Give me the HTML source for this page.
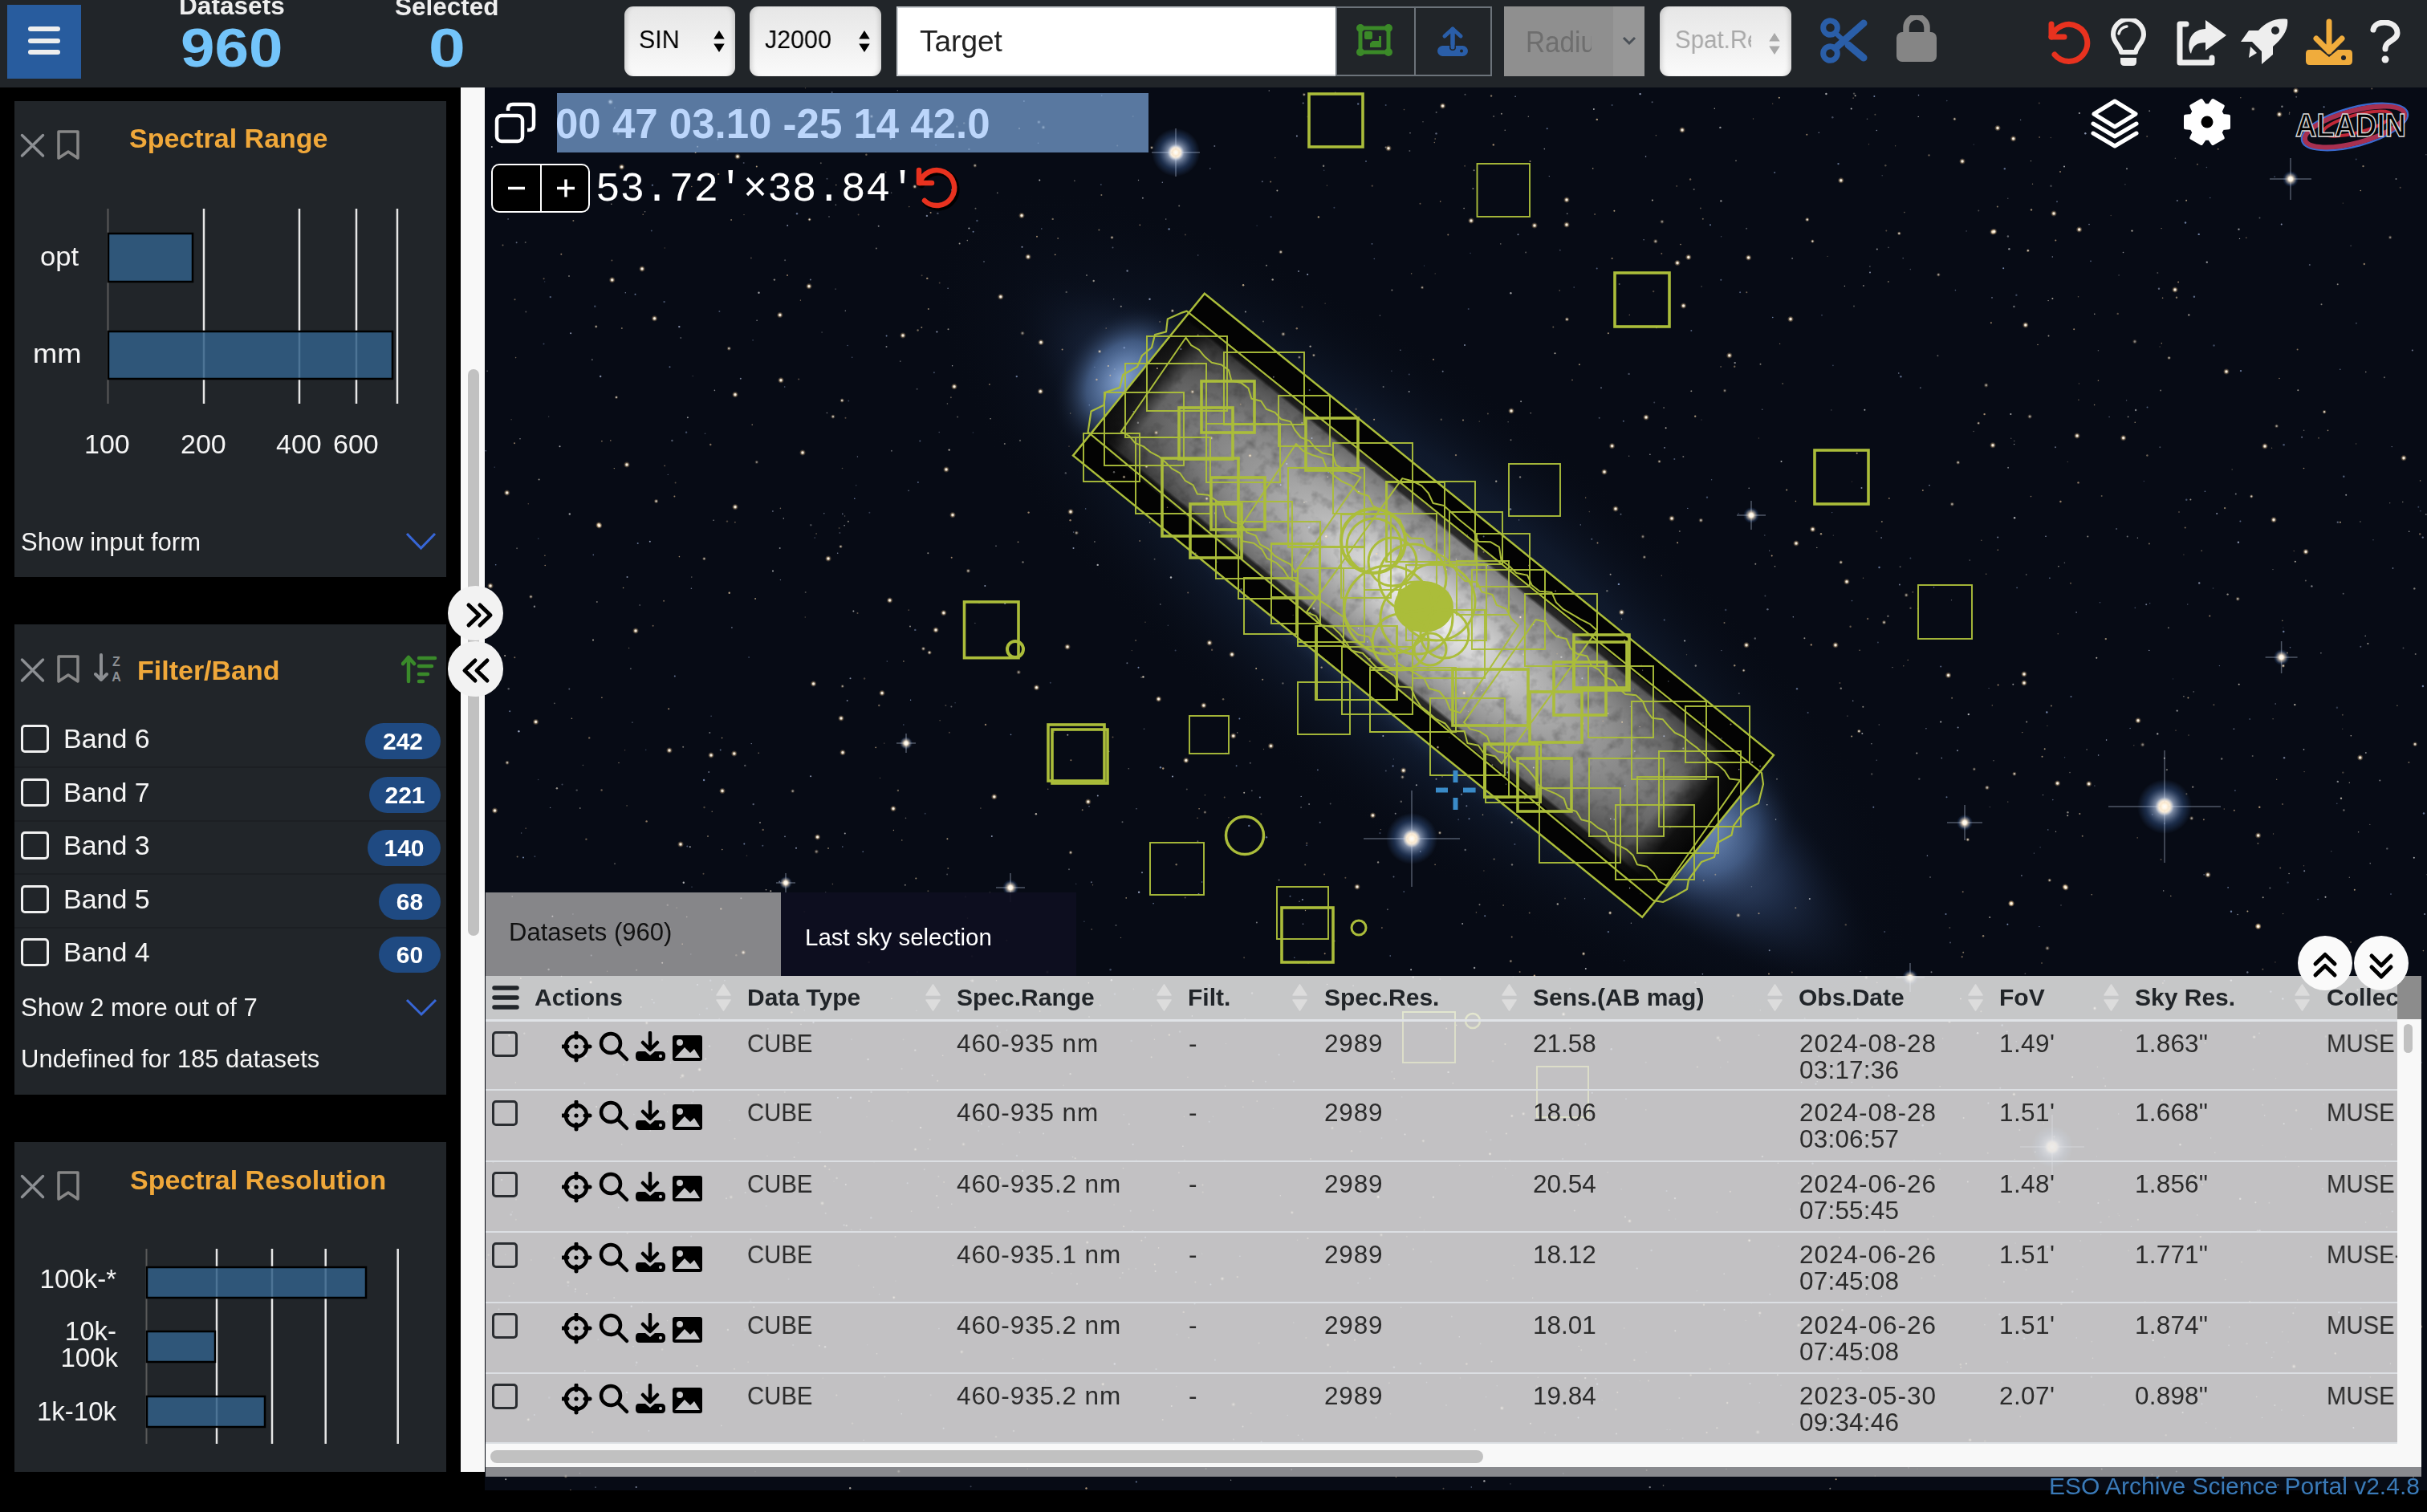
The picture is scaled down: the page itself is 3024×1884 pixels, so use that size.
<!DOCTYPE html>
<html><head><meta charset="utf-8">
<style>
*{box-sizing:border-box;margin:0;padding:0}
html,body{width:3024px;height:1884px;overflow:hidden;background:#000;font-family:"Liberation Sans",sans-serif;position:relative}
.abs{position:absolute}
#top{left:0;top:0;width:3024px;height:109px;background:#212529}
.sel{position:absolute;top:8px;height:87px;border-radius:11px;background:linear-gradient(#e6e6e6,#fafafa);box-shadow:inset 6px 0 6px -4px rgba(0,0,0,.18),inset -6px 0 6px -4px rgba(0,0,0,.18)}
.sel span{position:absolute;top:21px;font-size:32px;color:#000;line-height:40px;transform:scaleX(0.95);transform-origin:0 0;will-change:transform}
.arr{position:absolute;width:14px;height:27px;top:30px}
.panel{position:absolute;left:18px;width:538px;background:#212529}
.lbl{position:absolute;color:#f5f5f5;white-space:nowrap;will-change:transform}
.ttl{position:absolute;color:#f0a83a;font-weight:bold;font-size:34px;white-space:nowrap;line-height:40px;will-change:transform}
.badge{position:absolute;height:45px;border-radius:23px;background:#1f4a82;color:#fff;font-weight:bold;font-size:30px;line-height:45px;text-align:center;will-change:transform}
.cb{position:absolute;left:26px;width:35px;height:35px;border:3px solid #f0f0f0;border-radius:5px}
.rowsep{position:absolute;left:18px;width:538px;height:2px;background:#1c1f23}
</style></head><body>
<!-- TOP BAR -->
<div id="top" class="abs">
  <div class="abs" style="left:9px;top:6px;width:92px;height:92px;background:#285c9e"></div>
  <div class="abs" style="left:35px;top:33px;width:40px;height:6px;border-radius:3px;background:#eee"></div>
  <div class="abs" style="left:35px;top:48px;width:40px;height:6px;border-radius:3px;background:#eee"></div>
  <div class="abs" style="left:35px;top:62px;width:40px;height:6px;border-radius:3px;background:#eee"></div>
  <div class="lbl" style="left:223px;top:-9px;font-size:31px;font-weight:bold;color:#eee;line-height:34px;transform:scaleX(1.02);transform-origin:0 0">Datasets</div>
  <div class="lbl" style="left:225px;top:26px;font-size:67.6px;font-weight:bold;color:#73c4fa;line-height:68px;transform:scaleX(1.13);transform-origin:0 0">960</div>
  <div class="lbl" style="left:492px;top:-9px;font-size:31.5px;font-weight:bold;color:#eee;line-height:34px">Selected</div>
  <div class="lbl" style="left:534px;top:26px;font-size:67.6px;font-weight:bold;color:#73c4fa;line-height:68px;transform:scaleX(1.22);transform-origin:0 0">0</div>

  <div class="sel" style="left:778px;width:138px"><span style="left:18px">SIN</span>
    <svg class="arr" style="left:111px" viewBox="0 0 14 28"><path d="M7 0L14 11H0Z M7 28L14 17H0Z" fill="#000"/></svg></div>
  <div class="sel" style="left:934px;width:164px"><span style="left:19px">J2000</span>
    <svg class="arr" style="left:136px" viewBox="0 0 14 28"><path d="M7 0L14 11H0Z M7 28L14 17H0Z" fill="#000"/></svg></div>
  <div class="abs" style="left:1117px;top:8px;width:548px;height:87px;background:#fff;border:2px solid #c8ccd0;border-right:none"></div>
  <div class="lbl" style="left:1146px;top:30px;font-size:37px;color:#222;line-height:44px">Target</div>
  <div class="abs" style="left:1664px;top:8px;width:195px;height:87px;border:2px solid #6c737a"></div>
  <div class="abs" style="left:1762px;top:8px;width:2px;height:87px;background:#6c737a"></div>
  <svg class="abs" style="left:1690px;top:30px" width="45" height="40" viewBox="0 0 45 40">
    <rect x="5" y="5" width="35" height="30" fill="none" stroke="#3b8a28" stroke-width="5"/>
    <circle cx="5" cy="5" r="5" fill="#3b8a28"/><circle cx="40" cy="5" r="5" fill="#3b8a28"/><circle cx="5" cy="35" r="5" fill="#3b8a28"/><circle cx="40" cy="35" r="5" fill="#3b8a28"/>
    <rect x="10" y="9" width="10" height="10" rx="2" fill="#3b8a28"/><path d="M20 21h8v-6h3v14h-14v-5z" fill="#3b8a28"/>
  </svg>
  <svg class="abs" style="left:1790px;top:32px" width="40" height="40" viewBox="0 0 40 40">
    <path d="M20 28V4 M10 13L20 4L30 13" stroke="#2a5ea8" stroke-width="5" fill="none" stroke-linecap="round" stroke-linejoin="round"/>
    <rect x="1" y="25" width="38" height="13" rx="6.5" fill="#2a5ea8"/><circle cx="31" cy="31.5" r="2" fill="#212529"/>
    <circle cx="20" cy="27" r="4" fill="#212529"/><path d="M20 4V27" stroke="#2a5ea8" stroke-width="5" stroke-linecap="round"/>
  </svg>
  <div class="abs" style="left:1874px;top:8px;width:175px;height:87px;background:#8f8f8f"></div>
  <div class="abs" style="left:2010px;top:8px;width:39px;height:87px;background:#979797"></div>
  <div class="lbl" style="left:1901px;top:31px;font-size:37px;color:#6e6e6e;line-height:44px;width:82px;overflow:hidden"><span style="display:inline-block;transform:scaleX(0.9);transform-origin:0 0">Radius</span></div>
  <svg class="abs" style="left:2021px;top:45px" width="18" height="12" viewBox="0 0 18 12"><path d="M2 2L9 9L16 2" stroke="#4a5057" stroke-width="3" fill="none"/></svg>
  <div class="sel" style="left:2068px;width:164px"><span style="left:19px;color:#a9a9a9;top:22px;width:100px;overflow:hidden;white-space:nowrap;font-size:31px">Spat.Res</span>
    <svg class="arr" style="left:136px;top:33px" viewBox="0 0 14 28"><path d="M7 0L14 11H0Z M7 28L14 17H0Z" fill="#a9a9a9"/></svg></div>

  <!-- right icons -->
  <svg class="abs" style="left:2266px;top:20px" width="62" height="62" viewBox="0 0 62 62">
    <circle cx="14.5" cy="14.5" r="8.8" fill="none" stroke="#2a5ea8" stroke-width="7"/>
    <circle cx="14.5" cy="46.5" r="8.8" fill="none" stroke="#2a5ea8" stroke-width="7"/>
    <path d="M21 21L31 30.5" stroke="#2a5ea8" stroke-width="6"/>
    <path d="M21 40L56 9" stroke="#2a5ea8" stroke-width="9" stroke-linecap="round"/>
    <path d="M37 36L56 52" stroke="#2a5ea8" stroke-width="9" stroke-linecap="round"/>
  </svg>
  <svg class="abs" style="left:2362px;top:19px" width="52" height="60" viewBox="0 0 52 60">
    <path d="M13 24V15a13 13 0 0 1 26 0v9" fill="none" stroke="#858585" stroke-width="7.5"/>
    <rect x="1" y="21" width="50" height="37" rx="7" fill="#858585"/>
  </svg>
  <svg class="abs" style="left:2548px;top:24px" width="58" height="58" viewBox="0 0 58 58">
    <path d="M8 22A23 23 0 1 1 12 44" fill="none" stroke="#e8321f" stroke-width="7" stroke-linecap="round"/>
    <path d="M8 6V22H24" fill="none" stroke="#e8321f" stroke-width="7" stroke-linecap="round" stroke-linejoin="round"/>
  </svg>
  <svg class="abs" style="left:2630px;top:23px" width="44" height="62" viewBox="0 0 44 62">
    <path d="M13 42C12 34 3 30 3 20A19 19 0 0 1 41 20C41 30 32 34 31 42Z" fill="none" stroke="#eee" stroke-width="6" stroke-linejoin="round"/>
    <path d="M12 49H32V54Q32 59 27 59H17Q12 59 12 54Z" fill="#eee"/>
    <path d="M10 19A11 11 0 0 1 20 10" fill="none" stroke="#eee" stroke-width="3.5" stroke-linecap="round"/>
  </svg>
  <svg class="abs" style="left:2710px;top:22px" width="68" height="62" viewBox="0 0 68 62">
    <path d="M14 8H6V56H46V50" fill="none" stroke="#eee" stroke-width="7" stroke-linecap="round" stroke-linejoin="round"/>
    <path d="M38 3L64 22L38 41V31C28 31 22 34 20 45C15 38 15 15 38 14Z" fill="#eee"/>
  </svg>
  <svg class="abs" style="left:2790px;top:22px" width="62" height="62" viewBox="0 0 62 62">
    <path d="M60 2C45 0 33 6 24 16H12L2 30H16L28 42V58L42 46V36C54 26 62 14 60 2Z" fill="#eee"/>
    <path d="M14 36L22 44L12 50Z" fill="#eee"/>
    <circle cx="45" cy="16" r="5" fill="#212529"/>
  </svg>
  <svg class="abs" style="left:2871px;top:22px" width="62" height="62" viewBox="0 0 62 62">
    <path d="M31 5V42 M15 26L31 42L47 26" fill="none" stroke="#f0ac3c" stroke-width="7" stroke-linecap="round" stroke-linejoin="round"/>
    <path d="M6 40H20L31 49L42 40H56Q60 40 60 45V54Q60 59 55 59H7Q2 59 2 54V45Q2 40 6 40Z" fill="#f0ac3c"/>
    <circle cx="49" cy="50" r="3" fill="#212529"/>
  </svg>
  <svg class="abs" style="left:2952px;top:25px" width="40" height="54" viewBox="0 0 40 54">
    <path d="M5 12C6 7 11 3 19 3C28 3 35 8 35 16C35 26 20 25 20 36" fill="none" stroke="#eee" stroke-width="7" stroke-linecap="round"/>
    <circle cx="20" cy="49" r="4.5" fill="#eee"/>
  </svg>
</div>
<!-- SKY -->
<svg class="abs" style="left:604px;top:109px" width="2420" height="1748" viewBox="604 109 2420 1748">
<defs>
<radialGradient id="halo" cx="0" cy="0" r="1" gradientUnits="userSpaceOnUse" gradientTransform="translate(1803.4 788.8) rotate(39) scale(690 150)"><stop offset="0" stop-color="#9ab4e0" stop-opacity="0.8"/><stop offset="0.6" stop-color="#7a9ad0" stop-opacity="0.6"/><stop offset="0.78" stop-color="#4f70ac" stop-opacity="0.25"/><stop offset="1" stop-color="#0a0e18" stop-opacity="0"/></radialGradient>
<radialGradient id="blobA" cx="0" cy="0" r="1" gradientUnits="userSpaceOnUse" gradientTransform="translate(1398 472) rotate(39) scale(75 105)"><stop offset="0" stop-color="#a0c0f0" stop-opacity="0.8"/><stop offset="0.5" stop-color="#6f96d0" stop-opacity="0.45"/><stop offset="1" stop-color="#0a0e18" stop-opacity="0"/></radialGradient>
<radialGradient id="blobB" cx="0" cy="0" r="1" gradientUnits="userSpaceOnUse" gradientTransform="translate(2140 1035) rotate(39) scale(90 115)"><stop offset="0" stop-color="#8caee0" stop-opacity="0.45"/><stop offset="0.5" stop-color="#5f86c0" stop-opacity="0.25"/><stop offset="1" stop-color="#0a0e18" stop-opacity="0"/></radialGradient>
<radialGradient id="halo2" cx="0" cy="0" r="1" gradientUnits="userSpaceOnUse" gradientTransform="translate(1773 755) rotate(39) scale(760 260)"><stop offset="0" stop-color="#33507f" stop-opacity="0.5"/><stop offset="0.6" stop-color="#22385c" stop-opacity="0.3"/><stop offset="1" stop-color="#0a0e18" stop-opacity="0"/></radialGradient>
<radialGradient id="gal" cx="0" cy="0" r="1" gradientUnits="userSpaceOnUse" gradientTransform="translate(1773 755) rotate(39) scale(600 160)"><stop offset="0" stop-color="#ffffff"/><stop offset="0.08" stop-color="#e6e6e6"/><stop offset="0.3" stop-color="#b4b4b4"/><stop offset="0.55" stop-color="#858585"/><stop offset="0.75" stop-color="#555555"/><stop offset="0.88" stop-color="#2c2c2c"/><stop offset="1" stop-color="#141414"/></radialGradient>
<linearGradient id="endR" x1="0" y1="0" x2="1" y2="0"><stop offset="0" stop-color="#030303" stop-opacity="0"/><stop offset="0.5" stop-color="#030303" stop-opacity="0.85"/><stop offset="1" stop-color="#030303"/></linearGradient>
<linearGradient id="endL" x1="1" y1="0" x2="0" y2="0"><stop offset="0" stop-color="#030303" stop-opacity="0"/><stop offset="0.5" stop-color="#030303" stop-opacity="0.85"/><stop offset="1" stop-color="#030303"/></linearGradient>
<linearGradient id="edgeT" x1="0" y1="0" x2="0" y2="1"><stop offset="0" stop-color="#030303"/><stop offset="0.7" stop-color="#030303" stop-opacity="0.95"/><stop offset="1" stop-color="#030303" stop-opacity="0"/></linearGradient>
<linearGradient id="edgeB" x1="0" y1="1" x2="0" y2="0"><stop offset="0" stop-color="#030303"/><stop offset="0.7" stop-color="#030303" stop-opacity="0.95"/><stop offset="1" stop-color="#030303" stop-opacity="0"/></linearGradient>
<clipPath id="inner"><rect x="-456" y="-100" width="912" height="200" transform="translate(1773.5 754.25) rotate(39.04)"/></clipPath>
<radialGradient id="sg"><stop offset="0" stop-color="#fff" stop-opacity="1"/><stop offset="0.3" stop-color="#fff4e0" stop-opacity="0.9"/><stop offset="0.6" stop-color="#f0c890" stop-opacity="0.35"/><stop offset="1" stop-color="#f0c890" stop-opacity="0"/></radialGradient>
<radialGradient id="sgb"><stop offset="0" stop-color="#fff" stop-opacity="1"/><stop offset="0.2" stop-color="#fff" stop-opacity="1"/><stop offset="0.35" stop-color="#c8dcff" stop-opacity="0.6"/><stop offset="0.7" stop-color="#4a78c0" stop-opacity="0.3"/><stop offset="1" stop-color="#4a78c0" stop-opacity="0"/></radialGradient>
<filter id="tex" x="0" y="0" width="1" height="1"><feTurbulence type="fractalNoise" baseFrequency="0.06" numOctaves="3" seed="11"/><feColorMatrix type="matrix" values="1.1 0 0 0 0.42  1.1 0 0 0 0.42  1.1 0 0 0 0.42  0 0 0 0 1"/></filter>
</defs>
<rect x="604" y="109" width="2420" height="1748" fill="#070b15"/>
<rect x="604" y="109" width="2420" height="1748" fill="url(#halo2)"/>
<rect x="604" y="109" width="2420" height="1748" fill="url(#halo)"/>
<rect x="1200" y="300" width="400" height="400" fill="url(#blobA)"/>
<rect x="1950" y="850" width="450" height="450" fill="url(#blobB)"/>
<g transform="translate(1773.5 754.25) rotate(39.04)">
<rect x="-456.5" y="-130" width="913" height="260" fill="#030303"/>
</g>
<g clip-path="url(#inner)"><rect x="1200" y="300" width="1100" height="900" fill="url(#gal)"/><rect x="1200" y="300" width="1100" height="900" filter="url(#tex)" style="mix-blend-mode:multiply"/></g>
<g transform="translate(1773.5 754.25) rotate(39.04)"><rect x="-456" y="-101" width="912" height="12" fill="url(#edgeT)" opacity="0.7"/><rect x="-456" y="89" width="912" height="12" fill="url(#edgeB)" opacity="0.7"/><rect x="-456" y="-101" width="45" height="202" fill="url(#endL)" opacity="0.8"/><rect x="386" y="-101" width="70" height="202" fill="url(#endR)"/></g>
<circle cx="1387.7" cy="372.7" r="0.7" fill="#ffffff" fill-opacity="0.6195734313960888"/>
<circle cx="831.8" cy="1127.7" r="1.2" fill="#fff4e0" fill-opacity="0.2668730462988932"/>
<circle cx="1653.4" cy="231.1" r="0.7" fill="#f8d0a0" fill-opacity="0.4410336351141313"/>
<circle cx="2605.0" cy="325.4" r="0.8" fill="#a8c0f0" fill-opacity="0.5323449500825151"/>
<circle cx="2897.5" cy="1117.8" r="1" fill="#ffffff" fill-opacity="0.6893147975168139"/>
<circle cx="716.7" cy="1609.6" r="1" fill="#cfdcff" fill-opacity="0.3149147875108469"/>
<circle cx="889.1" cy="648.2" r="0.8" fill="#ffffff" fill-opacity="0.5117200736481098"/>
<circle cx="2150.2" cy="760.0" r="1.2" fill="#a8c0f0" fill-opacity="0.2782550387379954"/>
<circle cx="748.2" cy="469.0" r="1.2" fill="#cfdcff" fill-opacity="0.5997529487413631"/>
<circle cx="1730.8" cy="1723.2" r="1" fill="#ffe0b0" fill-opacity="0.3617919631858972"/>
<circle cx="1039.0" cy="1472.1" r="0.7" fill="#f8d0a0" fill-opacity="0.38511210334553136"/>
<circle cx="1802.2" cy="709.4" r="1" fill="#ffe0b0" fill-opacity="0.5240315585663816"/>
<circle cx="781.1" cy="1003.9" r="0.8" fill="#ffe0b0" fill-opacity="0.3183930405972272"/>
<circle cx="1787.3" cy="177.5" r="0.7" fill="#f8d0a0" fill-opacity="0.5078616731248228"/>
<circle cx="2722.7" cy="657.4" r="1" fill="#f8d0a0" fill-opacity="0.4735036578845444"/>
<circle cx="2532.5" cy="229.2" r="0.7" fill="#ffe0b0" fill-opacity="0.46334425183884"/>
<circle cx="2211.2" cy="215.1" r="1" fill="#a8c0f0" fill-opacity="0.5100758038229731"/>
<circle cx="2252.6" cy="888.0" r="1" fill="#a8c0f0" fill-opacity="0.4061523650598028"/>
<circle cx="2880.4" cy="730.4" r="1.2" fill="#ffffff" fill-opacity="0.4721618475506416"/>
<circle cx="1132.1" cy="611.4" r="0.8" fill="#cfdcff" fill-opacity="0.42592736640995216"/>
<circle cx="2712.8" cy="249.9" r="1" fill="#cfdcff" fill-opacity="0.4972479591148168"/>
<circle cx="2741.8" cy="1541.1" r="1.2" fill="#ffe0b0" fill-opacity="0.5678785192734258"/>
<circle cx="2991.3" cy="1302.4" r="1" fill="#fff4e0" fill-opacity="0.31791440760599904"/>
<circle cx="1030.4" cy="514.5" r="0.8" fill="#ffffff" fill-opacity="0.46823322865361044"/>
<circle cx="2029.7" cy="568.3" r="0.7" fill="#fff4e0" fill-opacity="0.4385259255063976"/>
<circle cx="1497.6" cy="1099.0" r="0.8" fill="#a8c0f0" fill-opacity="0.6366408771423335"/>
<circle cx="2903.5" cy="1253.9" r="0.7" fill="#cfdcff" fill-opacity="0.6547898545260784"/>
<circle cx="2491.5" cy="1637.6" r="1.2" fill="#cfdcff" fill-opacity="0.42913133375004286"/>
<circle cx="1557.8" cy="950.7" r="1" fill="#ffffff" fill-opacity="0.3357742919050635"/>
<circle cx="2986.9" cy="879.2" r="0.7" fill="#ffe0b0" fill-opacity="0.5203272672270165"/>
<circle cx="851.8" cy="1099.7" r="1.2" fill="#ffffff" fill-opacity="0.6770269413562451"/>
<circle cx="2089.2" cy="231.9" r="0.8" fill="#f8d0a0" fill-opacity="0.4193032128128984"/>
<circle cx="2139.3" cy="1779.2" r="1.2" fill="#ffe0b0" fill-opacity="0.46336815845429147"/>
<circle cx="883.2" cy="962.1" r="1" fill="#cfdcff" fill-opacity="0.4677255953873212"/>
<circle cx="811.8" cy="287.6" r="1" fill="#a8c0f0" fill-opacity="0.369140601272731"/>
<circle cx="2609.8" cy="391.2" r="0.7" fill="#fff4e0" fill-opacity="0.6779435077936159"/>
<circle cx="1882.4" cy="365.3" r="1.2" fill="#ffffff" fill-opacity="0.5911643317911717"/>
<circle cx="1325.4" cy="1232.8" r="0.7" fill="#a8c0f0" fill-opacity="0.6304514174722271"/>
<circle cx="1858.5" cy="1696.6" r="1" fill="#fff4e0" fill-opacity="0.48966657887179554"/>
<circle cx="2489.3" cy="685.3" r="0.8" fill="#f8d0a0" fill-opacity="0.6151800610481177"/>
<circle cx="2987.5" cy="1599.4" r="0.8" fill="#cfdcff" fill-opacity="0.5829428591690713"/>
<circle cx="1152.7" cy="1013.8" r="1" fill="#a8c0f0" fill-opacity="0.2630410678336144"/>
<circle cx="671.6" cy="597.4" r="1" fill="#fff4e0" fill-opacity="0.5616348737650555"/>
<circle cx="2918.8" cy="890.8" r="1" fill="#ffe0b0" fill-opacity="0.2862421564698819"/>
<circle cx="851.2" cy="930.7" r="1" fill="#fff4e0" fill-opacity="0.4671939859601101"/>
<circle cx="2988.3" cy="1175.7" r="0.7" fill="#cfdcff" fill-opacity="0.6591396390932807"/>
<circle cx="1436.5" cy="1233.2" r="0.7" fill="#cfdcff" fill-opacity="0.6020362978441405"/>
<circle cx="2419.3" cy="944.6" r="0.8" fill="#cfdcff" fill-opacity="0.6051109439591243"/>
<circle cx="1408.7" cy="1508.8" r="1" fill="#cfdcff" fill-opacity="0.43062406804046566"/>
<circle cx="2895.2" cy="1375.9" r="0.8" fill="#fff4e0" fill-opacity="0.2623969828189746"/>
<circle cx="2033.8" cy="922.4" r="0.8" fill="#f8d0a0" fill-opacity="0.6219297153364242"/>
<circle cx="2976.3" cy="1257.9" r="1" fill="#fff4e0" fill-opacity="0.4968970197940506"/>
<circle cx="921.0" cy="133.9" r="0.7" fill="#f8d0a0" fill-opacity="0.5872733028242823"/>
<circle cx="941.0" cy="1833.5" r="0.8" fill="#fff4e0" fill-opacity="0.2625971765318935"/>
<circle cx="1118.9" cy="985.0" r="1.2" fill="#ffe0b0" fill-opacity="0.36671415787159456"/>
<circle cx="1618.0" cy="338.1" r="1" fill="#cfdcff" fill-opacity="0.5481136736460548"/>
<circle cx="2576.4" cy="1012.3" r="1.2" fill="#fff4e0" fill-opacity="0.48932123309617015"/>
<circle cx="1870.9" cy="141.7" r="1" fill="#fff4e0" fill-opacity="0.5238495875281812"/>
<circle cx="2482.0" cy="370.9" r="0.8" fill="#cfdcff" fill-opacity="0.5285955576325727"/>
<circle cx="895.2" cy="216.9" r="1.2" fill="#f8d0a0" fill-opacity="0.49994884369611103"/>
<circle cx="2501.9" cy="294.5" r="1.2" fill="#ffffff" fill-opacity="0.3618224444693905"/>
<circle cx="1274.1" cy="1458.9" r="1.2" fill="#cfdcff" fill-opacity="0.5027782239954143"/>
<circle cx="2443.2" cy="1704.0" r="1" fill="#ffe0b0" fill-opacity="0.5256375479550072"/>
<circle cx="1827.4" cy="1004.3" r="1" fill="#cfdcff" fill-opacity="0.4786702695487323"/>
<circle cx="2557.8" cy="996.6" r="0.8" fill="#a8c0f0" fill-opacity="0.4854443437936974"/>
<circle cx="2723.9" cy="1730.8" r="1.2" fill="#fff4e0" fill-opacity="0.6279999025269426"/>
<circle cx="935.9" cy="321.6" r="1" fill="#ffe0b0" fill-opacity="0.2826457448454197"/>
<circle cx="1186.3" cy="236.8" r="1" fill="#ffffff" fill-opacity="0.653661894795445"/>
<circle cx="977.8" cy="1360.8" r="1" fill="#fff4e0" fill-opacity="0.3638985268568603"/>
<circle cx="936.2" cy="926.6" r="0.7" fill="#cfdcff" fill-opacity="0.6482197956686269"/>
<circle cx="998.0" cy="1276.4" r="0.8" fill="#fff4e0" fill-opacity="0.5678455985649289"/>
<circle cx="3009.7" cy="814.9" r="1" fill="#fff4e0" fill-opacity="0.41047665695351737"/>
<circle cx="827.1" cy="748.7" r="1" fill="#f8d0a0" fill-opacity="0.4564018457994322"/>
<circle cx="2305.6" cy="780.8" r="1.2" fill="#f8d0a0" fill-opacity="0.3829543499687167"/>
<circle cx="2929.1" cy="306.3" r="0.8" fill="#ffffff" fill-opacity="0.2878275701366657"/>
<circle cx="1262.0" cy="1692.5" r="0.8" fill="#ffe0b0" fill-opacity="0.5900994465373456"/>
<circle cx="2587.9" cy="1594.1" r="1" fill="#cfdcff" fill-opacity="0.31721557633183517"/>
<circle cx="2828.4" cy="1106.4" r="1" fill="#ffffff" fill-opacity="0.3755780356070915"/>
<circle cx="2539.0" cy="429.5" r="0.7" fill="#ffe0b0" fill-opacity="0.6722573690680732"/>
<circle cx="2139.3" cy="1510.2" r="0.7" fill="#f8d0a0" fill-opacity="0.635302886367467"/>
<circle cx="765.2" cy="1617.1" r="1" fill="#ffffff" fill-opacity="0.4026182997780863"/>
<circle cx="1942.4" cy="1728.8" r="1" fill="#f8d0a0" fill-opacity="0.308151159952898"/>
<circle cx="1879.1" cy="525.8" r="0.7" fill="#fff4e0" fill-opacity="0.367852881347171"/>
<circle cx="1042.4" cy="1738.6" r="1" fill="#f8d0a0" fill-opacity="0.5917742147493525"/>
<circle cx="1305.7" cy="983.2" r="0.8" fill="#ffe0b0" fill-opacity="0.4061504599575365"/>
<circle cx="648.0" cy="546.8" r="0.7" fill="#ffffff" fill-opacity="0.5798861725445411"/>
<circle cx="1937.5" cy="440.2" r="1" fill="#fff4e0" fill-opacity="0.6705892779020592"/>
<circle cx="861.2" cy="1540.5" r="1" fill="#a8c0f0" fill-opacity="0.4727507080559269"/>
<circle cx="2623.8" cy="796.1" r="1.2" fill="#ffe0b0" fill-opacity="0.5594837810608111"/>
<circle cx="2981.5" cy="708.0" r="0.8" fill="#cfdcff" fill-opacity="0.695247130143631"/>
<circle cx="2980.2" cy="1572.1" r="0.7" fill="#ffffff" fill-opacity="0.5314517414823184"/>
<circle cx="2733.2" cy="861.9" r="0.7" fill="#ffffff" fill-opacity="0.549352456097089"/>
<circle cx="1525.7" cy="993.4" r="1" fill="#f8d0a0" fill-opacity="0.3589958202966189"/>
<circle cx="1313.2" cy="912.1" r="0.8" fill="#ffe0b0" fill-opacity="0.4506210737051831"/>
<circle cx="1241.0" cy="1790.2" r="1.2" fill="#ffe0b0" fill-opacity="0.36000092227385205"/>
<circle cx="2940.9" cy="650.1" r="1" fill="#fff4e0" fill-opacity="0.25048101172521525"/>
<circle cx="1527.5" cy="938.7" r="1.2" fill="#a8c0f0" fill-opacity="0.3404410243904645"/>
<circle cx="1825.5" cy="117.7" r="1" fill="#ffffff" fill-opacity="0.3147393135710062"/>
<circle cx="2024.1" cy="797.7" r="1" fill="#ffe0b0" fill-opacity="0.5333514444884978"/>
<circle cx="808.4" cy="1782.9" r="0.8" fill="#a8c0f0" fill-opacity="0.6517605269118922"/>
<circle cx="2501.4" cy="1151.8" r="1" fill="#a8c0f0" fill-opacity="0.6931280882834332"/>
<circle cx="965.7" cy="1374.8" r="0.8" fill="#ffffff" fill-opacity="0.6211857115915439"/>
<circle cx="2334.3" cy="1005.7" r="1" fill="#a8c0f0" fill-opacity="0.5654739805720634"/>
<circle cx="1827.4" cy="1699.5" r="1.2" fill="#f8d0a0" fill-opacity="0.6257219170466618"/>
<circle cx="2551.3" cy="1553.6" r="1.2" fill="#a8c0f0" fill-opacity="0.5573029162752252"/>
<circle cx="2281.8" cy="510.9" r="0.7" fill="#ffffff" fill-opacity="0.30989193906414464"/>
<circle cx="1476.9" cy="292.4" r="1" fill="#f8d0a0" fill-opacity="0.27285114215683337"/>
<circle cx="649.6" cy="1038.0" r="0.8" fill="#cfdcff" fill-opacity="0.3687068026623982"/>
<circle cx="1709.8" cy="231.6" r="1.2" fill="#f8d0a0" fill-opacity="0.2913738675168512"/>
<circle cx="1876.9" cy="1412.5" r="1" fill="#ffe0b0" fill-opacity="0.6141484508924372"/>
<circle cx="2651.6" cy="519.4" r="0.8" fill="#fff4e0" fill-opacity="0.5829228661393338"/>
<circle cx="2965.3" cy="972.4" r="1" fill="#ffffff" fill-opacity="0.46555457383178167"/>
<circle cx="2258.5" cy="1449.7" r="1.2" fill="#a8c0f0" fill-opacity="0.5392433389218938"/>
<circle cx="791.5" cy="366.7" r="1" fill="#a8c0f0" fill-opacity="0.5844477658107807"/>
<circle cx="1340.7" cy="1101.4" r="0.7" fill="#cfdcff" fill-opacity="0.2772974563286388"/>
<circle cx="1254.4" cy="1283.7" r="0.8" fill="#a8c0f0" fill-opacity="0.470326439521353"/>
<circle cx="2319.5" cy="608.1" r="1" fill="#cfdcff" fill-opacity="0.595226391802179"/>
<circle cx="3007.8" cy="1068.8" r="1" fill="#ffffff" fill-opacity="0.6713144534291724"/>
<circle cx="646.4" cy="911.3" r="1.2" fill="#cfdcff" fill-opacity="0.6972851326383334"/>
<circle cx="1540.2" cy="1711.1" r="0.8" fill="#ffffff" fill-opacity="0.5116625654744833"/>
<circle cx="947.0" cy="1025.1" r="1" fill="#fff4e0" fill-opacity="0.5215145831487897"/>
<circle cx="2132.6" cy="597.7" r="0.7" fill="#a8c0f0" fill-opacity="0.41433483663292686"/>
<circle cx="1808.9" cy="1640.5" r="1" fill="#ffffff" fill-opacity="0.32157937103223583"/>
<circle cx="2902.9" cy="1300.4" r="1" fill="#ffe0b0" fill-opacity="0.5772322462001311"/>
<circle cx="1611.2" cy="766.4" r="0.7" fill="#ffe0b0" fill-opacity="0.25078362186287645"/>
<circle cx="2420.8" cy="1575.8" r="0.7" fill="#fff4e0" fill-opacity="0.5708606046086157"/>
<circle cx="2785.8" cy="615.6" r="1" fill="#ffffff" fill-opacity="0.42680472191849705"/>
<circle cx="3021.1" cy="1138.9" r="1" fill="#cfdcff" fill-opacity="0.5900453770445276"/>
<circle cx="2671.3" cy="599.6" r="0.7" fill="#a8c0f0" fill-opacity="0.3785304355303464"/>
<circle cx="2868.1" cy="544.8" r="1" fill="#cfdcff" fill-opacity="0.4799333445133315"/>
<circle cx="1063.4" cy="761.6" r="1" fill="#ffffff" fill-opacity="0.6153830203618476"/>
<circle cx="2130.8" cy="1705.7" r="1.2" fill="#f8d0a0" fill-opacity="0.3415461162016366"/>
<circle cx="799.0" cy="1740.7" r="1" fill="#cfdcff" fill-opacity="0.5267113327138171"/>
<circle cx="939.3" cy="1628.8" r="1" fill="#ffffff" fill-opacity="0.6603573595512633"/>
<circle cx="1935.3" cy="407.5" r="1" fill="#ffe0b0" fill-opacity="0.37678571778533854"/>
<circle cx="1222.9" cy="1400.3" r="1" fill="#cfdcff" fill-opacity="0.545197896714503"/>
<circle cx="1332.0" cy="1083.2" r="1" fill="#ffffff" fill-opacity="0.3252996104914119"/>
<circle cx="995.2" cy="472.4" r="1" fill="#f8d0a0" fill-opacity="0.34901136349025164"/>
<circle cx="2797.1" cy="1850.8" r="1" fill="#cfdcff" fill-opacity="0.312818228799875"/>
<circle cx="1069.6" cy="267.6" r="1" fill="#f8d0a0" fill-opacity="0.29099245290219394"/>
<circle cx="1182.7" cy="560.6" r="1.2" fill="#fff4e0" fill-opacity="0.6492631566452739"/>
<circle cx="2418.2" cy="830.5" r="1" fill="#a8c0f0" fill-opacity="0.4858756642379032"/>
<circle cx="1516.0" cy="700.2" r="0.7" fill="#cfdcff" fill-opacity="0.37488235614021376"/>
<circle cx="2945.8" cy="329.0" r="1.2" fill="#f8d0a0" fill-opacity="0.5333321076306726"/>
<circle cx="2692.1" cy="486.5" r="1" fill="#fff4e0" fill-opacity="0.4230523417136871"/>
<circle cx="2166.8" cy="863.9" r="1" fill="#ffffff" fill-opacity="0.30726115937910653"/>
<circle cx="1633.0" cy="1443.9" r="1" fill="#f8d0a0" fill-opacity="0.47042096294522584"/>
<circle cx="781.0" cy="1735.1" r="1.2" fill="#cfdcff" fill-opacity="0.6875085048528587"/>
<circle cx="1205.3" cy="299.6" r="0.8" fill="#fff4e0" fill-opacity="0.48506452320031357"/>
<circle cx="2254.6" cy="1754.7" r="1" fill="#ffffff" fill-opacity="0.49817541166832835"/>
<circle cx="699.7" cy="1476.5" r="0.8" fill="#f8d0a0" fill-opacity="0.6639640492716155"/>
<circle cx="2166.1" cy="640.0" r="0.8" fill="#a8c0f0" fill-opacity="0.36330727627660264"/>
<circle cx="2143.8" cy="1330.1" r="0.7" fill="#ffffff" fill-opacity="0.28165835876134915"/>
<circle cx="1873.1" cy="1127.9" r="1" fill="#ffe0b0" fill-opacity="0.35061236512451793"/>
<circle cx="2058.6" cy="127.3" r="1" fill="#cfdcff" fill-opacity="0.37537164264561973"/>
<circle cx="1369.6" cy="1576.3" r="0.8" fill="#cfdcff" fill-opacity="0.48682496849928525"/>
<circle cx="1927.7" cy="160.2" r="1" fill="#a8c0f0" fill-opacity="0.5423424909884409"/>
<circle cx="737.8" cy="448.3" r="1" fill="#ffffff" fill-opacity="0.3657652549633996"/>
<circle cx="2219.0" cy="1726.2" r="0.8" fill="#cfdcff" fill-opacity="0.2653438405179996"/>
<circle cx="1422.1" cy="844.1" r="1" fill="#fff4e0" fill-opacity="0.25303905948012245"/>
<circle cx="1310.9" cy="1586.3" r="0.7" fill="#fff4e0" fill-opacity="0.47306302589503246"/>
<circle cx="1089.0" cy="1447.7" r="0.8" fill="#fff4e0" fill-opacity="0.4593013331267928"/>
<circle cx="1245.4" cy="1663.6" r="0.7" fill="#f8d0a0" fill-opacity="0.4730941282551306"/>
<circle cx="1057.3" cy="499.4" r="1" fill="#a8c0f0" fill-opacity="0.2753876848291053"/>
<circle cx="2043.4" cy="1720.5" r="0.7" fill="#fff4e0" fill-opacity="0.26063292353118855"/>
<circle cx="2046.6" cy="835.1" r="0.7" fill="#fff4e0" fill-opacity="0.42699476333215"/>
<circle cx="2777.6" cy="1653.5" r="0.7" fill="#ffffff" fill-opacity="0.6692179741303264"/>
<circle cx="1400.8" cy="433.3" r="1.2" fill="#a8c0f0" fill-opacity="0.4604271226700556"/>
<circle cx="1358.6" cy="1377.0" r="1" fill="#ffe0b0" fill-opacity="0.44909581598764226"/>
<circle cx="867.7" cy="245.8" r="0.7" fill="#ffe0b0" fill-opacity="0.43908242158578087"/>
<circle cx="2746.1" cy="1089.9" r="0.8" fill="#cfdcff" fill-opacity="0.41048314940876834"/>
<circle cx="2592.2" cy="1545.9" r="1" fill="#ffffff" fill-opacity="0.27216580113295774"/>
<circle cx="1749.8" cy="760.5" r="1" fill="#fff4e0" fill-opacity="0.3954891336255668"/>
<circle cx="2388.3" cy="938.5" r="1" fill="#fff4e0" fill-opacity="0.6153210374074707"/>
<circle cx="2459.3" cy="180.1" r="0.7" fill="#cfdcff" fill-opacity="0.27816097446905175"/>
<circle cx="2830.6" cy="558.3" r="0.7" fill="#f8d0a0" fill-opacity="0.4025812898824992"/>
<circle cx="1263.0" cy="1783.0" r="1.2" fill="#ffffff" fill-opacity="0.3679776131056029"/>
<circle cx="2338.3" cy="662.2" r="1" fill="#ffe0b0" fill-opacity="0.2516972271703737"/>
<circle cx="2432.7" cy="1711.0" r="0.7" fill="#ffffff" fill-opacity="0.6217082474771127"/>
<circle cx="863.6" cy="1359.8" r="1" fill="#cfdcff" fill-opacity="0.6054094859433998"/>
<circle cx="2814.8" cy="1533.3" r="0.8" fill="#cfdcff" fill-opacity="0.332322654157261"/>
<circle cx="2546.2" cy="1399.9" r="0.8" fill="#f8d0a0" fill-opacity="0.3562641300075494"/>
<circle cx="2688.2" cy="914.4" r="1.2" fill="#ffffff" fill-opacity="0.48034815109364914"/>
<circle cx="1551.9" cy="388.6" r="1" fill="#ffffff" fill-opacity="0.5422956989350816"/>
<circle cx="1769.7" cy="1061.0" r="0.8" fill="#cfdcff" fill-opacity="0.6475635818939629"/>
<circle cx="2994.5" cy="572.0" r="0.7" fill="#fff4e0" fill-opacity="0.2933901603480959"/>
<circle cx="1810.3" cy="1349.7" r="1" fill="#fff4e0" fill-opacity="0.3553883344666587"/>
<circle cx="1612.8" cy="1193.3" r="0.8" fill="#a8c0f0" fill-opacity="0.4923540661569251"/>
<circle cx="2476.8" cy="1436.7" r="1" fill="#ffe0b0" fill-opacity="0.3757286098234198"/>
<circle cx="1251.8" cy="553.1" r="1" fill="#fff4e0" fill-opacity="0.44772899271058364"/>
<circle cx="1053.5" cy="520.7" r="1" fill="#f8d0a0" fill-opacity="0.3347125604514186"/>
<circle cx="760.8" cy="548.9" r="0.8" fill="#f8d0a0" fill-opacity="0.486838936091374"/>
<circle cx="2176.1" cy="284.7" r="1" fill="#ffffff" fill-opacity="0.29604958930627584"/>
<circle cx="1752.9" cy="1540.8" r="1" fill="#ffe0b0" fill-opacity="0.26816283944693936"/>
<circle cx="1314.7" cy="317.4" r="0.8" fill="#f8d0a0" fill-opacity="0.6878343308163155"/>
<circle cx="2015.3" cy="1734.9" r="1" fill="#f8d0a0" fill-opacity="0.639757297784027"/>
<circle cx="1690.9" cy="563.4" r="0.7" fill="#ffffff" fill-opacity="0.5368557819594904"/>
<circle cx="2321.5" cy="720.3" r="0.7" fill="#ffe0b0" fill-opacity="0.40300745191884235"/>
<circle cx="710.9" cy="1856.8" r="0.7" fill="#f8d0a0" fill-opacity="0.5795028015467469"/>
<circle cx="2815.8" cy="1533.2" r="1" fill="#cfdcff" fill-opacity="0.5552438830384177"/>
<circle cx="1052.1" cy="654.7" r="0.8" fill="#ffffff" fill-opacity="0.6078765256183695"/>
<circle cx="1930.3" cy="219.6" r="0.7" fill="#cfdcff" fill-opacity="0.5488118961271786"/>
<circle cx="978.0" cy="1042.4" r="0.8" fill="#cfdcff" fill-opacity="0.5629326494188985"/>
<circle cx="1595.7" cy="604.2" r="1" fill="#cfdcff" fill-opacity="0.6789349766307495"/>
<circle cx="1359.9" cy="1099.3" r="1" fill="#cfdcff" fill-opacity="0.4374004219337994"/>
<circle cx="2695.5" cy="1851.1" r="1" fill="#a8c0f0" fill-opacity="0.33874071557692437"/>
<circle cx="2365.8" cy="465.0" r="0.7" fill="#cfdcff" fill-opacity="0.6557337617162994"/>
<circle cx="1629.5" cy="1543.0" r="1" fill="#f8d0a0" fill-opacity="0.6472770759025752"/>
<circle cx="1719.4" cy="393.1" r="0.7" fill="#ffffff" fill-opacity="0.49819653529020813"/>
<circle cx="2154.4" cy="1699.3" r="0.7" fill="#f8d0a0" fill-opacity="0.5299875677917332"/>
<circle cx="1501.4" cy="990.8" r="0.8" fill="#ffe0b0" fill-opacity="0.3774827530444907"/>
<circle cx="1865.2" cy="1726.8" r="0.7" fill="#cfdcff" fill-opacity="0.47072934239432296"/>
<circle cx="2551.6" cy="1799.1" r="0.8" fill="#ffe0b0" fill-opacity="0.30699265954480714"/>
<circle cx="2886.2" cy="1814.3" r="1" fill="#ffe0b0" fill-opacity="0.2740185467410096"/>
<circle cx="2845.3" cy="787.0" r="1.2" fill="#a8c0f0" fill-opacity="0.6210500892327113"/>
<circle cx="991.9" cy="1482.6" r="0.8" fill="#f8d0a0" fill-opacity="0.43201804851463504"/>
<circle cx="2652.2" cy="1558.4" r="0.8" fill="#f8d0a0" fill-opacity="0.34816159470953534"/>
<circle cx="1571.4" cy="1014.3" r="1" fill="#ffe0b0" fill-opacity="0.3053755165432409"/>
<circle cx="1201.9" cy="1376.1" r="0.8" fill="#ffffff" fill-opacity="0.6477381315309887"/>
<circle cx="2642.8" cy="1284.1" r="1" fill="#ffffff" fill-opacity="0.42542643263775026"/>
<circle cx="1706.9" cy="1593.1" r="1" fill="#a8c0f0" fill-opacity="0.4390323392204584"/>
<circle cx="2014.0" cy="853.2" r="1" fill="#cfdcff" fill-opacity="0.4766102790628274"/>
<circle cx="1036.6" cy="115.1" r="1" fill="#cfdcff" fill-opacity="0.3558629155238605"/>
<circle cx="2451.8" cy="1472.4" r="1" fill="#fff4e0" fill-opacity="0.6147382096420859"/>
<circle cx="1572.8" cy="226.3" r="1" fill="#cfdcff" fill-opacity="0.41439954110436816"/>
<circle cx="2545.5" cy="990.6" r="0.7" fill="#ffffff" fill-opacity="0.5363966599749173"/>
<circle cx="803.0" cy="1391.1" r="1.2" fill="#ffffff" fill-opacity="0.2744192189606018"/>
<circle cx="1823.5" cy="769.5" r="0.8" fill="#ffffff" fill-opacity="0.6356815500547833"/>
<circle cx="3014.6" cy="1388.7" r="0.7" fill="#fff4e0" fill-opacity="0.3092278655005815"/>
<circle cx="2747.4" cy="612.2" r="0.8" fill="#a8c0f0" fill-opacity="0.6047716850376552"/>
<circle cx="2856.0" cy="223.5" r="1" fill="#f8d0a0" fill-opacity="0.590280895035709"/>
<circle cx="988.2" cy="1676.1" r="1" fill="#cfdcff" fill-opacity="0.3146075328020202"/>
<circle cx="1819.4" cy="1717.0" r="0.8" fill="#f8d0a0" fill-opacity="0.368290448763518"/>
<circle cx="1828.5" cy="666.7" r="0.7" fill="#fff4e0" fill-opacity="0.3319433743622858"/>
<circle cx="994.2" cy="1745.8" r="1" fill="#cfdcff" fill-opacity="0.32593391989511156"/>
<circle cx="2503.4" cy="310.2" r="1.2" fill="#ffffff" fill-opacity="0.5363434038030358"/>
<circle cx="1474.7" cy="1634.9" r="1.2" fill="#f8d0a0" fill-opacity="0.5110196587437981"/>
<circle cx="2739.7" cy="291.9" r="1.2" fill="#a8c0f0" fill-opacity="0.6354697236971212"/>
<circle cx="2389.8" cy="758.3" r="1" fill="#ffe0b0" fill-opacity="0.5098122303619083"/>
<circle cx="1475.8" cy="1445.6" r="1" fill="#fff4e0" fill-opacity="0.3295402264365415"/>
<circle cx="2403.5" cy="193.4" r="1.2" fill="#ffe0b0" fill-opacity="0.38953259876114893"/>
<circle cx="2941.6" cy="1630.3" r="1" fill="#a8c0f0" fill-opacity="0.25080593590590283"/>
<circle cx="685.8" cy="370.1" r="1.2" fill="#a8c0f0" fill-opacity="0.4445047936436469"/>
<circle cx="1844.7" cy="1674.4" r="0.8" fill="#cfdcff" fill-opacity="0.35226683822001326"/>
<circle cx="2184.5" cy="148.0" r="0.7" fill="#f8d0a0" fill-opacity="0.4097331586232964"/>
<circle cx="861.4" cy="733.3" r="0.8" fill="#cfdcff" fill-opacity="0.5126159137898664"/>
<circle cx="2029.6" cy="465.9" r="1.2" fill="#cfdcff" fill-opacity="0.32138054602322663"/>
<circle cx="638.2" cy="1510.0" r="0.8" fill="#cfdcff" fill-opacity="0.2931121012467957"/>
<circle cx="2148.5" cy="1632.0" r="1" fill="#cfdcff" fill-opacity="0.6152067372121507"/>
<circle cx="2944.5" cy="207.1" r="1.2" fill="#ffe0b0" fill-opacity="0.5176259192863244"/>
<circle cx="2003.9" cy="1161.1" r="1.2" fill="#a8c0f0" fill-opacity="0.47178324767815805"/>
<circle cx="1003.5" cy="109.7" r="0.7" fill="#f8d0a0" fill-opacity="0.2613513580165425"/>
<circle cx="1053.3" cy="387.3" r="0.7" fill="#ffffff" fill-opacity="0.5256878144883761"/>
<circle cx="2193.5" cy="453.8" r="1" fill="#fff4e0" fill-opacity="0.4832161413404147"/>
<circle cx="2159.3" cy="1241.0" r="1" fill="#f8d0a0" fill-opacity="0.3285877635990024"/>
<circle cx="1352.7" cy="633.9" r="0.7" fill="#a8c0f0" fill-opacity="0.602338380851346"/>
<circle cx="2335.3" cy="120.1" r="1" fill="#a8c0f0" fill-opacity="0.6605168723268025"/>
<circle cx="798.8" cy="1254.9" r="0.8" fill="#fff4e0" fill-opacity="0.6984747152580079"/>
<circle cx="1236.7" cy="1234.7" r="0.7" fill="#ffe0b0" fill-opacity="0.6510732679616237"/>
<circle cx="2842.9" cy="1757.1" r="1" fill="#a8c0f0" fill-opacity="0.2736397975660448"/>
<circle cx="2142.8" cy="1296.3" r="1.2" fill="#ffe0b0" fill-opacity="0.3830276451178002"/>
<circle cx="2851.1" cy="1672.0" r="0.7" fill="#f8d0a0" fill-opacity="0.25685246792730915"/>
<circle cx="1234.1" cy="521.7" r="0.8" fill="#fff4e0" fill-opacity="0.5857681074122434"/>
<circle cx="1395.0" cy="1647.5" r="1" fill="#f8d0a0" fill-opacity="0.3576254887189866"/>
<circle cx="2800.3" cy="1211.5" r="1.2" fill="#cfdcff" fill-opacity="0.46246323382757654"/>
<circle cx="1888.1" cy="120.2" r="0.7" fill="#cfdcff" fill-opacity="0.6800634445703067"/>
<circle cx="1169.9" cy="1655.6" r="0.8" fill="#cfdcff" fill-opacity="0.5301799313232267"/>
<circle cx="792.3" cy="1701.1" r="0.8" fill="#ffffff" fill-opacity="0.26210614741110705"/>
<circle cx="862.2" cy="1732.8" r="1" fill="#fff4e0" fill-opacity="0.5653329172203666"/>
<circle cx="678.7" cy="350.9" r="0.7" fill="#a8c0f0" fill-opacity="0.28052246147061416"/>
<circle cx="717.0" cy="1606.2" r="1" fill="#fff4e0" fill-opacity="0.61790273174313"/>
<circle cx="2587.3" cy="1667.0" r="0.7" fill="#a8c0f0" fill-opacity="0.6749466100538462"/>
<circle cx="863.2" cy="468.6" r="0.7" fill="#ffffff" fill-opacity="0.26549207029613225"/>
<circle cx="2655.5" cy="1528.4" r="0.7" fill="#a8c0f0" fill-opacity="0.5345166499116591"/>
<circle cx="1758.6" cy="340.9" r="0.8" fill="#ffe0b0" fill-opacity="0.39361249582046354"/>
<circle cx="1629.5" cy="145.6" r="1" fill="#ffe0b0" fill-opacity="0.2717836165584101"/>
<circle cx="2442.8" cy="1700.3" r="1.2" fill="#f8d0a0" fill-opacity="0.46423725026190127"/>
<circle cx="1300.1" cy="1412.4" r="1" fill="#ffffff" fill-opacity="0.4464023126913611"/>
<circle cx="2474.7" cy="715.2" r="0.7" fill="#f8d0a0" fill-opacity="0.5047438412715376"/>
<circle cx="2332.8" cy="1556.0" r="1.2" fill="#ffe0b0" fill-opacity="0.32666706700791315"/>
<circle cx="607.1" cy="462.2" r="0.7" fill="#ffffff" fill-opacity="0.4065116518800731"/>
<circle cx="835.6" cy="1324.2" r="0.8" fill="#cfdcff" fill-opacity="0.5166496780234094"/>
<circle cx="2920.4" cy="1009.5" r="1.2" fill="#fff4e0" fill-opacity="0.3776783888552965"/>
<circle cx="1123.6" cy="1331.7" r="1" fill="#fff4e0" fill-opacity="0.2994654593797035"/>
<circle cx="2144.4" cy="250.4" r="1.2" fill="#ffffff" fill-opacity="0.5325694903507076"/>
<circle cx="1464.6" cy="810.4" r="1" fill="#a8c0f0" fill-opacity="0.288777806907583"/>
<circle cx="2754.0" cy="153.0" r="0.8" fill="#ffe0b0" fill-opacity="0.3684379394548191"/>
<circle cx="2784.9" cy="985.1" r="1" fill="#a8c0f0" fill-opacity="0.3551090085861387"/>
<circle cx="1719.4" cy="1038.1" r="1.2" fill="#a8c0f0" fill-opacity="0.26524784979834"/>
<circle cx="2011.4" cy="1021.0" r="1" fill="#a8c0f0" fill-opacity="0.49918119299332986"/>
<circle cx="1386.5" cy="918.6" r="1" fill="#f8d0a0" fill-opacity="0.35396100697462013"/>
<circle cx="1412.4" cy="1232.4" r="0.8" fill="#f8d0a0" fill-opacity="0.33620820693945325"/>
<circle cx="1333.6" cy="1338.1" r="1.2" fill="#fff4e0" fill-opacity="0.5755012424304602"/>
<circle cx="2962.9" cy="1373.1" r="1.2" fill="#f8d0a0" fill-opacity="0.40688443759393655"/>
<circle cx="1175.6" cy="1779.7" r="1" fill="#a8c0f0" fill-opacity="0.6977164011136663"/>
<circle cx="1002.3" cy="1259.0" r="0.8" fill="#cfdcff" fill-opacity="0.31793204279783926"/>
<circle cx="962.9" cy="637.1" r="1" fill="#cfdcff" fill-opacity="0.3732192511728847"/>
<circle cx="868.5" cy="1702.1" r="1" fill="#fff4e0" fill-opacity="0.6483616506662484"/>
<circle cx="1726.7" cy="131.1" r="1" fill="#a8c0f0" fill-opacity="0.3501034786941033"/>
<circle cx="2977.7" cy="626.8" r="0.7" fill="#fff4e0" fill-opacity="0.3657461018984686"/>
<circle cx="2390.5" cy="118.6" r="0.8" fill="#cfdcff" fill-opacity="0.5655228630325951"/>
<circle cx="2025.6" cy="1240.3" r="0.8" fill="#a8c0f0" fill-opacity="0.5749988160551961"/>
<circle cx="2733.8" cy="1462.0" r="1.2" fill="#fff4e0" fill-opacity="0.5558184350406916"/>
<circle cx="2156.5" cy="902.4" r="1" fill="#ffe0b0" fill-opacity="0.5327246238685591"/>
<circle cx="840.8" cy="842.4" r="1" fill="#a8c0f0" fill-opacity="0.5706859747568265"/>
<circle cx="982.6" cy="1593.8" r="1" fill="#cfdcff" fill-opacity="0.2588457899518754"/>
<circle cx="2681.7" cy="1014.9" r="0.8" fill="#a8c0f0" fill-opacity="0.3976241096867676"/>
<circle cx="629.7" cy="1563.1" r="0.7" fill="#ffffff" fill-opacity="0.36305039781713455"/>
<circle cx="1131.3" cy="1360.9" r="0.8" fill="#f8d0a0" fill-opacity="0.4066933702341403"/>
<circle cx="2654.1" cy="907.5" r="0.8" fill="#a8c0f0" fill-opacity="0.4640809869802447"/>
<circle cx="643.0" cy="1494.4" r="1" fill="#f8d0a0" fill-opacity="0.40428331929934685"/>
<circle cx="2399.9" cy="907.7" r="0.8" fill="#cfdcff" fill-opacity="0.4812064431102256"/>
<circle cx="2861.1" cy="1383.5" r="1.2" fill="#ffe0b0" fill-opacity="0.5369059642812478"/>
<circle cx="1214.9" cy="776.5" r="0.7" fill="#ffffff" fill-opacity="0.28383323169024377"/>
<circle cx="2819.4" cy="1207.7" r="1" fill="#f8d0a0" fill-opacity="0.36932086459671193"/>
<circle cx="1147.1" cy="1405.1" r="1.2" fill="#fff4e0" fill-opacity="0.6974036143024959"/>
<circle cx="2929.3" cy="916.8" r="0.8" fill="#fff4e0" fill-opacity="0.6682385139128072"/>
<circle cx="770.7" cy="1504.6" r="0.8" fill="#cfdcff" fill-opacity="0.538989676929446"/>
<circle cx="2348.1" cy="1533.0" r="0.8" fill="#ffe0b0" fill-opacity="0.5497170045037449"/>
<circle cx="2614.3" cy="1499.1" r="1" fill="#cfdcff" fill-opacity="0.6982624291066382"/>
<circle cx="2442.9" cy="1244.5" r="1" fill="#ffe0b0" fill-opacity="0.602617060264955"/>
<circle cx="1161.7" cy="1339.9" r="1" fill="#cfdcff" fill-opacity="0.5554683766040979"/>
<circle cx="1769.4" cy="1516.9" r="1" fill="#ffe0b0" fill-opacity="0.3602352521902414"/>
<circle cx="1334.4" cy="947.3" r="1" fill="#f8d0a0" fill-opacity="0.5367855365458106"/>
<circle cx="2199.4" cy="742.5" r="1" fill="#cfdcff" fill-opacity="0.27567829257529947"/>
<circle cx="2607.5" cy="1692.3" r="0.8" fill="#f8d0a0" fill-opacity="0.6240975998738229"/>
<circle cx="2136.3" cy="135.2" r="0.7" fill="#fff4e0" fill-opacity="0.6782958599358783"/>
<circle cx="2191.4" cy="546.0" r="0.7" fill="#f8d0a0" fill-opacity="0.3142296484438943"/>
<circle cx="1169.4" cy="1466.0" r="1" fill="#fff4e0" fill-opacity="0.34384341207771946"/>
<circle cx="1578.0" cy="1043.3" r="1.2" fill="#a8c0f0" fill-opacity="0.5237652152011423"/>
<circle cx="2494.7" cy="1277.5" r="1.2" fill="#a8c0f0" fill-opacity="0.6274613580381101"/>
<circle cx="1081.6" cy="1320.0" r="1.2" fill="#ffffff" fill-opacity="0.5838603725856218"/>
<circle cx="1665.4" cy="1651.9" r="1.2" fill="#ffffff" fill-opacity="0.36902244641309356"/>
<circle cx="1170.7" cy="352.6" r="1" fill="#f8d0a0" fill-opacity="0.2763045126048235"/>
<circle cx="1734.4" cy="361.4" r="1" fill="#fff4e0" fill-opacity="0.4741790467804474"/>
<circle cx="1909.7" cy="1617.3" r="0.7" fill="#fff4e0" fill-opacity="0.6283453806810662"/>
<circle cx="1736.5" cy="1092.4" r="1" fill="#cfdcff" fill-opacity="0.4187310449154404"/>
<circle cx="1617.5" cy="1788.2" r="0.7" fill="#fff4e0" fill-opacity="0.536668412105507"/>
<circle cx="2143.4" cy="158.9" r="1.2" fill="#ffffff" fill-opacity="0.557164630900648"/>
<circle cx="2858.2" cy="686.6" r="0.7" fill="#f8d0a0" fill-opacity="0.46787712401229137"/>
<circle cx="2436.4" cy="361.6" r="0.8" fill="#a8c0f0" fill-opacity="0.437016197527759"/>
<circle cx="911.1" cy="274.1" r="1" fill="#ffe0b0" fill-opacity="0.46354008689772924"/>
<circle cx="1875.8" cy="1456.0" r="0.8" fill="#ffe0b0" fill-opacity="0.4458352897605292"/>
<circle cx="1626.2" cy="1077.4" r="1" fill="#ffe0b0" fill-opacity="0.40983033345997577"/>
<circle cx="1798.8" cy="692.3" r="1" fill="#f8d0a0" fill-opacity="0.40516459113916753"/>
<circle cx="1096.5" cy="969.4" r="0.7" fill="#ffe0b0" fill-opacity="0.3365389402411304"/>
<circle cx="2329.9" cy="332.0" r="0.7" fill="#ffffff" fill-opacity="0.4294952536017033"/>
<circle cx="1945.4" cy="818.7" r="1.2" fill="#ffffff" fill-opacity="0.4293169389306223"/>
<circle cx="866.6" cy="190.1" r="1" fill="#f8d0a0" fill-opacity="0.5946927580692383"/>
<circle cx="749.6" cy="984.5" r="1.2" fill="#f8d0a0" fill-opacity="0.41921989491220274"/>
<circle cx="959.9" cy="1286.6" r="1.2" fill="#a8c0f0" fill-opacity="0.2873514443310024"/>
<circle cx="699.5" cy="1216.5" r="0.8" fill="#ffffff" fill-opacity="0.5486288441835654"/>
<circle cx="2707.5" cy="845.9" r="0.7" fill="#a8c0f0" fill-opacity="0.25604190838330376"/>
<circle cx="2714.1" cy="351.4" r="1" fill="#f8d0a0" fill-opacity="0.5695597474731595"/>
<circle cx="2691.1" cy="432.0" r="0.7" fill="#ffe0b0" fill-opacity="0.2591764252171202"/>
<circle cx="1974.5" cy="1119.8" r="0.7" fill="#cfdcff" fill-opacity="0.5053783221913077"/>
<circle cx="699.3" cy="316.7" r="1" fill="#f8d0a0" fill-opacity="0.5630704634888719"/>
<circle cx="1583.2" cy="226.5" r="1" fill="#f8d0a0" fill-opacity="0.5163868706442922"/>
<circle cx="2873.3" cy="1823.4" r="1" fill="#cfdcff" fill-opacity="0.4969623770260769"/>
<circle cx="804.7" cy="934.4" r="0.8" fill="#a8c0f0" fill-opacity="0.2569885271947824"/>
<circle cx="615.6" cy="1304.2" r="0.7" fill="#ffffff" fill-opacity="0.34821034328115813"/>
<circle cx="897.7" cy="934.6" r="1" fill="#a8c0f0" fill-opacity="0.506045379929406"/>
<circle cx="1694.9" cy="1409.9" r="0.7" fill="#ffe0b0" fill-opacity="0.5983103877772302"/>
<circle cx="2330.8" cy="1604.4" r="0.7" fill="#ffe0b0" fill-opacity="0.5328804194992036"/>
<circle cx="2320.3" cy="914.1" r="1" fill="#ffffff" fill-opacity="0.5727445480554247"/>
<circle cx="631.6" cy="134.7" r="1.2" fill="#ffffff" fill-opacity="0.4250269099323315"/>
<circle cx="1360.2" cy="1158.0" r="1" fill="#f8d0a0" fill-opacity="0.2769005592340661"/>
<circle cx="1493.5" cy="1114.0" r="1" fill="#cfdcff" fill-opacity="0.5545957567163677"/>
<circle cx="954.7" cy="1502.8" r="1" fill="#a8c0f0" fill-opacity="0.32381156782335063"/>
<circle cx="2544.5" cy="942.7" r="1" fill="#ffe0b0" fill-opacity="0.603080894348371"/>
<circle cx="1975.7" cy="620.1" r="0.7" fill="#f8d0a0" fill-opacity="0.6882780380020004"/>
<circle cx="2305.9" cy="1555.3" r="1" fill="#f8d0a0" fill-opacity="0.5765692505229382"/>
<circle cx="641.5" cy="373.2" r="1" fill="#f8d0a0" fill-opacity="0.44285283974837053"/>
<circle cx="2753.3" cy="767.4" r="1" fill="#f8d0a0" fill-opacity="0.5971504535768342"/>
<circle cx="1171.1" cy="897.8" r="0.7" fill="#ffe0b0" fill-opacity="0.3683700488553222"/>
<circle cx="1626.5" cy="1134.5" r="0.7" fill="#ffe0b0" fill-opacity="0.6249539413549108"/>
<circle cx="2568.4" cy="1624.9" r="1.2" fill="#fff4e0" fill-opacity="0.37323190710631493"/>
<circle cx="2663.9" cy="1519.7" r="1" fill="#ffe0b0" fill-opacity="0.4905508211871877"/>
<circle cx="1910.8" cy="956.4" r="1" fill="#fff4e0" fill-opacity="0.6044605757115994"/>
<circle cx="2351.7" cy="1826.0" r="1" fill="#f8d0a0" fill-opacity="0.27590230595281634"/>
<circle cx="1561.1" cy="1347.2" r="1" fill="#f8d0a0" fill-opacity="0.5880101092473888"/>
<circle cx="2519.8" cy="912.6" r="0.7" fill="#f8d0a0" fill-opacity="0.6129587278499997"/>
<circle cx="2472.6" cy="516.1" r="1.2" fill="#f8d0a0" fill-opacity="0.6536180959403044"/>
<circle cx="2745.9" cy="1021.2" r="1" fill="#f8d0a0" fill-opacity="0.515197884968231"/>
<circle cx="1061.7" cy="445.2" r="0.8" fill="#a8c0f0" fill-opacity="0.38040837320142684"/>
<circle cx="2002.4" cy="736.3" r="1.2" fill="#fff4e0" fill-opacity="0.36083717808177695"/>
<circle cx="2836.7" cy="971.2" r="0.7" fill="#ffe0b0" fill-opacity="0.5347341072450968"/>
<circle cx="2509.4" cy="382.0" r="1.2" fill="#ffffff" fill-opacity="0.40521474611942937"/>
<circle cx="1861.1" cy="145.0" r="0.7" fill="#fff4e0" fill-opacity="0.6956820889699962"/>
<circle cx="2699.9" cy="959.1" r="1.2" fill="#fff4e0" fill-opacity="0.36771861289793917"/>
<circle cx="2489.6" cy="853.6" r="1" fill="#f8d0a0" fill-opacity="0.6184738332325611"/>
<circle cx="2935.6" cy="553.0" r="0.7" fill="#ffe0b0" fill-opacity="0.340445100498024"/>
<circle cx="1041.4" cy="255.2" r="0.7" fill="#ffffff" fill-opacity="0.5008211111004277"/>
<circle cx="2711.0" cy="910.1" r="0.7" fill="#f8d0a0" fill-opacity="0.5379289331199861"/>
<circle cx="2835.6" cy="1343.7" r="0.7" fill="#ffe0b0" fill-opacity="0.39341976310323384"/>
<circle cx="1168.4" cy="265.9" r="1.2" fill="#cfdcff" fill-opacity="0.3322016276549886"/>
<circle cx="2660.3" cy="757.4" r="0.8" fill="#a8c0f0" fill-opacity="0.349774836580871"/>
<circle cx="697.5" cy="556.2" r="1" fill="#ffffff" fill-opacity="0.6562395371405461"/>
<circle cx="2793.1" cy="1572.5" r="0.7" fill="#ffe0b0" fill-opacity="0.6038679575994642"/>
<circle cx="2321.3" cy="1239.4" r="1" fill="#ffffff" fill-opacity="0.29547554675608056"/>
<circle cx="1372.8" cy="119.1" r="0.8" fill="#a8c0f0" fill-opacity="0.5867005116079504"/>
<circle cx="2031.3" cy="880.4" r="0.7" fill="#cfdcff" fill-opacity="0.39576328558668195"/>
<circle cx="1226.0" cy="326.0" r="1" fill="#cfdcff" fill-opacity="0.3258597254650531"/>
<circle cx="1181.1" cy="359.2" r="0.7" fill="#cfdcff" fill-opacity="0.5727520209600334"/>
<circle cx="1076.2" cy="171.9" r="0.8" fill="#ffffff" fill-opacity="0.6702895449727335"/>
<circle cx="2701.5" cy="1662.5" r="0.8" fill="#cfdcff" fill-opacity="0.6810792587223972"/>
<circle cx="2844.8" cy="782.1" r="0.7" fill="#a8c0f0" fill-opacity="0.283819314491378"/>
<circle cx="2957.0" cy="672.8" r="0.8" fill="#cfdcff" fill-opacity="0.30202467465909133"/>
<circle cx="1489.8" cy="689.3" r="0.7" fill="#fff4e0" fill-opacity="0.5711759902769323"/>
<circle cx="1943.2" cy="362.0" r="0.8" fill="#ffe0b0" fill-opacity="0.43821835953967087"/>
<circle cx="1201.2" cy="153.4" r="1.2" fill="#ffe0b0" fill-opacity="0.40052898572284723"/>
<circle cx="1010.1" cy="967.3" r="1" fill="#cfdcff" fill-opacity="0.6564257023267175"/>
<circle cx="880.3" cy="1819.6" r="0.7" fill="#a8c0f0" fill-opacity="0.6527669187964652"/>
<circle cx="2221.2" cy="478.1" r="1" fill="#ffe0b0" fill-opacity="0.3036350985318937"/>
<circle cx="2430.7" cy="1805.8" r="1" fill="#ffe0b0" fill-opacity="0.6991385322615783"/>
<circle cx="2842.7" cy="279.5" r="1" fill="#cfdcff" fill-opacity="0.6532897597028848"/>
<circle cx="743.1" cy="1378.9" r="1" fill="#fff4e0" fill-opacity="0.6903840313696432"/>
<circle cx="642.8" cy="1519.7" r="1" fill="#f8d0a0" fill-opacity="0.31306454240794257"/>
<circle cx="608.7" cy="1563.8" r="1.2" fill="#ffe0b0" fill-opacity="0.3336192821118581"/>
<circle cx="1657.3" cy="1703.1" r="0.8" fill="#ffe0b0" fill-opacity="0.5071029311516054"/>
<circle cx="938.1" cy="423.9" r="0.8" fill="#a8c0f0" fill-opacity="0.3290323722252263"/>
<circle cx="2057.6" cy="1558.0" r="1.2" fill="#a8c0f0" fill-opacity="0.4729661505116213"/>
<circle cx="1266.8" cy="469.1" r="1.2" fill="#a8c0f0" fill-opacity="0.5684909219503409"/>
<circle cx="2568.0" cy="1128.0" r="0.8" fill="#ffffff" fill-opacity="0.2795628842823903"/>
<circle cx="2377.2" cy="822.4" r="0.7" fill="#f8d0a0" fill-opacity="0.6147912197294727"/>
<circle cx="1415.2" cy="1580.7" r="1" fill="#ffffff" fill-opacity="0.2569503123632263"/>
<circle cx="2806.7" cy="942.1" r="1" fill="#fff4e0" fill-opacity="0.3337234765545086"/>
<circle cx="2616.5" cy="750.7" r="0.8" fill="#a8c0f0" fill-opacity="0.4170243960523149"/>
<circle cx="2043.6" cy="117.1" r="1.2" fill="#cfdcff" fill-opacity="0.6859307459148126"/>
<circle cx="776.6" cy="732.5" r="0.8" fill="#ffe0b0" fill-opacity="0.6006059595945021"/>
<circle cx="2704.8" cy="1116.4" r="0.7" fill="#ffe0b0" fill-opacity="0.6427615057562279"/>
<circle cx="2912.8" cy="973.9" r="1.2" fill="#ffffff" fill-opacity="0.4887297277303484"/>
<circle cx="1904.3" cy="145.2" r="0.7" fill="#fff4e0" fill-opacity="0.5285855880534441"/>
<circle cx="1010.3" cy="654.2" r="1.2" fill="#ffffff" fill-opacity="0.25875302399256916"/>
<circle cx="2845.7" cy="1400.3" r="1" fill="#ffffff" fill-opacity="0.6267993362227768"/>
<circle cx="2145.1" cy="920.0" r="0.8" fill="#a8c0f0" fill-opacity="0.44989555326319525"/>
<circle cx="1452.7" cy="273.1" r="0.8" fill="#ffffff" fill-opacity="0.37285588201412645"/>
<circle cx="1728.9" cy="1133.2" r="1" fill="#ffffff" fill-opacity="0.3049168218276975"/>
<circle cx="1585.7" cy="348.4" r="1.2" fill="#fff4e0" fill-opacity="0.6374906100494037"/>
<circle cx="960.3" cy="1110.3" r="1" fill="#fff4e0" fill-opacity="0.676687479180889"/>
<circle cx="648.8" cy="1219.0" r="1" fill="#f8d0a0" fill-opacity="0.6278752172086804"/>
<circle cx="1876.0" cy="800.6" r="0.7" fill="#ffe0b0" fill-opacity="0.40234685153006056"/>
<circle cx="1185.7" cy="694.7" r="1" fill="#f8d0a0" fill-opacity="0.6119703024150587"/>
<circle cx="2812.9" cy="1533.7" r="1.2" fill="#ffffff" fill-opacity="0.39619589286162343"/>
<circle cx="958.8" cy="1297.9" r="1" fill="#fff4e0" fill-opacity="0.6417234785106871"/>
<circle cx="2208.7" cy="129.2" r="0.7" fill="#f8d0a0" fill-opacity="0.33437310256934827"/>
<circle cx="1388.9" cy="460.0" r="0.7" fill="#fff4e0" fill-opacity="0.3127330145934789"/>
<circle cx="2950.7" cy="1466.5" r="1" fill="#a8c0f0" fill-opacity="0.2710428376806591"/>
<circle cx="2976.1" cy="1810.3" r="0.7" fill="#ffffff" fill-opacity="0.6395230016761158"/>
<circle cx="2106.6" cy="1713.5" r="1.2" fill="#ffe0b0" fill-opacity="0.532712204709757"/>
<circle cx="2555.3" cy="171.5" r="0.7" fill="#ffe0b0" fill-opacity="0.3047648190270159"/>
<circle cx="637.1" cy="522.7" r="0.7" fill="#ffe0b0" fill-opacity="0.30086972443338694"/>
<circle cx="1445.1" cy="400.9" r="0.7" fill="#f8d0a0" fill-opacity="0.6815868528950076"/>
<circle cx="2833.0" cy="1684.7" r="0.7" fill="#cfdcff" fill-opacity="0.5156116738187086"/>
<circle cx="2859.3" cy="878.1" r="1.2" fill="#fff4e0" fill-opacity="0.6483357066819053"/>
<circle cx="2819.7" cy="1118.2" r="1" fill="#fff4e0" fill-opacity="0.5811688806081656"/>
<circle cx="2395.8" cy="611.0" r="1" fill="#f8d0a0" fill-opacity="0.5626755707456219"/>
<circle cx="1140.3" cy="784.9" r="1.2" fill="#a8c0f0" fill-opacity="0.4150661886289532"/>
<circle cx="2762.2" cy="639.9" r="1" fill="#cfdcff" fill-opacity="0.6184688533822227"/>
<circle cx="678.9" cy="692.2" r="0.8" fill="#f8d0a0" fill-opacity="0.49566201956888467"/>
<circle cx="2950.4" cy="802.0" r="1" fill="#fff4e0" fill-opacity="0.6378393465909005"/>
<circle cx="1181.3" cy="1082.0" r="1" fill="#ffe0b0" fill-opacity="0.3781689919178759"/>
<circle cx="2993.8" cy="625.5" r="0.7" fill="#fff4e0" fill-opacity="0.4980078382794519"/>
<circle cx="2070.3" cy="717.3" r="0.7" fill="#f8d0a0" fill-opacity="0.42454923708326003"/>
<circle cx="1668.6" cy="1394.5" r="0.7" fill="#f8d0a0" fill-opacity="0.3513251762478651"/>
<circle cx="2925.5" cy="1400.1" r="0.8" fill="#cfdcff" fill-opacity="0.40165709890953644"/>
<circle cx="1456.9" cy="1289.5" r="1.2" fill="#f8d0a0" fill-opacity="0.6324966588954356"/>
<circle cx="2591.3" cy="1014.1" r="1" fill="#ffe0b0" fill-opacity="0.6032240166053211"/>
<circle cx="2318.7" cy="1707.9" r="0.8" fill="#cfdcff" fill-opacity="0.6418716896065356"/>
<circle cx="614.5" cy="1447.4" r="1.2" fill="#ffffff" fill-opacity="0.474047434917629"/>
<circle cx="2933.8" cy="1108.8" r="1" fill="#ffe0b0" fill-opacity="0.6427425744356945"/>
<circle cx="2073.7" cy="772.5" r="1" fill="#a8c0f0" fill-opacity="0.45605608172437817"/>
<circle cx="2353.8" cy="621.0" r="1" fill="#f8d0a0" fill-opacity="0.4999082454885484"/>
<circle cx="1534.5" cy="671.8" r="1" fill="#cfdcff" fill-opacity="0.44981390748180616"/>
<circle cx="1049.8" cy="640.4" r="0.8" fill="#cfdcff" fill-opacity="0.5089447611544249"/>
<circle cx="2011.4" cy="262.7" r="1" fill="#ffe0b0" fill-opacity="0.6860274741763283"/>
<circle cx="2075.6" cy="533.2" r="1" fill="#fff4e0" fill-opacity="0.6874542671583687"/>
<circle cx="2760.8" cy="1779.9" r="0.7" fill="#ffffff" fill-opacity="0.36544690470561847"/>
<circle cx="2772.1" cy="633.1" r="1.2" fill="#ffe0b0" fill-opacity="0.49232482261208044"/>
<circle cx="3020.0" cy="1013.5" r="1.2" fill="#a8c0f0" fill-opacity="0.5583525467181603"/>
<circle cx="1546.6" cy="734.3" r="1.2" fill="#a8c0f0" fill-opacity="0.40799804481774005"/>
<circle cx="2897.9" cy="1291.5" r="1.2" fill="#fff4e0" fill-opacity="0.29453482318135793"/>
<circle cx="1510.1" cy="809.8" r="1.2" fill="#f8d0a0" fill-opacity="0.319399183958216"/>
<circle cx="1059.5" cy="845.3" r="1" fill="#cfdcff" fill-opacity="0.5952976262649288"/>
<circle cx="2780.0" cy="1135.8" r="1.2" fill="#a8c0f0" fill-opacity="0.617148733075777"/>
<circle cx="1017.1" cy="665.0" r="0.7" fill="#ffe0b0" fill-opacity="0.4806671226696194"/>
<circle cx="871.4" cy="1672.6" r="1" fill="#f8d0a0" fill-opacity="0.6496646127633006"/>
<circle cx="1622.5" cy="382.4" r="1" fill="#f8d0a0" fill-opacity="0.34350738694667304"/>
<circle cx="2765.4" cy="829.6" r="0.7" fill="#a8c0f0" fill-opacity="0.5042282147065359"/>
<circle cx="862.0" cy="1105.1" r="0.7" fill="#a8c0f0" fill-opacity="0.435137931666003"/>
<circle cx="2510.1" cy="645.2" r="1.2" fill="#ffffff" fill-opacity="0.6626644461378863"/>
<circle cx="1566.1" cy="281.2" r="0.7" fill="#a8c0f0" fill-opacity="0.263289441082572"/>
<circle cx="1028.0" cy="1453.2" r="1.2" fill="#ffe0b0" fill-opacity="0.6420122190644229"/>
<circle cx="2771.3" cy="1008.1" r="0.8" fill="#f8d0a0" fill-opacity="0.3393462343886138"/>
<circle cx="2060.2" cy="363.1" r="1.2" fill="#f8d0a0" fill-opacity="0.29799076104957883"/>
<circle cx="846.3" cy="407.1" r="1.2" fill="#cfdcff" fill-opacity="0.6204133749781766"/>
<circle cx="2087.5" cy="1518.9" r="0.7" fill="#a8c0f0" fill-opacity="0.25562106414179553"/>
<circle cx="2468.8" cy="673.3" r="0.8" fill="#ffe0b0" fill-opacity="0.3739514941441758"/>
<circle cx="683.6" cy="1208.0" r="1.2" fill="#ffffff" fill-opacity="0.40700210955920635"/>
<circle cx="1692.6" cy="783.1" r="0.7" fill="#fff4e0" fill-opacity="0.6507433148339161"/>
<circle cx="2014.0" cy="1786.4" r="1" fill="#ffffff" fill-opacity="0.52908012052798"/>
<circle cx="1207.4" cy="185.9" r="1.2" fill="#fff4e0" fill-opacity="0.3916570738164596"/>
<circle cx="2779.3" cy="1535.2" r="1" fill="#cfdcff" fill-opacity="0.5211486374093999"/>
<circle cx="2927.3" cy="975.2" r="0.7" fill="#fff4e0" fill-opacity="0.5547767696932546"/>
<circle cx="2237.3" cy="1131.3" r="1" fill="#ffe0b0" fill-opacity="0.42936907294309506"/>
<circle cx="2326.5" cy="148.2" r="0.8" fill="#ffffff" fill-opacity="0.3280604167019273"/>
<circle cx="1471.3" cy="435.1" r="1" fill="#cfdcff" fill-opacity="0.5026903123656015"/>
<circle cx="882.0" cy="1042.0" r="1" fill="#ffe0b0" fill-opacity="0.43143823216167687"/>
<circle cx="762.4" cy="324.5" r="1" fill="#f8d0a0" fill-opacity="0.3602212166362525"/>
<circle cx="1066.7" cy="604.7" r="0.8" fill="#cfdcff" fill-opacity="0.2657121231824888"/>
<circle cx="2211.5" cy="705.8" r="0.8" fill="#fff4e0" fill-opacity="0.5676420078310318"/>
<circle cx="828.2" cy="580.4" r="0.8" fill="#f8d0a0" fill-opacity="0.44948890812824494"/>
<circle cx="2627.9" cy="1516.0" r="0.8" fill="#ffe0b0" fill-opacity="0.40881340203742883"/>
<circle cx="2352.4" cy="767.8" r="1.2" fill="#fff4e0" fill-opacity="0.38376413381042007"/>
<circle cx="1755.8" cy="466.4" r="1" fill="#a8c0f0" fill-opacity="0.30892518478586695"/>
<circle cx="2313.7" cy="564.8" r="1" fill="#f8d0a0" fill-opacity="0.6954877880632734"/>
<circle cx="1897.9" cy="815.5" r="1.2" fill="#fff4e0" fill-opacity="0.30648250015508893"/>
<circle cx="2420.7" cy="1293.9" r="0.7" fill="#f8d0a0" fill-opacity="0.6333359053111383"/>
<circle cx="2385.0" cy="1445.9" r="0.7" fill="#a8c0f0" fill-opacity="0.5732023694027695"/>
<circle cx="955.1" cy="135.2" r="0.7" fill="#a8c0f0" fill-opacity="0.329671239474878"/>
<circle cx="2663.4" cy="670.2" r="0.7" fill="#ffffff" fill-opacity="0.5028957982453153"/>
<circle cx="1478.8" cy="983.6" r="1" fill="#fff4e0" fill-opacity="0.2796599468098839"/>
<circle cx="1357.3" cy="504.8" r="0.8" fill="#a8c0f0" fill-opacity="0.4295377383162366"/>
<circle cx="1465.3" cy="1584.9" r="1" fill="#a8c0f0" fill-opacity="0.6472402064716767"/>
<circle cx="2688.3" cy="340.0" r="1" fill="#fff4e0" fill-opacity="0.2633083311092989"/>
<circle cx="2248.7" cy="1269.0" r="1" fill="#cfdcff" fill-opacity="0.2613686222328141"/>
<circle cx="2307.2" cy="917.6" r="1" fill="#ffe0b0" fill-opacity="0.6577205191029031"/>
<circle cx="840.4" cy="618.5" r="1" fill="#f8d0a0" fill-opacity="0.5803240254419769"/>
<circle cx="2328.5" cy="179.7" r="0.7" fill="#f8d0a0" fill-opacity="0.32290589246017"/>
<circle cx="1083.4" cy="638.8" r="1" fill="#a8c0f0" fill-opacity="0.2676552403610568"/>
<circle cx="1356.4" cy="1224.8" r="0.8" fill="#f8d0a0" fill-opacity="0.627759418282246"/>
<circle cx="1983.8" cy="1361.7" r="1" fill="#cfdcff" fill-opacity="0.5515601717527765"/>
<circle cx="1996.2" cy="1744.6" r="0.7" fill="#a8c0f0" fill-opacity="0.37885080617280187"/>
<circle cx="708.0" cy="1602.1" r="1.2" fill="#a8c0f0" fill-opacity="0.2713060568150713"/>
<circle cx="1195.6" cy="303.4" r="1" fill="#fff4e0" fill-opacity="0.5997042653077589"/>
<circle cx="1440.5" cy="1706.1" r="1" fill="#a8c0f0" fill-opacity="0.5847698511714932"/>
<circle cx="3019.4" cy="1184.6" r="0.8" fill="#ffe0b0" fill-opacity="0.4872960745578267"/>
<circle cx="1448.7" cy="1768.9" r="1" fill="#ffe0b0" fill-opacity="0.561229239600775"/>
<circle cx="2391.4" cy="1559.8" r="1" fill="#f8d0a0" fill-opacity="0.2744352717285201"/>
<circle cx="2293.8" cy="857.8" r="1.2" fill="#fff4e0" fill-opacity="0.4702795292650539"/>
<circle cx="1062.1" cy="1773.6" r="1.2" fill="#ffe0b0" fill-opacity="0.3285388435861585"/>
<circle cx="1000.1" cy="1473.9" r="0.8" fill="#f8d0a0" fill-opacity="0.36712458180159724"/>
<circle cx="2935.9" cy="402.8" r="1" fill="#cfdcff" fill-opacity="0.2916427071439841"/>
<circle cx="2144.3" cy="348.8" r="1" fill="#a8c0f0" fill-opacity="0.4672501232999763"/>
<circle cx="2311.6" cy="119.3" r="1" fill="#fff4e0" fill-opacity="0.6711295793832042"/>
<circle cx="1454.5" cy="632.3" r="0.8" fill="#f8d0a0" fill-opacity="0.5034708347793441"/>
<circle cx="1411.2" cy="1534.3" r="1.2" fill="#cfdcff" fill-opacity="0.5922326704378991"/>
<circle cx="1013.5" cy="1274.1" r="1.2" fill="#cfdcff" fill-opacity="0.6277686770615842"/>
<circle cx="1586.8" cy="469.7" r="1" fill="#ffffff" fill-opacity="0.4122163617534481"/>
<circle cx="1103.6" cy="214.5" r="1" fill="#ffe0b0" fill-opacity="0.3387008938921086"/>
<circle cx="2301.9" cy="892.1" r="0.7" fill="#fff4e0" fill-opacity="0.3960118092617587"/>
<circle cx="1738.2" cy="743.5" r="0.8" fill="#f8d0a0" fill-opacity="0.2823182517328194"/>
<circle cx="630.2" cy="1843.2" r="1" fill="#ffffff" fill-opacity="0.5862808512353419"/>
<circle cx="1406.8" cy="1400.8" r="1" fill="#ffffff" fill-opacity="0.540298487395006"/>
<circle cx="2919.3" cy="962.6" r="1.2" fill="#ffe0b0" fill-opacity="0.25373595961692164"/>
<circle cx="2829.3" cy="1235.6" r="1.2" fill="#a8c0f0" fill-opacity="0.5436717146241161"/>
<circle cx="1212.4" cy="539.0" r="0.8" fill="#a8c0f0" fill-opacity="0.2624508310957392"/>
<circle cx="2478.1" cy="1576.6" r="1" fill="#ffe0b0" fill-opacity="0.33358063014529743"/>
<circle cx="2148.2" cy="1587.3" r="0.8" fill="#ffffff" fill-opacity="0.6030776420495212"/>
<circle cx="2613.6" cy="1406.6" r="1" fill="#cfdcff" fill-opacity="0.33304427781170054"/>
<circle cx="2601.3" cy="668.6" r="1" fill="#fff4e0" fill-opacity="0.4980103925903937"/>
<circle cx="1497.6" cy="1562.3" r="0.8" fill="#ffffff" fill-opacity="0.26856384387803245"/>
<circle cx="1975.8" cy="1207.1" r="1" fill="#ffffff" fill-opacity="0.6752201076403175"/>
<circle cx="1800.4" cy="982.2" r="0.8" fill="#ffe0b0" fill-opacity="0.5211813044659961"/>
<circle cx="2120.1" cy="357.0" r="0.8" fill="#fff4e0" fill-opacity="0.31223509944554245"/>
<circle cx="2144.9" cy="810.6" r="0.7" fill="#cfdcff" fill-opacity="0.46573063161869643"/>
<circle cx="1132.2" cy="760.1" r="0.7" fill="#f8d0a0" fill-opacity="0.6348975127569743"/>
<circle cx="2508.3" cy="852.7" r="1" fill="#ffffff" fill-opacity="0.5477312861001805"/>
<circle cx="1849.4" cy="845.3" r="1" fill="#ffffff" fill-opacity="0.4474120352712203"/>
<circle cx="2216.0" cy="1553.0" r="0.8" fill="#cfdcff" fill-opacity="0.38308314458941733"/>
<circle cx="1676.4" cy="1093.8" r="1" fill="#f8d0a0" fill-opacity="0.3379371394289806"/>
<circle cx="809.8" cy="674.8" r="1" fill="#cfdcff" fill-opacity="0.6870831202016241"/>
<circle cx="2803.1" cy="1621.8" r="1" fill="#f8d0a0" fill-opacity="0.5289411614585473"/>
<circle cx="2567.0" cy="213.9" r="1" fill="#f8d0a0" fill-opacity="0.5462962514435307"/>
<circle cx="1971.4" cy="845.2" r="1" fill="#cfdcff" fill-opacity="0.5454238708414956"/>
<circle cx="935.2" cy="1621.5" r="1.2" fill="#a8c0f0" fill-opacity="0.26252875537909254"/>
<circle cx="1061.0" cy="1295.3" r="1" fill="#a8c0f0" fill-opacity="0.2883429595538461"/>
<circle cx="2202.4" cy="759.3" r="1.2" fill="#cfdcff" fill-opacity="0.4120005480087572"/>
<circle cx="1185.4" cy="880.5" r="1" fill="#ffffff" fill-opacity="0.35226006419379813"/>
<circle cx="2947.8" cy="463.5" r="0.7" fill="#fff4e0" fill-opacity="0.637978137111622"/>
<circle cx="1217.4" cy="275.0" r="1.2" fill="#a8c0f0" fill-opacity="0.3631939703158595"/>
<circle cx="1788.1" cy="1077.4" r="0.8" fill="#f8d0a0" fill-opacity="0.5077181712800692"/>
<circle cx="877.5" cy="1006.0" r="1.2" fill="#f8d0a0" fill-opacity="0.2861028815298646"/>
<circle cx="1591.4" cy="237.4" r="1" fill="#fff4e0" fill-opacity="0.6385646211088356"/>
<circle cx="1936.4" cy="1358.1" r="0.7" fill="#a8c0f0" fill-opacity="0.6957958987516959"/>
<circle cx="2350.3" cy="287.5" r="1" fill="#f8d0a0" fill-opacity="0.3270648336826436"/>
<circle cx="2927.3" cy="1093.2" r="0.7" fill="#fff4e0" fill-opacity="0.4180138971602452"/>
<circle cx="2101.5" cy="815.8" r="0.7" fill="#ffe0b0" fill-opacity="0.2687821686776503"/>
<circle cx="2302.7" cy="1779.4" r="1" fill="#ffe0b0" fill-opacity="0.30424194312350383"/>
<circle cx="932.1" cy="1697.1" r="0.7" fill="#f8d0a0" fill-opacity="0.6948787673745771"/>
<circle cx="1091.9" cy="309.5" r="1" fill="#fff4e0" fill-opacity="0.4151420793342989"/>
<circle cx="2640.4" cy="1514.6" r="0.7" fill="#ffe0b0" fill-opacity="0.3052250415659321"/>
<circle cx="1506.7" cy="1397.7" r="1" fill="#a8c0f0" fill-opacity="0.47004461228532113"/>
<circle cx="2580.0" cy="726.8" r="1" fill="#f8d0a0" fill-opacity="0.39731294334947653"/>
<circle cx="2063.4" cy="168.7" r="0.8" fill="#ffe0b0" fill-opacity="0.4094593851783617"/>
<circle cx="2283.3" cy="146.2" r="1.2" fill="#cfdcff" fill-opacity="0.30110927750192595"/>
<circle cx="654.7" cy="302.0" r="1" fill="#fff4e0" fill-opacity="0.3176101662174671"/>
<circle cx="2857.3" cy="1636.3" r="1" fill="#fff4e0" fill-opacity="0.5147419452215096"/>
<circle cx="1209.6" cy="1852.2" r="1" fill="#cfdcff" fill-opacity="0.2562103130753425"/>
<circle cx="1432.5" cy="372.8" r="1.2" fill="#cfdcff" fill-opacity="0.6428764549213519"/>
<circle cx="2541.1" cy="171.0" r="0.8" fill="#f8d0a0" fill-opacity="0.6182341075696716"/>
<circle cx="2248.4" cy="795.2" r="1" fill="#fff4e0" fill-opacity="0.5618135700397217"/>
<circle cx="1689.6" cy="509.7" r="1.2" fill="#f8d0a0" fill-opacity="0.28414760315730875"/>
<circle cx="1400.8" cy="487.1" r="0.8" fill="#f8d0a0" fill-opacity="0.5310786069903164"/>
<circle cx="1115.5" cy="1540.9" r="1" fill="#ffe0b0" fill-opacity="0.509669102063644"/>
<circle cx="1542.7" cy="727.2" r="0.7" fill="#ffe0b0" fill-opacity="0.5106227380599602"/>
<circle cx="1411.7" cy="144.9" r="1" fill="#f8d0a0" fill-opacity="0.27042167100231"/>
<circle cx="956.9" cy="1281.9" r="1" fill="#cfdcff" fill-opacity="0.3730021292609521"/>
<circle cx="1814.0" cy="567.1" r="1.2" fill="#f8d0a0" fill-opacity="0.48766682455677834"/>
<circle cx="2919.8" cy="1843.3" r="0.7" fill="#f8d0a0" fill-opacity="0.6561878148236181"/>
<circle cx="834.5" cy="457.3" r="1" fill="#a8c0f0" fill-opacity="0.5072964909343457"/>
<circle cx="843.6" cy="1493.2" r="0.8" fill="#fff4e0" fill-opacity="0.5566002114296984"/>
<circle cx="1339.7" cy="1443.3" r="1" fill="#f8d0a0" fill-opacity="0.6339414688635192"/>
<circle cx="1197.4" cy="1634.8" r="1" fill="#ffe0b0" fill-opacity="0.2772020609445965"/>
<circle cx="1420.1" cy="674.0" r="1" fill="#f8d0a0" fill-opacity="0.4152784567504385"/>
<circle cx="1193.1" cy="519.5" r="1" fill="#fff4e0" fill-opacity="0.3110290333063375"/>
<circle cx="621.5" cy="1631.5" r="1" fill="#cfdcff" fill-opacity="0.4504832295941813"/>
<circle cx="1980.3" cy="637.6" r="0.8" fill="#f8d0a0" fill-opacity="0.27984637517270966"/>
<circle cx="1333.6" cy="648.3" r="1.2" fill="#f8d0a0" fill-opacity="0.5464868312466391"/>
<circle cx="2941.3" cy="237.5" r="0.8" fill="#f8d0a0" fill-opacity="0.666150187224257"/>
<circle cx="2019.5" cy="640.8" r="1" fill="#cfdcff" fill-opacity="0.4106395128127176"/>
<circle cx="2478.1" cy="857.6" r="0.7" fill="#cfdcff" fill-opacity="0.39366577308325146"/>
<circle cx="1028.1" cy="1678.2" r="1.2" fill="#ffffff" fill-opacity="0.5913212632689946"/>
<circle cx="2120.0" cy="523.1" r="0.7" fill="#fff4e0" fill-opacity="0.271462461201907"/>
<circle cx="1688.0" cy="1669.7" r="1" fill="#f8d0a0" fill-opacity="0.5416422795117382"/>
<circle cx="1080.0" cy="1391.8" r="0.8" fill="#f8d0a0" fill-opacity="0.2718704844690023"/>
<circle cx="781.7" cy="1536.0" r="1.2" fill="#ffe0b0" fill-opacity="0.5735564430169718"/>
<circle cx="616.2" cy="582.1" r="0.7" fill="#a8c0f0" fill-opacity="0.39530332211628183"/>
<circle cx="670.7" cy="671.1" r="0.7" fill="#a8c0f0" fill-opacity="0.46884587393993904"/>
<circle cx="2079.7" cy="1508.1" r="0.8" fill="#ffffff" fill-opacity="0.6384872089059825"/>
<circle cx="2531.0" cy="261.4" r="1.2" fill="#ffe0b0" fill-opacity="0.5991823797856417"/>
<circle cx="2994.5" cy="807.4" r="1" fill="#ffffff" fill-opacity="0.2615834244816008"/>
<circle cx="1370.9" cy="1252.4" r="1" fill="#ffffff" fill-opacity="0.4368107369265363"/>
<circle cx="2322.5" cy="1568.4" r="0.8" fill="#ffffff" fill-opacity="0.2583706048897369"/>
<circle cx="1113.4" cy="1034.5" r="0.7" fill="#ffe0b0" fill-opacity="0.6163077776340917"/>
<circle cx="1628.2" cy="1050.6" r="1.2" fill="#f8d0a0" fill-opacity="0.31903443966665646"/>
<circle cx="2979.0" cy="1114.1" r="0.8" fill="#a8c0f0" fill-opacity="0.5284042609186761"/>
<circle cx="2572.6" cy="943.8" r="0.7" fill="#a8c0f0" fill-opacity="0.389163741419005"/>
<circle cx="2473.7" cy="1817.5" r="1" fill="#f8d0a0" fill-opacity="0.3752182518140204"/>
<circle cx="1870.4" cy="1753.8" r="0.8" fill="#ffe0b0" fill-opacity="0.2540681384590226"/>
<circle cx="1755.3" cy="1254.6" r="1" fill="#fff4e0" fill-opacity="0.6952863215134124"/>
<circle cx="1156.2" cy="1431.5" r="0.7" fill="#ffffff" fill-opacity="0.5310834486809699"/>
<circle cx="899.8" cy="1058.6" r="0.8" fill="#f8d0a0" fill-opacity="0.5998169826851689"/>
<circle cx="1231.1" cy="1168.4" r="0.8" fill="#fff4e0" fill-opacity="0.6418758525102294"/>
<circle cx="2674.8" cy="1470.9" r="1.2" fill="#ffffff" fill-opacity="0.40787266604712136"/>
<circle cx="2321.3" cy="880.8" r="1" fill="#fff4e0" fill-opacity="0.536256517176025"/>
<circle cx="1437.0" cy="1508.3" r="1" fill="#fff4e0" fill-opacity="0.3957242910222552"/>
<circle cx="2790.5" cy="297.4" r="0.7" fill="#ffffff" fill-opacity="0.6130382797901102"/>
<circle cx="2815.0" cy="1287.5" r="1" fill="#ffffff" fill-opacity="0.35265253636159366"/>
<circle cx="1513.9" cy="1694.5" r="1" fill="#a8c0f0" fill-opacity="0.5322052414502962"/>
<circle cx="1146.3" cy="549.4" r="1" fill="#a8c0f0" fill-opacity="0.4452075184048945"/>
<circle cx="1163.9" cy="464.2" r="1" fill="#a8c0f0" fill-opacity="0.37540681760241945"/>
<circle cx="2732.2" cy="980.6" r="1.2" fill="#fff4e0" fill-opacity="0.4648170433072855"/>
<circle cx="2864.0" cy="1453.6" r="0.8" fill="#ffe0b0" fill-opacity="0.3771546750500412"/>
<circle cx="1406.3" cy="957.7" r="0.8" fill="#fff4e0" fill-opacity="0.3938956879619361"/>
<circle cx="2080.8" cy="1781.5" r="0.8" fill="#f8d0a0" fill-opacity="0.27345755023722434"/>
<circle cx="2496.9" cy="1597.2" r="1" fill="#ffffff" fill-opacity="0.6009166903665147"/>
<circle cx="2693.3" cy="427.7" r="0.8" fill="#ffe0b0" fill-opacity="0.5583193563743742"/>
<circle cx="2552.1" cy="374.6" r="0.7" fill="#fff4e0" fill-opacity="0.6602231933639857"/>
<circle cx="968.9" cy="1395.6" r="0.7" fill="#fff4e0" fill-opacity="0.4590156090054385"/>
<circle cx="1565.2" cy="833.0" r="1" fill="#ffe0b0" fill-opacity="0.6908425022120721"/>
<circle cx="683.7" cy="519.1" r="0.7" fill="#ffffff" fill-opacity="0.3106742920514304"/>
<circle cx="2044.3" cy="1113.8" r="0.7" fill="#a8c0f0" fill-opacity="0.2589707990865662"/>
<circle cx="3001.7" cy="662.2" r="0.7" fill="#ffffff" fill-opacity="0.680724648530109"/>
<circle cx="2952.8" cy="1027.4" r="0.7" fill="#fff4e0" fill-opacity="0.35076052999813656"/>
<circle cx="1911.9" cy="1215.8" r="1.2" fill="#f8d0a0" fill-opacity="0.697025108714129"/>
<circle cx="1886.4" cy="1576.6" r="0.7" fill="#ffe0b0" fill-opacity="0.6867208063364909"/>
<circle cx="2668.7" cy="1808.2" r="0.8" fill="#a8c0f0" fill-opacity="0.2825747186156942"/>
<circle cx="2306.7" cy="135.6" r="1" fill="#ffffff" fill-opacity="0.6848465920942777"/>
<circle cx="1079.4" cy="192.7" r="1.2" fill="#ffe0b0" fill-opacity="0.3702435709891137"/>
<circle cx="1392.2" cy="181.4" r="1" fill="#f8d0a0" fill-opacity="0.3769613932592013"/>
<circle cx="1404.4" cy="826.3" r="1" fill="#cfdcff" fill-opacity="0.4398827839137567"/>
<circle cx="1910.8" cy="778.4" r="0.8" fill="#cfdcff" fill-opacity="0.5924310916918267"/>
<circle cx="2737.7" cy="1514.0" r="0.7" fill="#fff4e0" fill-opacity="0.5235234694590654"/>
<circle cx="2845.6" cy="554.2" r="1.2" fill="#a8c0f0" fill-opacity="0.41963567879762875"/>
<circle cx="1186.6" cy="455.8" r="0.7" fill="#ffffff" fill-opacity="0.6293757958663603"/>
<circle cx="2501.2" cy="1697.1" r="0.7" fill="#cfdcff" fill-opacity="0.5623852148751445"/>
<circle cx="1389.0" cy="1238.6" r="1.2" fill="#a8c0f0" fill-opacity="0.3920272872222386"/>
<circle cx="2955.3" cy="110.6" r="1" fill="#f8d0a0" fill-opacity="0.40406112236181085"/>
<circle cx="1925.8" cy="773.1" r="1" fill="#ffe0b0" fill-opacity="0.5704778267357726"/>
<circle cx="1556.3" cy="1028.9" r="1.2" fill="#a8c0f0" fill-opacity="0.5547412553562916"/>
<circle cx="1383.6" cy="1208.3" r="1.2" fill="#a8c0f0" fill-opacity="0.3504687601013213"/>
<circle cx="2086.3" cy="572.1" r="1" fill="#a8c0f0" fill-opacity="0.4064999374368748"/>
<circle cx="2030.6" cy="1106.6" r="0.8" fill="#ffffff" fill-opacity="0.6672979134378244"/>
<circle cx="1883.6" cy="1024.8" r="1.2" fill="#fff4e0" fill-opacity="0.6160088555112951"/>
<circle cx="1181.5" cy="410.3" r="1" fill="#fff4e0" fill-opacity="0.5382366413348353"/>
<circle cx="2606.4" cy="1671.8" r="0.7" fill="#ffe0b0" fill-opacity="0.4215679400622345"/>
<circle cx="2617.7" cy="1538.5" r="0.7" fill="#cfdcff" fill-opacity="0.31922998291388"/>
<circle cx="1212.6" cy="288.7" r="1" fill="#a8c0f0" fill-opacity="0.6114458720025687"/>
<circle cx="1865.7" cy="900.5" r="0.7" fill="#ffe0b0" fill-opacity="0.42799671538714334"/>
<circle cx="3016.6" cy="1323.9" r="1" fill="#a8c0f0" fill-opacity="0.46525299235288464"/>
<circle cx="2535.8" cy="1435.4" r="0.8" fill="#ffffff" fill-opacity="0.5560809728408984"/>
<circle cx="1492.0" cy="1019.2" r="0.8" fill="#f8d0a0" fill-opacity="0.4168482049221085"/>
<circle cx="1427.0" cy="775.2" r="0.7" fill="#f8d0a0" fill-opacity="0.3403837852207091"/>
<circle cx="1984.7" cy="209.9" r="0.8" fill="#ffe0b0" fill-opacity="0.5731812368713101"/>
<circle cx="1268.5" cy="675.4" r="0.8" fill="#ffe0b0" fill-opacity="0.6253636028403827"/>
<circle cx="825.0" cy="1221.0" r="0.7" fill="#fff4e0" fill-opacity="0.30773520760547773"/>
<circle cx="2923.2" cy="616.7" r="1" fill="#ffffff" fill-opacity="0.5728318586881347"/>
<circle cx="1513.3" cy="182.0" r="1" fill="#cfdcff" fill-opacity="0.44393518374624585"/>
<circle cx="2074.0" cy="557.9" r="0.8" fill="#cfdcff" fill-opacity="0.6323639442057565"/>
<circle cx="917.3" cy="1190.2" r="1.2" fill="#ffe0b0" fill-opacity="0.27851030155659184"/>
<circle cx="1095.6" cy="1612.6" r="0.7" fill="#cfdcff" fill-opacity="0.42073138935094234"/>
<circle cx="1876.5" cy="977.1" r="0.7" fill="#ffffff" fill-opacity="0.5167494569239786"/>
<circle cx="1723.3" cy="916.9" r="1" fill="#cfdcff" fill-opacity="0.6977186017716012"/>
<circle cx="1030.5" cy="222.8" r="1" fill="#cfdcff" fill-opacity="0.3108765473984679"/>
<circle cx="2425.8" cy="125.6" r="0.8" fill="#a8c0f0" fill-opacity="0.34011016436483643"/>
<circle cx="1914.8" cy="1727.3" r="1" fill="#f8d0a0" fill-opacity="0.39856825393552175"/>
<circle cx="1541.7" cy="912.9" r="0.7" fill="#fff4e0" fill-opacity="0.6315500999593107"/>
<circle cx="1985.9" cy="136.0" r="1" fill="#ffffff" fill-opacity="0.6316691856011022"/>
<circle cx="1125.8" cy="903.1" r="0.8" fill="#a8c0f0" fill-opacity="0.40101497074407455"/>
<circle cx="2692.5" cy="1071.1" r="1" fill="#f8d0a0" fill-opacity="0.3130989268358243"/>
<circle cx="1588.8" cy="196.6" r="0.8" fill="#ffe0b0" fill-opacity="0.4004511560172787"/>
<circle cx="1858.1" cy="119.5" r="1.2" fill="#ffe0b0" fill-opacity="0.4840048303310158"/>
<circle cx="813.6" cy="779.7" r="1" fill="#f8d0a0" fill-opacity="0.4276521562035487"/>
<circle cx="2747.6" cy="1299.5" r="1" fill="#ffe0b0" fill-opacity="0.3618351134661498"/>
<circle cx="1524.1" cy="871.3" r="1.2" fill="#ffe0b0" fill-opacity="0.3872353154488153"/>
<circle cx="922.8" cy="471.7" r="1" fill="#cfdcff" fill-opacity="0.5453448256108475"/>
<circle cx="2321.9" cy="356.0" r="1" fill="#fff4e0" fill-opacity="0.45539375591069764"/>
<circle cx="2314.7" cy="1269.5" r="1" fill="#ffffff" fill-opacity="0.4898855360630078"/>
<circle cx="1593.6" cy="1096.5" r="1" fill="#ffffff" fill-opacity="0.3731006842021758"/>
<circle cx="2530.5" cy="618.6" r="0.8" fill="#f8d0a0" fill-opacity="0.5248268787158841"/>
<circle cx="1586.5" cy="1381.2" r="0.8" fill="#fff4e0" fill-opacity="0.27597237028971805"/>
<circle cx="1653.6" cy="1226.5" r="0.7" fill="#fff4e0" fill-opacity="0.6381836749313108"/>
<circle cx="778.1" cy="1151.3" r="0.8" fill="#ffffff" fill-opacity="0.6650793073667207"/>
<circle cx="1961.8" cy="1508.6" r="1" fill="#fff4e0" fill-opacity="0.5532333170935106"/>
<circle cx="2237.4" cy="624.5" r="0.8" fill="#f8d0a0" fill-opacity="0.627236326944305"/>
<circle cx="956.8" cy="1713.4" r="0.8" fill="#f8d0a0" fill-opacity="0.29538804076275554"/>
<circle cx="834.5" cy="1479.9" r="0.7" fill="#cfdcff" fill-opacity="0.35069619712603184"/>
<circle cx="2621.2" cy="1343.5" r="1" fill="#a8c0f0" fill-opacity="0.4410595757490143"/>
<circle cx="2705.0" cy="1723.9" r="0.8" fill="#ffffff" fill-opacity="0.3220648637135116"/>
<circle cx="1684.1" cy="1434.3" r="1.2" fill="#ffe0b0" fill-opacity="0.568123827891489"/>
<circle cx="2344.8" cy="650.1" r="1" fill="#ffe0b0" fill-opacity="0.4969288217171086"/>
<circle cx="1123.3" cy="1761.8" r="0.8" fill="#cfdcff" fill-opacity="0.6883782533170584"/>
<circle cx="1396.8" cy="381.7" r="1" fill="#fff4e0" fill-opacity="0.5446730028508144"/>
<circle cx="2283.9" cy="455.4" r="0.8" fill="#a8c0f0" fill-opacity="0.3327773034083569"/>
<circle cx="1410.3" cy="810.6" r="0.7" fill="#ffe0b0" fill-opacity="0.3049572545727521"/>
<circle cx="2838.4" cy="1850.2" r="1.2" fill="#f8d0a0" fill-opacity="0.282820459312509"/>
<circle cx="1789.6" cy="140.1" r="1" fill="#ffffff" fill-opacity="0.3402293888340471"/>
<circle cx="1281.6" cy="638.6" r="1.2" fill="#f8d0a0" fill-opacity="0.5903103652581221"/>
<circle cx="1091.2" cy="931.4" r="0.8" fill="#f8d0a0" fill-opacity="0.6660730744521234"/>
<circle cx="682.4" cy="1155.7" r="0.7" fill="#ffe0b0" fill-opacity="0.33746866639688944"/>
<circle cx="972.4" cy="633.4" r="0.8" fill="#ffe0b0" fill-opacity="0.40760343486316986"/>
<circle cx="1768.1" cy="685.1" r="1" fill="#fff4e0" fill-opacity="0.29934170174953917"/>
<circle cx="2617.5" cy="1523.1" r="1.2" fill="#cfdcff" fill-opacity="0.29305089552798647"/>
<circle cx="1938.8" cy="1486.4" r="1.2" fill="#cfdcff" fill-opacity="0.4576285829108536"/>
<circle cx="685.6" cy="1006.4" r="0.7" fill="#cfdcff" fill-opacity="0.5410649393754285"/>
<circle cx="923.4" cy="1119.3" r="1" fill="#ffffff" fill-opacity="0.41862071661226996"/>
<circle cx="2208.8" cy="395.5" r="0.8" fill="#a8c0f0" fill-opacity="0.6736954993793078"/>
<circle cx="1406.5" cy="1581.3" r="1" fill="#ffe0b0" fill-opacity="0.31706671280843346"/>
<circle cx="831.5" cy="1645.6" r="0.7" fill="#fff4e0" fill-opacity="0.47325797655963225"/>
<circle cx="1901.1" cy="314.5" r="1" fill="#fff4e0" fill-opacity="0.32381204370981703"/>
<circle cx="1899.8" cy="994.9" r="1" fill="#fff4e0" fill-opacity="0.37756770276779916"/>
<circle cx="1947.8" cy="1836.1" r="0.8" fill="#a8c0f0" fill-opacity="0.6421872697074529"/>
<circle cx="1818.3" cy="1665.8" r="0.7" fill="#ffffff" fill-opacity="0.6744906233560214"/>
<circle cx="1785.9" cy="1491.8" r="1.2" fill="#fff4e0" fill-opacity="0.5600315536161313"/>
<circle cx="1158.8" cy="1420.1" r="0.8" fill="#ffe0b0" fill-opacity="0.6991709091805967"/>
<circle cx="1630.1" cy="1200.2" r="0.7" fill="#ffe0b0" fill-opacity="0.5064153324866831"/>
<circle cx="896.2" cy="1269.5" r="0.8" fill="#fff4e0" fill-opacity="0.35960184833319714"/>
<circle cx="2479.4" cy="1005.6" r="0.7" fill="#fff4e0" fill-opacity="0.2828739570053672"/>
<circle cx="1420.3" cy="280.4" r="0.8" fill="#f8d0a0" fill-opacity="0.5977850970724785"/>
<circle cx="1026.8" cy="639.7" r="0.7" fill="#cfdcff" fill-opacity="0.5163383224187837"/>
<circle cx="1046.4" cy="664.0" r="1" fill="#cfdcff" fill-opacity="0.26450764976160046"/>
<circle cx="2512.4" cy="367.8" r="1.2" fill="#a8c0f0" fill-opacity="0.32521090818982956"/>
<circle cx="2534.3" cy="1455.3" r="0.8" fill="#fff4e0" fill-opacity="0.6662043414923502"/>
<circle cx="2264.2" cy="1347.6" r="0.7" fill="#ffffff" fill-opacity="0.6062150358879035"/>
<circle cx="1764.9" cy="978.3" r="1" fill="#ffffff" fill-opacity="0.5881575220940654"/>
<circle cx="2144.1" cy="456.9" r="0.7" fill="#ffe0b0" fill-opacity="0.6039776663117788"/>
<circle cx="827.6" cy="1363.1" r="1" fill="#f8d0a0" fill-opacity="0.32300228894878"/>
<circle cx="2941.1" cy="1284.9" r="1" fill="#fff4e0" fill-opacity="0.3666876351296384"/>
<circle cx="2282.7" cy="638.6" r="0.7" fill="#a8c0f0" fill-opacity="0.4597689582005551"/>
<circle cx="2512.2" cy="1297.8" r="0.8" fill="#cfdcff" fill-opacity="0.42362112903094445"/>
<circle cx="2152.2" cy="1748.0" r="1.2" fill="#ffe0b0" fill-opacity="0.5866110655100778"/>
<circle cx="2040.5" cy="1254.3" r="0.7" fill="#ffffff" fill-opacity="0.6858069896878292"/>
<circle cx="2509.7" cy="549.5" r="0.8" fill="#fff4e0" fill-opacity="0.33910610351288006"/>
<circle cx="1712.1" cy="522.7" r="1" fill="#f8d0a0" fill-opacity="0.658653506412834"/>
<circle cx="2262.5" cy="1350.8" r="1" fill="#a8c0f0" fill-opacity="0.6027287492727231"/>
<circle cx="2524.6" cy="1302.6" r="1" fill="#cfdcff" fill-opacity="0.43280843292662846"/>
<circle cx="814.8" cy="1249.5" r="1" fill="#a8c0f0" fill-opacity="0.5176897433166228"/>
<circle cx="2627.8" cy="1495.1" r="0.7" fill="#ffe0b0" fill-opacity="0.4700738468894615"/>
<circle cx="643.6" cy="302.3" r="1" fill="#cfdcff" fill-opacity="0.43486297705874377"/>
<circle cx="1328.7" cy="363.9" r="1.2" fill="#fff4e0" fill-opacity="0.28739469207205903"/>
<circle cx="1557.2" cy="923.5" r="0.7" fill="#ffe0b0" fill-opacity="0.40112044728986396"/>
<circle cx="3005.8" cy="436.4" r="1" fill="#cfdcff" fill-opacity="0.5474497429443883"/>
<circle cx="2557.3" cy="320.0" r="0.7" fill="#cfdcff" fill-opacity="0.6203212660061812"/>
<circle cx="1049.5" cy="583.5" r="0.8" fill="#ffe0b0" fill-opacity="0.32533725053735196"/>
<circle cx="1454.8" cy="1535.1" r="1" fill="#ffe0b0" fill-opacity="0.4748556412258894"/>
<circle cx="2917.0" cy="994.8" r="1.2" fill="#fff4e0" fill-opacity="0.635535003422067"/>
<circle cx="2947.2" cy="792.4" r="0.7" fill="#ffffff" fill-opacity="0.6340713599987775"/>
<circle cx="855.1" cy="538.8" r="1.2" fill="#a8c0f0" fill-opacity="0.36286545344787496"/>
<circle cx="1456.6" cy="285.4" r="1.2" fill="#a8c0f0" fill-opacity="0.6380136526295058"/>
<circle cx="1847.6" cy="767.5" r="1" fill="#a8c0f0" fill-opacity="0.4372124328028877"/>
<circle cx="1848.5" cy="687.8" r="1" fill="#ffe0b0" fill-opacity="0.41281966036111206"/>
<circle cx="2204.0" cy="1213.6" r="1" fill="#f8d0a0" fill-opacity="0.613904237780332"/>
<circle cx="748.4" cy="1253.2" r="1" fill="#ffe0b0" fill-opacity="0.5612120750493506"/>
<circle cx="647.5" cy="1638.9" r="0.7" fill="#f8d0a0" fill-opacity="0.4197281427791724"/>
<circle cx="1357.0" cy="1004.8" r="0.8" fill="#a8c0f0" fill-opacity="0.5231839227483996"/>
<circle cx="1714.5" cy="1766.5" r="1" fill="#fff4e0" fill-opacity="0.2531816127064749"/>
<circle cx="2870.5" cy="583.5" r="0.8" fill="#f8d0a0" fill-opacity="0.6631003998931108"/>
<circle cx="1833.3" cy="1853.0" r="0.8" fill="#a8c0f0" fill-opacity="0.5153071898123116"/>
<circle cx="2980.8" cy="1205.5" r="0.8" fill="#ffe0b0" fill-opacity="0.5977944206068622"/>
<circle cx="666.4" cy="1067.3" r="1" fill="#a8c0f0" fill-opacity="0.2879436411873001"/>
<circle cx="2903.0" cy="1226.7" r="1" fill="#a8c0f0" fill-opacity="0.41210839011432965"/>
<circle cx="2788.9" cy="675.7" r="1.2" fill="#cfdcff" fill-opacity="0.6216438067834515"/>
<circle cx="2524.7" cy="716.0" r="0.8" fill="#fff4e0" fill-opacity="0.48219686235001713"/>
<circle cx="2727.3" cy="392.4" r="1.2" fill="#fff4e0" fill-opacity="0.5566335386811744"/>
<circle cx="2800.4" cy="1135.6" r="1" fill="#ffe0b0" fill-opacity="0.682956582397867"/>
<circle cx="1056.9" cy="649.8" r="1" fill="#fff4e0" fill-opacity="0.5293220895856958"/>
<circle cx="2849.9" cy="813.6" r="1" fill="#ffe0b0" fill-opacity="0.4272869660990811"/>
<circle cx="1537.0" cy="1793.4" r="1" fill="#ffffff" fill-opacity="0.34178856511868877"/>
<circle cx="2803.2" cy="896.0" r="1" fill="#a8c0f0" fill-opacity="0.3219313062756573"/>
<circle cx="2763.7" cy="185.8" r="1" fill="#f8d0a0" fill-opacity="0.4615986432702241"/>
<circle cx="1956.2" cy="1281.2" r="0.7" fill="#ffe0b0" fill-opacity="0.4262388662489774"/>
<circle cx="2339.9" cy="800.4" r="1" fill="#a8c0f0" fill-opacity="0.3044932076102271"/>
<circle cx="1692.2" cy="129.5" r="1.2" fill="#a8c0f0" fill-opacity="0.5049134678208373"/>
<circle cx="1459.8" cy="1752.0" r="1" fill="#fff4e0" fill-opacity="0.6486504162210252"/>
<circle cx="2723.0" cy="277.5" r="1.2" fill="#a8c0f0" fill-opacity="0.6227417300323417"/>
<circle cx="2623.2" cy="1353.2" r="1" fill="#fff4e0" fill-opacity="0.5401475483878577"/>
<circle cx="2944.9" cy="1217.1" r="0.7" fill="#cfdcff" fill-opacity="0.42752399130707003"/>
<circle cx="2879.7" cy="1406.8" r="1" fill="#cfdcff" fill-opacity="0.42665648329939754"/>
<circle cx="2553.9" cy="720.3" r="0.8" fill="#a8c0f0" fill-opacity="0.6422320512275299"/>
<circle cx="1890.9" cy="1020.0" r="1" fill="#fff4e0" fill-opacity="0.34587386252304964"/>
<circle cx="2254.2" cy="1725.1" r="0.7" fill="#f8d0a0" fill-opacity="0.25139852340050434"/>
<circle cx="1992.7" cy="520.7" r="1" fill="#cfdcff" fill-opacity="0.3462716449661194"/>
<circle cx="2367.6" cy="1481.5" r="0.8" fill="#fff4e0" fill-opacity="0.3499815695151506"/>
<circle cx="2660.2" cy="526.3" r="0.7" fill="#ffe0b0" fill-opacity="0.654467007630037"/>
<circle cx="2402.1" cy="1544.1" r="1" fill="#ffe0b0" fill-opacity="0.30907546126361635"/>
<circle cx="2307.9" cy="1339.2" r="1.2" fill="#ffe0b0" fill-opacity="0.5704094304166012"/>
<circle cx="2471.1" cy="1166.3" r="1.2" fill="#ffe0b0" fill-opacity="0.52345577959632"/>
<circle cx="2791.4" cy="649.6" r="1" fill="#a8c0f0" fill-opacity="0.5060461568733385"/>
<circle cx="2753.8" cy="246.5" r="0.7" fill="#a8c0f0" fill-opacity="0.4827713085895865"/>
<circle cx="898.8" cy="1776.4" r="0.8" fill="#ffffff" fill-opacity="0.4559817353871359"/>
<circle cx="2452.8" cy="890.1" r="1.2" fill="#ffffff" fill-opacity="0.6897723194253864"/>
<circle cx="2032.4" cy="1150.2" r="0.7" fill="#ffffff" fill-opacity="0.4920382996821865"/>
<circle cx="1735.6" cy="954.6" r="1" fill="#a8c0f0" fill-opacity="0.6713223856169397"/>
<circle cx="2938.6" cy="1036.7" r="0.8" fill="#fff4e0" fill-opacity="0.5004706550915592"/>
<circle cx="2589.5" cy="601.4" r="1.2" fill="#f8d0a0" fill-opacity="0.5708937701860126"/>
<circle cx="1143.6" cy="411.5" r="1.2" fill="#ffe0b0" fill-opacity="0.44076039618614"/>
<circle cx="756.6" cy="1210.3" r="0.7" fill="#f8d0a0" fill-opacity="0.3005703835194015"/>
<circle cx="1548.5" cy="1777.5" r="1" fill="#fff4e0" fill-opacity="0.5500200848314483"/>
<circle cx="2737.9" cy="204.7" r="1" fill="#f8d0a0" fill-opacity="0.3982413425745193"/>
<circle cx="2990.7" cy="233.8" r="1" fill="#f8d0a0" fill-opacity="0.31018446008934036"/>
<circle cx="1702.6" cy="1302.3" r="1.2" fill="#cfdcff" fill-opacity="0.33583142722961234"/>
<circle cx="2094.0" cy="304.6" r="0.8" fill="#ffe0b0" fill-opacity="0.5918002757235882"/>
<circle cx="789.0" cy="1677.7" r="0.7" fill="#cfdcff" fill-opacity="0.5998437478316334"/>
<circle cx="2516.4" cy="1407.9" r="1" fill="#fff4e0" fill-opacity="0.5021203207969326"/>
<circle cx="2301.0" cy="1809.8" r="0.7" fill="#a8c0f0" fill-opacity="0.575139886706318"/>
<circle cx="2345.2" cy="218.7" r="0.8" fill="#cfdcff" fill-opacity="0.2558560965654124"/>
<circle cx="2693.8" cy="1371.0" r="1.2" fill="#ffe0b0" fill-opacity="0.5009890978032465"/>
<circle cx="2122.7" cy="1097.3" r="1" fill="#ffe0b0" fill-opacity="0.3875863961679272"/>
<circle cx="711.1" cy="415.2" r="1" fill="#cfdcff" fill-opacity="0.6545429677756363"/>
<circle cx="2550.9" cy="904.4" r="0.7" fill="#ffe0b0" fill-opacity="0.29801497076568584"/>
<circle cx="976.4" cy="1468.0" r="1" fill="#cfdcff" fill-opacity="0.6957569434287649"/>
<circle cx="2810.4" cy="1498.2" r="1" fill="#fff4e0" fill-opacity="0.6324859395547926"/>
<circle cx="1882.5" cy="548.2" r="1" fill="#fff4e0" fill-opacity="0.40921725230942085"/>
<circle cx="2192.3" cy="1747.8" r="0.8" fill="#a8c0f0" fill-opacity="0.37523997631215045"/>
<circle cx="2576.2" cy="1016.2" r="1" fill="#fff4e0" fill-opacity="0.6153411146504265"/>
<circle cx="2640.1" cy="342.9" r="0.7" fill="#ffffff" fill-opacity="0.34631293138524366"/>
<circle cx="2020.5" cy="771.3" r="0.7" fill="#ffffff" fill-opacity="0.4586703822103586"/>
<circle cx="708.7" cy="1663.0" r="1.2" fill="#ffffff" fill-opacity="0.6363330226057377"/>
<circle cx="1423.0" cy="1087.2" r="1" fill="#cfdcff" fill-opacity="0.5960195462238809"/>
<circle cx="2791.8" cy="121.8" r="0.8" fill="#ffe0b0" fill-opacity="0.42217488546869436"/>
<circle cx="855.7" cy="1142.5" r="0.8" fill="#fff4e0" fill-opacity="0.44801658992009796"/>
<circle cx="1988.4" cy="1718.0" r="1" fill="#ffffff" fill-opacity="0.5065721070469534"/>
<circle cx="2344.4" cy="1615.3" r="0.8" fill="#cfdcff" fill-opacity="0.5433562934607499"/>
<circle cx="2689.8" cy="1839.4" r="1" fill="#a8c0f0" fill-opacity="0.6462809943576995"/>
<circle cx="2070.3" cy="315.9" r="1" fill="#f8d0a0" fill-opacity="0.42176233551080344"/>
<circle cx="2297.4" cy="1507.4" r="0.8" fill="#ffffff" fill-opacity="0.42653695087683224"/>
<circle cx="2511.1" cy="1549.0" r="0.7" fill="#fff4e0" fill-opacity="0.2922087595507282"/>
<circle cx="2966.3" cy="1512.2" r="0.7" fill="#cfdcff" fill-opacity="0.2719063735074716"/>
<circle cx="1185.9" cy="1735.8" r="0.8" fill="#a8c0f0" fill-opacity="0.26990220523371994"/>
<circle cx="1950.0" cy="1119.4" r="1" fill="#ffe0b0" fill-opacity="0.2685954806881813"/>
<circle cx="1736.4" cy="946.0" r="0.7" fill="#a8c0f0" fill-opacity="0.2934588542887708"/>
<circle cx="950.7" cy="1033.9" r="1.2" fill="#f8d0a0" fill-opacity="0.3954728517503145"/>
<circle cx="1837.7" cy="1781.5" r="1" fill="#ffffff" fill-opacity="0.28246211136234145"/>
<circle cx="675.9" cy="1242.2" r="0.7" fill="#f8d0a0" fill-opacity="0.5027307106474783"/>
<circle cx="2087.0" cy="1493.1" r="1.2" fill="#ffffff" fill-opacity="0.5676688061982907"/>
<circle cx="2204.7" cy="1184.2" r="1" fill="#cfdcff" fill-opacity="0.5518166087823695"/>
<circle cx="1959.0" cy="473.5" r="0.8" fill="#f8d0a0" fill-opacity="0.6151979783682644"/>
<circle cx="1712.3" cy="322.5" r="0.8" fill="#a8c0f0" fill-opacity="0.44307153368359564"/>
<circle cx="871.2" cy="1815.8" r="1.2" fill="#f8d0a0" fill-opacity="0.40863755796062323"/>
<circle cx="831.6" cy="1385.3" r="0.7" fill="#ffffff" fill-opacity="0.415414338732506"/>
<circle cx="1336.6" cy="1441.7" r="0.8" fill="#cfdcff" fill-opacity="0.5228922520526292"/>
<circle cx="2972.1" cy="1452.8" r="0.7" fill="#ffffff" fill-opacity="0.28374793618617666"/>
<circle cx="879.1" cy="1319.4" r="1.2" fill="#fff4e0" fill-opacity="0.484056248690327"/>
<circle cx="1706.6" cy="821.1" r="1.2" fill="#f8d0a0" fill-opacity="0.5418597969775762"/>
<circle cx="2821.7" cy="1389.7" r="0.7" fill="#ffffff" fill-opacity="0.6267346898206096"/>
<circle cx="2338.3" cy="162.5" r="0.8" fill="#cfdcff" fill-opacity="0.610507395082431"/>
<circle cx="736.7" cy="1190.5" r="1" fill="#cfdcff" fill-opacity="0.3649581463480118"/>
<circle cx="928.6" cy="1485.9" r="1" fill="#ffffff" fill-opacity="0.3959865929337698"/>
<circle cx="833.2" cy="883.2" r="1" fill="#f8d0a0" fill-opacity="0.6265706650092557"/>
<circle cx="3010.1" cy="1424.7" r="1" fill="#fff4e0" fill-opacity="0.2559221177219385"/>
<circle cx="1905.6" cy="704.6" r="1.2" fill="#ffe0b0" fill-opacity="0.6644065191390414"/>
<circle cx="1399.5" cy="1455.7" r="0.8" fill="#ffe0b0" fill-opacity="0.6075695923394058"/>
<circle cx="1891.5" cy="292.3" r="1" fill="#cfdcff" fill-opacity="0.5321397267403383"/>
<circle cx="1492.4" cy="1048.2" r="1" fill="#fff4e0" fill-opacity="0.34517871170426373"/>
<circle cx="733.2" cy="1268.8" r="0.8" fill="#cfdcff" fill-opacity="0.6691279013544463"/>
<circle cx="1859.6" cy="1466.1" r="0.7" fill="#a8c0f0" fill-opacity="0.34556739962195604"/>
<circle cx="1299.5" cy="1693.6" r="0.7" fill="#a8c0f0" fill-opacity="0.3670853651622286"/>
<circle cx="2336.3" cy="1839.0" r="0.8" fill="#f8d0a0" fill-opacity="0.4470964217664397"/>
<circle cx="2266.2" cy="1316.2" r="1" fill="#cfdcff" fill-opacity="0.3618203796728052"/>
<circle cx="1226.3" cy="157.4" r="0.8" fill="#a8c0f0" fill-opacity="0.3667839927839267"/>
<circle cx="2937.6" cy="1233.5" r="1.2" fill="#fff4e0" fill-opacity="0.5452521538826351"/>
<circle cx="2050.8" cy="1323.7" r="1" fill="#ffffff" fill-opacity="0.278773563938731"/>
<circle cx="765.9" cy="134.4" r="1" fill="#ffffff" fill-opacity="0.31400445253241505"/>
<circle cx="877.1" cy="972.0" r="1.2" fill="#a8c0f0" fill-opacity="0.64500657895993"/>
<circle cx="2832.1" cy="895.7" r="0.7" fill="#ffe0b0" fill-opacity="0.38642415238657357"/>
<circle cx="1593.6" cy="1314.3" r="1" fill="#a8c0f0" fill-opacity="0.6451293263038986"/>
<circle cx="2688.4" cy="914.2" r="1" fill="#fff4e0" fill-opacity="0.26381376664781775"/>
<circle cx="2609.6" cy="504.5" r="0.8" fill="#ffe0b0" fill-opacity="0.551824009425901"/>
<circle cx="1275.9" cy="126.1" r="0.8" fill="#ffffff" fill-opacity="0.6571992769112328"/>
<circle cx="986.4" cy="1261.4" r="1.2" fill="#ffe0b0" fill-opacity="0.5475491279242297"/>
<circle cx="1041.1" cy="360.1" r="0.7" fill="#ffffff" fill-opacity="0.42235530215705164"/>
<circle cx="2182.4" cy="1104.7" r="0.8" fill="#ffffff" fill-opacity="0.27915958935877855"/>
<circle cx="639.9" cy="1599.3" r="0.8" fill="#ffe0b0" fill-opacity="0.41363498564050794"/>
<circle cx="2352.8" cy="350.9" r="1" fill="#ffe0b0" fill-opacity="0.41480355579259787"/>
<circle cx="1869.8" cy="303.9" r="0.8" fill="#fff4e0" fill-opacity="0.37837578648596115"/>
<circle cx="1525.5" cy="1445.8" r="0.8" fill="#a8c0f0" fill-opacity="0.33726819454863655"/>
<circle cx="1134.0" cy="780.5" r="1" fill="#fff4e0" fill-opacity="0.5386413730814468"/>
<circle cx="1745.7" cy="1629.2" r="0.7" fill="#ffffff" fill-opacity="0.5486360968637147"/>
<circle cx="2628.1" cy="519.5" r="0.7" fill="#cfdcff" fill-opacity="0.4472550136546978"/>
<circle cx="884.3" cy="913.0" r="1" fill="#ffffff" fill-opacity="0.4321119979247154"/>
<circle cx="1777.6" cy="1722.6" r="0.8" fill="#cfdcff" fill-opacity="0.4481196792969214"/>
<circle cx="890.3" cy="227.7" r="1" fill="#cfdcff" fill-opacity="0.4611253157823234"/>
<circle cx="2870.5" cy="1078.8" r="0.7" fill="#f8d0a0" fill-opacity="0.350082178546377"/>
<circle cx="2405.0" cy="1092.9" r="1" fill="#ffffff" fill-opacity="0.2769555767972927"/>
<circle cx="1649.1" cy="206.8" r="1.2" fill="#fff4e0" fill-opacity="0.47971769004388587"/>
<circle cx="1369.4" cy="286.4" r="1" fill="#ffe0b0" fill-opacity="0.46081528489174167"/>
<circle cx="2893.8" cy="1481.3" r="0.8" fill="#ffffff" fill-opacity="0.6130304538000859"/>
<circle cx="2131.0" cy="280.2" r="1" fill="#a8c0f0" fill-opacity="0.605082642380565"/>
<circle cx="768.9" cy="1338.7" r="1" fill="#cfdcff" fill-opacity="0.365794279657213"/>
<circle cx="1837.1" cy="1206.0" r="1.2" fill="#ffffff" fill-opacity="0.5396035470935452"/>
<circle cx="2266.3" cy="165.3" r="0.8" fill="#cfdcff" fill-opacity="0.5490031948105827"/>
<circle cx="941.1" cy="746.1" r="1" fill="#ffe0b0" fill-opacity="0.5831678604244329"/>
<circle cx="2678.7" cy="751.8" r="0.8" fill="#a8c0f0" fill-opacity="0.352100374974639"/>
<circle cx="2051.1" cy="1685.0" r="0.7" fill="#cfdcff" fill-opacity="0.3476355726461173"/>
<circle cx="690.9" cy="876.4" r="0.8" fill="#fff4e0" fill-opacity="0.38699966510398925"/>
<circle cx="1363.9" cy="457.5" r="0.7" fill="#cfdcff" fill-opacity="0.26126170274320265"/>
<circle cx="1003.7" cy="738.1" r="1" fill="#fff4e0" fill-opacity="0.2796207891007735"/>
<circle cx="1508.4" cy="1600.5" r="1" fill="#a8c0f0" fill-opacity="0.6963337026202818"/>
<circle cx="2107.4" cy="487.2" r="1" fill="#fff4e0" fill-opacity="0.3894500516341015"/>
<circle cx="2502.1" cy="582.7" r="1" fill="#ffffff" fill-opacity="0.4331406956902054"/>
<circle cx="1434.5" cy="1277.8" r="0.7" fill="#f8d0a0" fill-opacity="0.41827618030096414"/>
<circle cx="996.2" cy="1556.4" r="0.7" fill="#fff4e0" fill-opacity="0.5233921126669434"/>
<circle cx="1228.0" cy="902.9" r="1.2" fill="#f8d0a0" fill-opacity="0.5702800886627063"/>
<circle cx="937.2" cy="529.3" r="0.7" fill="#ffe0b0" fill-opacity="0.6821126076371353"/>
<circle cx="964.9" cy="348.6" r="1.2" fill="#fff4e0" fill-opacity="0.5116358212720473"/>
<circle cx="2749.4" cy="208.5" r="0.8" fill="#cfdcff" fill-opacity="0.32537569952086604"/>
<circle cx="2021.1" cy="899.8" r="1" fill="#ffe0b0" fill-opacity="0.6497685604287413"/>
<circle cx="2205.3" cy="1612.7" r="1" fill="#a8c0f0" fill-opacity="0.4334876089742732"/>
<circle cx="728.8" cy="1708.0" r="0.7" fill="#ffffff" fill-opacity="0.6567841252709747"/>
<circle cx="774.7" cy="1426.1" r="0.8" fill="#fff4e0" fill-opacity="0.439039033897251"/>
<circle cx="1885.1" cy="1592.7" r="1.2" fill="#f8d0a0" fill-opacity="0.3024683214785443"/>
<circle cx="1193.9" cy="1259.4" r="1.2" fill="#a8c0f0" fill-opacity="0.610478904964802"/>
<circle cx="2779.0" cy="1791.2" r="0.8" fill="#cfdcff" fill-opacity="0.2842097507155237"/>
<circle cx="2776.1" cy="1105.9" r="0.8" fill="#a8c0f0" fill-opacity="0.6804639035094218"/>
<circle cx="2161.2" cy="829.2" r="1.2" fill="#ffe0b0" fill-opacity="0.5548296207184189"/>
<circle cx="781.7" cy="1404.8" r="1.2" fill="#a8c0f0" fill-opacity="0.46225679886006144"/>
<circle cx="2230.5" cy="1506.7" r="0.7" fill="#cfdcff" fill-opacity="0.46390594208995795"/>
<circle cx="2244.6" cy="1348.5" r="0.8" fill="#cfdcff" fill-opacity="0.681319856985801"/>
<circle cx="2505.4" cy="516.1" r="1" fill="#ffffff" fill-opacity="0.6810573178301302"/>
<circle cx="1105.3" cy="824.1" r="0.8" fill="#a8c0f0" fill-opacity="0.35462339942800003"/>
<circle cx="2383.3" cy="737.7" r="1" fill="#ffe0b0" fill-opacity="0.30740377566927846"/>
<circle cx="1142.6" cy="484.7" r="1" fill="#ffffff" fill-opacity="0.26605167150086007"/>
<circle cx="933.1" cy="818.9" r="1" fill="#a8c0f0" fill-opacity="0.28500722468873496"/>
<circle cx="2013.3" cy="1756.3" r="1.2" fill="#f8d0a0" fill-opacity="0.4100564420617873"/>
<circle cx="2308.7" cy="873.3" r="0.8" fill="#cfdcff" fill-opacity="0.5619031496936531"/>
<circle cx="2241.0" cy="1474.3" r="1" fill="#ffe0b0" fill-opacity="0.30271407725748956"/>
<circle cx="2127.0" cy="619.7" r="1.2" fill="#a8c0f0" fill-opacity="0.34180955913338085"/>
<circle cx="1205.5" cy="1144.1" r="0.8" fill="#ffe0b0" fill-opacity="0.5947860526489246"/>
<circle cx="1332.0" cy="556.1" r="0.7" fill="#f8d0a0" fill-opacity="0.45471528420108565"/>
<circle cx="2215.4" cy="1449.3" r="0.7" fill="#fff4e0" fill-opacity="0.6536879767235527"/>
<circle cx="2045.1" cy="829.6" r="1.2" fill="#ffe0b0" fill-opacity="0.26307636262121054"/>
<circle cx="2536.1" cy="1572.2" r="0.7" fill="#a8c0f0" fill-opacity="0.3620142452550753"/>
<circle cx="1024.1" cy="414.1" r="0.8" fill="#ffffff" fill-opacity="0.2607738539681022"/>
<circle cx="803.6" cy="263.7" r="0.8" fill="#fff4e0" fill-opacity="0.4614417530664102"/>
<circle cx="781.5" cy="718.9" r="1" fill="#cfdcff" fill-opacity="0.5863848732075023"/>
<circle cx="2720.9" cy="691.1" r="0.7" fill="#ffe0b0" fill-opacity="0.3231068396531098"/>
<circle cx="825.2" cy="1199.8" r="1" fill="#fff4e0" fill-opacity="0.6062828789699768"/>
<circle cx="2367.6" cy="706.3" r="1" fill="#fff4e0" fill-opacity="0.3347770551020587"/>
<circle cx="2852.1" cy="1088.5" r="0.7" fill="#fff4e0" fill-opacity="0.6275207669413433"/>
<circle cx="1627.2" cy="624.9" r="0.7" fill="#fff4e0" fill-opacity="0.3901208077275623"/>
<circle cx="778.6" cy="934.8" r="0.7" fill="#f8d0a0" fill-opacity="0.3185124332911024"/>
<circle cx="2525.2" cy="899.4" r="1" fill="#fff4e0" fill-opacity="0.530101703047716"/>
<circle cx="2600.1" cy="933.9" r="1" fill="#fff4e0" fill-opacity="0.25591673915628516"/>
<circle cx="2863.3" cy="486.2" r="1" fill="#fff4e0" fill-opacity="0.5878788293625397"/>
<circle cx="1817.2" cy="1021.2" r="1" fill="#a8c0f0" fill-opacity="0.275686724587583"/>
<circle cx="1157.7" cy="150.1" r="1.2" fill="#ffe0b0" fill-opacity="0.34515887042810756"/>
<circle cx="2341.3" cy="903.0" r="0.8" fill="#fff4e0" fill-opacity="0.3420869376049315"/>
<circle cx="1357.0" cy="1267.1" r="1" fill="#fff4e0" fill-opacity="0.3208056779795077"/>
<circle cx="1151.7" cy="1457.3" r="1" fill="#cfdcff" fill-opacity="0.39195478063307065"/>
<circle cx="2349.3" cy="206.3" r="1.2" fill="#ffe0b0" fill-opacity="0.29011166231377283"/>
<circle cx="722.8" cy="1007.0" r="0.8" fill="#fff4e0" fill-opacity="0.6692496291044885"/>
<circle cx="2727.0" cy="916.1" r="0.8" fill="#ffe0b0" fill-opacity="0.303813198978129"/>
<circle cx="1830.5" cy="1020.2" r="1" fill="#a8c0f0" fill-opacity="0.5723450143963493"/>
<circle cx="1884.8" cy="1464.4" r="0.7" fill="#a8c0f0" fill-opacity="0.28152419910343773"/>
<circle cx="1540.6" cy="954.2" r="1" fill="#a8c0f0" fill-opacity="0.4811000347125992"/>
<circle cx="1692.1" cy="1598.8" r="1" fill="#a8c0f0" fill-opacity="0.41725149185017774"/>
<circle cx="1685.4" cy="1730.4" r="1" fill="#f8d0a0" fill-opacity="0.27297396881302444"/>
<circle cx="2465.3" cy="262.6" r="1" fill="#fff4e0" fill-opacity="0.26681979362809805"/>
<circle cx="2978.4" cy="1699.1" r="0.8" fill="#ffffff" fill-opacity="0.4596406911151615"/>
<circle cx="2102.8" cy="633.4" r="0.7" fill="#a8c0f0" fill-opacity="0.5968431107950185"/>
<circle cx="1662.4" cy="258.8" r="1" fill="#a8c0f0" fill-opacity="0.2923184679608264"/>
<circle cx="2935.7" cy="198.5" r="1" fill="#a8c0f0" fill-opacity="0.31076857848846984"/>
<circle cx="861.8" cy="232.5" r="0.8" fill="#f8d0a0" fill-opacity="0.5216496458269012"/>
<circle cx="1587.4" cy="527.9" r="1" fill="#cfdcff" fill-opacity="0.5685570743092487"/>
<circle cx="1481.1" cy="1666.7" r="1" fill="#f8d0a0" fill-opacity="0.3026415138785442"/>
<circle cx="1232.2" cy="1403.7" r="1" fill="#cfdcff" fill-opacity="0.3519126670835827"/>
<circle cx="1051.6" cy="1526.4" r="1" fill="#cfdcff" fill-opacity="0.5722170016977166"/>
<circle cx="2380.3" cy="335.6" r="0.8" fill="#cfdcff" fill-opacity="0.29815006695941065"/>
<circle cx="2572.4" cy="701.3" r="0.8" fill="#ffffff" fill-opacity="0.3648207730112216"/>
<circle cx="1739.5" cy="1840.5" r="0.8" fill="#f8d0a0" fill-opacity="0.3945573943931552"/>
<circle cx="1022.2" cy="1410.8" r="1" fill="#a8c0f0" fill-opacity="0.3343854896489021"/>
<circle cx="1616.6" cy="1545.3" r="0.8" fill="#f8d0a0" fill-opacity="0.4047128837904847"/>
<circle cx="2509.6" cy="553.6" r="0.7" fill="#ffffff" fill-opacity="0.6784090623178903"/>
<circle cx="1395.5" cy="1592.2" r="1" fill="#ffe0b0" fill-opacity="0.3857057829841388"/>
<circle cx="2099.1" cy="798.4" r="1" fill="#ffffff" fill-opacity="0.6742408499286645"/>
<circle cx="634.5" cy="1290.3" r="1.2" fill="#fff4e0" fill-opacity="0.6176322744325744"/>
<circle cx="2163.0" cy="200.3" r="0.8" fill="#fff4e0" fill-opacity="0.6158567304764266"/>
<circle cx="1216.8" cy="1255.6" r="1" fill="#cfdcff" fill-opacity="0.6278661067649707"/>
<circle cx="927.3" cy="1051.4" r="1" fill="#a8c0f0" fill-opacity="0.6192745210579229"/>
<circle cx="1439.6" cy="1584.1" r="1" fill="#fff4e0" fill-opacity="0.6357290515468479"/>
<circle cx="2914.3" cy="1635.3" r="1.2" fill="#a8c0f0" fill-opacity="0.6599854649722605"/>
<circle cx="2524.5" cy="1581.9" r="1" fill="#ffe0b0" fill-opacity="0.4615983184599046"/>
<circle cx="1721.5" cy="1418.1" r="0.8" fill="#a8c0f0" fill-opacity="0.40319757098261966"/>
<circle cx="1207.4" cy="284.5" r="1" fill="#ffffff" fill-opacity="0.6563683409873148"/>
<circle cx="665.9" cy="755.8" r="1.2" fill="#ffffff" fill-opacity="0.4740414279214867"/>
<circle cx="731.1" cy="1612.1" r="1" fill="#ffe0b0" fill-opacity="0.6110796631462256"/>
<circle cx="2912.8" cy="650.7" r="1.2" fill="#cfdcff" fill-opacity="0.3933363106463035"/>
<circle cx="1438.8" cy="1575.4" r="1" fill="#f8d0a0" fill-opacity="0.6615419275883414"/>
<circle cx="2055.7" cy="1853.1" r="1.2" fill="#ffffff" fill-opacity="0.4678113259431814"/>
<circle cx="1611.7" cy="1648.0" r="0.8" fill="#fff4e0" fill-opacity="0.34378936039703334"/>
<circle cx="1917.5" cy="1730.5" r="0.7" fill="#a8c0f0" fill-opacity="0.6614472270441498"/>
<circle cx="688.4" cy="1141.8" r="1" fill="#ffffff" fill-opacity="0.5728643056671743"/>
<circle cx="1642.9" cy="270.4" r="1.2" fill="#ffe0b0" fill-opacity="0.6191852955657138"/>
<circle cx="2513.1" cy="732.4" r="0.8" fill="#a8c0f0" fill-opacity="0.5217030082700838"/>
<circle cx="743.8" cy="750.0" r="1" fill="#fff4e0" fill-opacity="0.4212662628786669"/>
<circle cx="2321.8" cy="1734.2" r="0.8" fill="#ffe0b0" fill-opacity="0.38579370786422434"/>
<circle cx="1400.3" cy="1388.9" r="0.8" fill="#cfdcff" fill-opacity="0.4960906445121845"/>
<circle cx="1814.7" cy="1277.4" r="0.8" fill="#f8d0a0" fill-opacity="0.6804988598085772"/>
<circle cx="3023.9" cy="1089.8" r="0.8" fill="#fff4e0" fill-opacity="0.2578964632718782"/>
<circle cx="2175.2" cy="1645.4" r="0.7" fill="#f8d0a0" fill-opacity="0.412770534858389"/>
<circle cx="2840.0" cy="471.5" r="0.7" fill="#f8d0a0" fill-opacity="0.633023363012069"/>
<circle cx="2332.7" cy="1354.5" r="0.8" fill="#f8d0a0" fill-opacity="0.45808141320706836"/>
<circle cx="977.7" cy="482.0" r="0.8" fill="#a8c0f0" fill-opacity="0.44721931786486857"/>
<circle cx="677.6" cy="347.2" r="1" fill="#f8d0a0" fill-opacity="0.3742054660260773"/>
<circle cx="1621.1" cy="1006.1" r="1" fill="#ffffff" fill-opacity="0.29156078098874644"/>
<circle cx="617.7" cy="703.7" r="0.8" fill="#a8c0f0" fill-opacity="0.6022538535794172"/>
<circle cx="1907.3" cy="514.7" r="0.8" fill="#fff4e0" fill-opacity="0.5213146960638302"/>
<circle cx="2792.0" cy="462.1" r="1.2" fill="#a8c0f0" fill-opacity="0.5743562139526955"/>
<circle cx="2417.1" cy="1353.7" r="0.8" fill="#ffe0b0" fill-opacity="0.6262180721555548"/>
<circle cx="1631.1" cy="1002.0" r="1" fill="#ffffff" fill-opacity="0.4491814545628804"/>
<circle cx="812.9" cy="230.7" r="1.2" fill="#a8c0f0" fill-opacity="0.43676964054963247"/>
<circle cx="1378.2" cy="409.0" r="0.8" fill="#f8d0a0" fill-opacity="0.4012211787232377"/>
<circle cx="2459.1" cy="537.5" r="0.8" fill="#fff4e0" fill-opacity="0.3225521105615423"/>
<circle cx="1596.5" cy="1189.6" r="1" fill="#ffe0b0" fill-opacity="0.32286747050097264"/>
<circle cx="1132.8" cy="257.6" r="0.8" fill="#f8d0a0" fill-opacity="0.39210550603277383"/>
<circle cx="1825.0" cy="429.9" r="1" fill="#cfdcff" fill-opacity="0.5959147735524445"/>
<circle cx="2036.8" cy="935.9" r="1" fill="#cfdcff" fill-opacity="0.48332974492818054"/>
<circle cx="1745.8" cy="998.7" r="1.2" fill="#fff4e0" fill-opacity="0.35481149169042664"/>
<circle cx="1455.3" cy="779.3" r="0.7" fill="#cfdcff" fill-opacity="0.2951979254137078"/>
<circle cx="2380.4" cy="695.6" r="1" fill="#a8c0f0" fill-opacity="0.31854688383177676"/>
<circle cx="2695.7" cy="1109.9" r="0.7" fill="#ffffff" fill-opacity="0.6322745066359392"/>
<circle cx="2366.9" cy="728.6" r="1" fill="#cfdcff" fill-opacity="0.5288890435114517"/>
<circle cx="982.7" cy="1249.4" r="0.7" fill="#a8c0f0" fill-opacity="0.31539243222729485"/>
<circle cx="1489.4" cy="1597.6" r="1" fill="#f8d0a0" fill-opacity="0.5071424987521882"/>
<circle cx="1135.6" cy="1509.2" r="0.8" fill="#f8d0a0" fill-opacity="0.49835755587470654"/>
<circle cx="2179.2" cy="608.3" r="0.8" fill="#ffffff" fill-opacity="0.5273736122656307"/>
<circle cx="2555.9" cy="879.5" r="1" fill="#ffe0b0" fill-opacity="0.48466069625926717"/>
<circle cx="652.0" cy="1068.6" r="1" fill="#a8c0f0" fill-opacity="0.6720800330088386"/>
<circle cx="885.3" cy="554.0" r="1.2" fill="#f8d0a0" fill-opacity="0.5043850440806392"/>
<circle cx="2678.2" cy="138.3" r="1" fill="#ffffff" fill-opacity="0.4132867687544405"/>
<circle cx="2813.4" cy="1051.1" r="1" fill="#ffe0b0" fill-opacity="0.37957262523212815"/>
<circle cx="1802.0" cy="1750.9" r="1" fill="#ffffff" fill-opacity="0.2840750320771078"/>
<circle cx="1111.5" cy="1396.8" r="0.8" fill="#fff4e0" fill-opacity="0.39000596704031687"/>
<circle cx="1134.6" cy="872.2" r="0.7" fill="#a8c0f0" fill-opacity="0.6870404133503272"/>
<circle cx="2798.8" cy="296.2" r="0.8" fill="#f8d0a0" fill-opacity="0.497876691184022"/>
<circle cx="2960.0" cy="1460.0" r="0.8" fill="#cfdcff" fill-opacity="0.6268874990703162"/>
<circle cx="700.5" cy="977.5" r="1" fill="#cfdcff" fill-opacity="0.2919258861489968"/>
<circle cx="2716.5" cy="1426.2" r="1.2" fill="#fff4e0" fill-opacity="0.689556035665893"/>
<circle cx="696.2" cy="206.8" r="0.7" fill="#ffffff" fill-opacity="0.2598075419479264"/>
<circle cx="2318.1" cy="1210.4" r="0.7" fill="#cfdcff" fill-opacity="0.32291311992854477"/>
<circle cx="1041.8" cy="1174.0" r="0.8" fill="#ffe0b0" fill-opacity="0.30439992949779326"/>
<circle cx="2677.9" cy="677.6" r="1" fill="#ffe0b0" fill-opacity="0.45077028240777794"/>
<circle cx="1773.0" cy="151.8" r="0.8" fill="#fff4e0" fill-opacity="0.33095452265268993"/>
<circle cx="972.4" cy="722.6" r="0.7" fill="#cfdcff" fill-opacity="0.48859559319907786"/>
<circle cx="2251.3" cy="167.7" r="1" fill="#f8d0a0" fill-opacity="0.6059117954074019"/>
<circle cx="1997.2" cy="898.4" r="0.7" fill="#f8d0a0" fill-opacity="0.534998612863134"/>
<circle cx="2201.7" cy="1002.8" r="0.8" fill="#ffffff" fill-opacity="0.6616759397380958"/>
<circle cx="1961.2" cy="358.0" r="0.8" fill="#a8c0f0" fill-opacity="0.4224918195641107"/>
<circle cx="2275.4" cy="117.0" r="1.2" fill="#ffffff" fill-opacity="0.6300101824785577"/>
<circle cx="1479.9" cy="1342.3" r="0.8" fill="#f8d0a0" fill-opacity="0.4212357865853026"/>
<circle cx="2207.7" cy="692.4" r="1" fill="#f8d0a0" fill-opacity="0.6680232639656958"/>
<circle cx="2092.8" cy="662.0" r="1" fill="#fff4e0" fill-opacity="0.3710266619703184"/>
<circle cx="2791.2" cy="1493.8" r="1.2" fill="#ffffff" fill-opacity="0.6958521501045822"/>
<circle cx="2269.0" cy="665.3" r="1.2" fill="#ffe0b0" fill-opacity="0.6104779066510331"/>
<circle cx="1419.1" cy="1111.7" r="1.2" fill="#cfdcff" fill-opacity="0.6784249419257061"/>
<circle cx="2681.5" cy="1837.4" r="1" fill="#ffffff" fill-opacity="0.3170875306624207"/>
<circle cx="2445.7" cy="1111.2" r="1" fill="#f8d0a0" fill-opacity="0.4784202739020932"/>
<circle cx="2310.1" cy="116.6" r="1.2" fill="#fff4e0" fill-opacity="0.29630566104800576"/>
<circle cx="1273.5" cy="307.7" r="1" fill="#cfdcff" fill-opacity="0.6471665801619687"/>
<circle cx="2563.0" cy="251.2" r="1" fill="#a8c0f0" fill-opacity="0.4157588243030731"/>
<circle cx="690.4" cy="1567.4" r="1" fill="#fff4e0" fill-opacity="0.27926743547948085"/>
<circle cx="1228.7" cy="1476.0" r="0.8" fill="#f8d0a0" fill-opacity="0.6743863539797743"/>
<circle cx="3018.9" cy="855.0" r="1.2" fill="#a8c0f0" fill-opacity="0.6138197514516395"/>
<circle cx="2439.6" cy="906.5" r="1" fill="#cfdcff" fill-opacity="0.5575423738174181"/>
<circle cx="2291.6" cy="1784.1" r="0.7" fill="#a8c0f0" fill-opacity="0.6262795494139421"/>
<circle cx="2567.4" cy="625.0" r="1.2" fill="#f8d0a0" fill-opacity="0.5816262933103313"/>
<circle cx="2872.9" cy="723.6" r="1" fill="#fff4e0" fill-opacity="0.3668709003680827"/>
<circle cx="1829.4" cy="886.6" r="0.7" fill="#ffffff" fill-opacity="0.28680495309179665"/>
<circle cx="2518.4" cy="1653.3" r="0.8" fill="#cfdcff" fill-opacity="0.5203301218231247"/>
<circle cx="2724.1" cy="249.7" r="1" fill="#ffe0b0" fill-opacity="0.6279492439311223"/>
<circle cx="2077.2" cy="1781.4" r="0.7" fill="#a8c0f0" fill-opacity="0.3336701518092495"/>
<circle cx="1814.4" cy="696.9" r="0.8" fill="#fff4e0" fill-opacity="0.4632515518807002"/>
<circle cx="2505.8" cy="546.3" r="0.7" fill="#fff4e0" fill-opacity="0.32248313097578657"/>
<circle cx="3015.9" cy="636.8" r="0.7" fill="#a8c0f0" fill-opacity="0.4224085784690914"/>
<circle cx="2115.6" cy="1800.7" r="0.8" fill="#ffffff" fill-opacity="0.4373469081609424"/>
<circle cx="1740.6" cy="655.7" r="0.7" fill="#a8c0f0" fill-opacity="0.4225924328298486"/>
<circle cx="2183.2" cy="949.6" r="1.2" fill="#fff4e0" fill-opacity="0.6654543658082197"/>
<circle cx="992.4" cy="1304.4" r="1.2" fill="#ffe0b0" fill-opacity="0.4323146682251051"/>
<circle cx="1009.9" cy="348.6" r="1" fill="#cfdcff" fill-opacity="0.47192239962481763"/>
<circle cx="1252.2" cy="751.7" r="1.2" fill="#cfdcff" fill-opacity="0.5928456424798828"/>
<circle cx="2030.3" cy="392.4" r="0.7" fill="#ffe0b0" fill-opacity="0.42086723843142343"/>
<circle cx="875.6" cy="1804.2" r="1" fill="#f8d0a0" fill-opacity="0.3771756193419328"/>
<circle cx="1403.2" cy="1118.9" r="0.8" fill="#ffe0b0" fill-opacity="0.5967038662202557"/>
<circle cx="1373.2" cy="910.1" r="1" fill="#cfdcff" fill-opacity="0.5332661372889866"/>
<circle cx="1966.5" cy="1766.5" r="1" fill="#cfdcff" fill-opacity="0.6772299227736958"/>
<circle cx="2138.3" cy="1058.6" r="0.8" fill="#ffe0b0" fill-opacity="0.33475184904162875"/>
<circle cx="1064.8" cy="621.3" r="0.8" fill="#a8c0f0" fill-opacity="0.6877991729524204"/>
<circle cx="759.8" cy="126.2" r="1.2" fill="#ffffff" fill-opacity="0.34259576448584056"/>
<circle cx="1832.1" cy="315.5" r="0.8" fill="#a8c0f0" fill-opacity="0.29966271488298585"/>
<circle cx="1297.8" cy="285.0" r="0.8" fill="#a8c0f0" fill-opacity="0.5112787333945739"/>
<circle cx="2219.5" cy="575.0" r="1" fill="#ffffff" fill-opacity="0.6860792422758089"/>
<circle cx="1361.5" cy="1102.7" r="0.7" fill="#f8d0a0" fill-opacity="0.43708375474447203"/>
<circle cx="2788.1" cy="1139.5" r="0.8" fill="#ffffff" fill-opacity="0.5078908904733368"/>
<circle cx="2995.4" cy="1693.0" r="0.8" fill="#ffffff" fill-opacity="0.3447566976355943"/>
<circle cx="898.3" cy="1132.4" r="1.2" fill="#ffe0b0" fill-opacity="0.5536699077850761"/>
<circle cx="1533.6" cy="1844.2" r="0.7" fill="#ffffff" fill-opacity="0.5184525934881363"/>
<circle cx="2292.4" cy="851.0" r="1" fill="#f8d0a0" fill-opacity="0.31656476477173384"/>
<circle cx="1485.4" cy="1265.9" r="0.7" fill="#ffffff" fill-opacity="0.6971115674256916"/>
<circle cx="2112.4" cy="1251.2" r="0.8" fill="#ffe0b0" fill-opacity="0.5767301474844165"/>
<circle cx="1938.1" cy="736.5" r="1" fill="#ffe0b0" fill-opacity="0.4945855443458901"/>
<circle cx="997.4" cy="374.1" r="0.7" fill="#f8d0a0" fill-opacity="0.6085834295331659"/>
<circle cx="906.0" cy="649.6" r="1.2" fill="#f8d0a0" fill-opacity="0.29323083089447677"/>
<circle cx="1805.7" cy="918.9" r="0.7" fill="#a8c0f0" fill-opacity="0.2761420771947508"/>
<circle cx="1626.8" cy="522.8" r="0.7" fill="#fff4e0" fill-opacity="0.6529093743919445"/>
<circle cx="1468.9" cy="1461.3" r="1" fill="#f8d0a0" fill-opacity="0.4243855941534779"/>
<circle cx="1416.0" cy="1446.4" r="0.8" fill="#a8c0f0" fill-opacity="0.6966564850928286"/>
<circle cx="722.5" cy="1835.7" r="0.8" fill="#ffffff" fill-opacity="0.5218160570882685"/>
<circle cx="1041.8" cy="230.5" r="0.7" fill="#ffe0b0" fill-opacity="0.589519750624758"/>
<circle cx="1423.9" cy="246.8" r="1" fill="#ffffff" fill-opacity="0.48047451191053614"/>
<circle cx="2870.6" cy="536.2" r="0.8" fill="#fff4e0" fill-opacity="0.3874048988847304"/>
<circle cx="1388.8" cy="1699.5" r="1.2" fill="#cfdcff" fill-opacity="0.6677678948244723"/>
<circle cx="2024.7" cy="979.1" r="0.8" fill="#a8c0f0" fill-opacity="0.6055820854475669"/>
<circle cx="1293.5" cy="178.3" r="0.7" fill="#ffffff" fill-opacity="0.48441152858826225"/>
<circle cx="2414.4" cy="443.3" r="1" fill="#fff4e0" fill-opacity="0.35301576816527563"/>
<circle cx="1110.9" cy="561.7" r="1" fill="#ffffff" fill-opacity="0.358074150280435"/>
<circle cx="1734.3" cy="1335.4" r="1" fill="#ffffff" fill-opacity="0.3392729497222484"/>
<circle cx="816.5" cy="1310.6" r="1" fill="#ffe0b0" fill-opacity="0.3616755334272723"/>
<circle cx="2204.7" cy="686.2" r="0.7" fill="#cfdcff" fill-opacity="0.43746003292346086"/>
<circle cx="2647.9" cy="229.8" r="0.7" fill="#ffffff" fill-opacity="0.27558360542622323"/>
<circle cx="1068.4" cy="569.0" r="0.7" fill="#cfdcff" fill-opacity="0.47603529472799255"/>
<circle cx="1786.0" cy="448.1" r="1" fill="#f8d0a0" fill-opacity="0.6139476653303655"/>
<circle cx="1310.5" cy="1741.4" r="1" fill="#fff4e0" fill-opacity="0.3135843465492169"/>
<circle cx="1774.5" cy="331.1" r="0.7" fill="#a8c0f0" fill-opacity="0.333177512959865"/>
<circle cx="2987.7" cy="1366.7" r="0.7" fill="#ffffff" fill-opacity="0.6107933066406692"/>
<circle cx="1184.9" cy="495.3" r="1" fill="#ffe0b0" fill-opacity="0.32674633721235025"/>
<circle cx="2612.3" cy="819.8" r="1" fill="#fff4e0" fill-opacity="0.6901713851615887"/>
<circle cx="1663.8" cy="115.3" r="0.7" fill="#f8d0a0" fill-opacity="0.5767496641263329"/>
<circle cx="2696.6" cy="1222.0" r="0.8" fill="#a8c0f0" fill-opacity="0.6424247348107811"/>
<circle cx="2338.8" cy="310.4" r="1" fill="#ffffff" fill-opacity="0.5521746642846532"/>
<circle cx="612.8" cy="183.0" r="1" fill="#ffffff" fill-opacity="0.6435941244491572"/>
<circle cx="3015.2" cy="665.4" r="1.2" fill="#f8d0a0" fill-opacity="0.44889612150346647"/>
<circle cx="2912.9" cy="1481.3" r="1.2" fill="#f8d0a0" fill-opacity="0.3384422793240953"/>
<circle cx="1859.3" cy="953.2" r="1" fill="#fff4e0" fill-opacity="0.4181651522191615"/>
<circle cx="1839.4" cy="1136.9" r="0.8" fill="#f8d0a0" fill-opacity="0.37483770099868546"/>
<circle cx="1821.0" cy="989.8" r="1" fill="#cfdcff" fill-opacity="0.548870774127597"/>
<circle cx="1052.8" cy="1038.6" r="1" fill="#ffffff" fill-opacity="0.5965222994444606"/>
<circle cx="2306.9" cy="1474.2" r="1.2" fill="#cfdcff" fill-opacity="0.36203315047150125"/>
<circle cx="2844.0" cy="1001.9" r="1" fill="#f8d0a0" fill-opacity="0.38067856864543903"/>
<circle cx="1576.9" cy="1347.8" r="1" fill="#cfdcff" fill-opacity="0.39430524132401384"/>
<circle cx="2253.6" cy="1383.8" r="1" fill="#a8c0f0" fill-opacity="0.3878776550647317"/>
<circle cx="1473.9" cy="1428.2" r="0.8" fill="#fff4e0" fill-opacity="0.6924970191193854"/>
<circle cx="1649.9" cy="1393.9" r="1" fill="#a8c0f0" fill-opacity="0.4149020013367757"/>
<circle cx="644.6" cy="1067.6" r="1" fill="#ffe0b0" fill-opacity="0.43433317515673653"/>
<circle cx="1662.7" cy="1172.4" r="1" fill="#fff4e0" fill-opacity="0.40317956992694337"/>
<circle cx="1746.8" cy="1366.9" r="0.8" fill="#cfdcff" fill-opacity="0.2959428419632345"/>
<circle cx="1080.8" cy="1675.8" r="0.7" fill="#a8c0f0" fill-opacity="0.3090129833886052"/>
<circle cx="1424.1" cy="843.4" r="1" fill="#ffe0b0" fill-opacity="0.43955263696553903"/>
<circle cx="1364.0" cy="1811.9" r="0.8" fill="#a8c0f0" fill-opacity="0.3210091312117902"/>
<circle cx="1283.9" cy="1720.8" r="0.8" fill="#ffe0b0" fill-opacity="0.26651537294128735"/>
<circle cx="1022.8" cy="203.2" r="1" fill="#fff4e0" fill-opacity="0.31855213528671067"/>
<circle cx="2501.8" cy="999.1" r="0.7" fill="#ffe0b0" fill-opacity="0.4477890147248659"/>
<circle cx="1565.9" cy="1149.5" r="1" fill="#ffffff" fill-opacity="0.42637949455920665"/>
<circle cx="1053.8" cy="1476.1" r="1" fill="#ffffff" fill-opacity="0.5925614669507699"/>
<circle cx="1409.7" cy="1296.9" r="1.2" fill="#a8c0f0" fill-opacity="0.3347893282255879"/>
<circle cx="653.3" cy="1287.7" r="1.2" fill="#fff4e0" fill-opacity="0.38220715220456536"/>
<circle cx="1088.5" cy="1604.1" r="0.8" fill="#fff4e0" fill-opacity="0.4620804046369926"/>
<circle cx="2472.9" cy="1650.8" r="0.7" fill="#ffffff" fill-opacity="0.5072326130896847"/>
<circle cx="1852.8" cy="1595.5" r="0.7" fill="#f8d0a0" fill-opacity="0.45709858875761733"/>
<circle cx="1178.4" cy="879.0" r="1" fill="#ffe0b0" fill-opacity="0.25692520518628736"/>
<circle cx="1156.3" cy="689.2" r="1" fill="#fff4e0" fill-opacity="0.5442459056933344"/>
<circle cx="1626.2" cy="692.0" r="0.8" fill="#cfdcff" fill-opacity="0.5351556116125232"/>
<circle cx="1861.6" cy="1070.6" r="1" fill="#ffe0b0" fill-opacity="0.4612233623808374"/>
<circle cx="2331.9" cy="926.7" r="0.7" fill="#ffffff" fill-opacity="0.5485238464261788"/>
<circle cx="1721.9" cy="1156.1" r="0.8" fill="#f8d0a0" fill-opacity="0.6289730918502796"/>
<circle cx="1931.0" cy="785.9" r="0.7" fill="#ffe0b0" fill-opacity="0.5914391047411283"/>
<circle cx="2414.0" cy="1750.1" r="0.7" fill="#ffe0b0" fill-opacity="0.4578350487502903"/>
<circle cx="1118.3" cy="112.7" r="0.7" fill="#ffffff" fill-opacity="0.3327197228820483"/>
<circle cx="615.6" cy="826.3" r="1" fill="#ffe0b0" fill-opacity="0.6636025601319185"/>
<circle cx="1445.8" cy="753.0" r="0.8" fill="#ffffff" fill-opacity="0.47977044461330853"/>
<circle cx="1798.8" cy="758.9" r="1.2" fill="#fff4e0" fill-opacity="0.349215031749919"/>
<circle cx="1541.8" cy="1591.1" r="1.2" fill="#f8d0a0" fill-opacity="0.501667647089874"/>
<circle cx="1267.0" cy="1440.0" r="1.2" fill="#a8c0f0" fill-opacity="0.41622288919621164"/>
<circle cx="880.8" cy="1256.6" r="1.2" fill="#a8c0f0" fill-opacity="0.3974041094027476"/>
<circle cx="1398.8" cy="1586.1" r="1" fill="#fff4e0" fill-opacity="0.4378346280023396"/>
<circle cx="2919.7" cy="739.8" r="1" fill="#ffffff" fill-opacity="0.3228922687419187"/>
<circle cx="2207.2" cy="1271.1" r="1" fill="#ffe0b0" fill-opacity="0.4326533084084524"/>
<circle cx="1167.2" cy="1489.9" r="1" fill="#fff4e0" fill-opacity="0.624360122997929"/>
<circle cx="1511.4" cy="1391.2" r="0.7" fill="#cfdcff" fill-opacity="0.34886988177405054"/>
<circle cx="2928.6" cy="1301.7" r="0.7" fill="#cfdcff" fill-opacity="0.4955993902873569"/>
<circle cx="2542.1" cy="1055.7" r="0.7" fill="#a8c0f0" fill-opacity="0.32852331744305674"/>
<circle cx="1054.7" cy="1527.1" r="1.2" fill="#fff4e0" fill-opacity="0.565961716144325"/>
<circle cx="2468.4" cy="1260.3" r="1" fill="#ffe0b0" fill-opacity="0.4977923813491448"/>
<circle cx="928.3" cy="953.9" r="1.2" fill="#ffffff" fill-opacity="0.3106394728509988"/>
<circle cx="1351.0" cy="1295.2" r="1.2" fill="#f8d0a0" fill-opacity="0.6043755263162225"/>
<circle cx="2879.5" cy="1565.9" r="1" fill="#a8c0f0" fill-opacity="0.6235677629253957"/>
<circle cx="1975.4" cy="1425.5" r="1" fill="#cfdcff" fill-opacity="0.45181369630563556"/>
<circle cx="2950.9" cy="1546.1" r="0.7" fill="#ffffff" fill-opacity="0.5253357312165541"/>
<circle cx="684.3" cy="1741.5" r="1.2" fill="#a8c0f0" fill-opacity="0.316420494917097"/>
<circle cx="2555.5" cy="231.7" r="1.2" fill="#ffffff" fill-opacity="0.2570896202949199"/>
<circle cx="2758.4" cy="878.2" r="1" fill="#f8d0a0" fill-opacity="0.35739505840907726"/>
<circle cx="1045.6" cy="657.9" r="1" fill="#f8d0a0" fill-opacity="0.2617157050167264"/>
<circle cx="1418.5" cy="224.5" r="0.7" fill="#ffffff" fill-opacity="0.5308676434590418"/>
<circle cx="896.4" cy="388.1" r="1" fill="#a8c0f0" fill-opacity="0.37543538313595404"/>
<circle cx="2830.7" cy="1691.6" r="0.8" fill="#cfdcff" fill-opacity="0.5213111509242061"/>
<circle cx="2953.2" cy="1075.7" r="0.7" fill="#ffffff" fill-opacity="0.579473805642432"/>
<circle cx="1154.9" cy="268.9" r="1.2" fill="#cfdcff" fill-opacity="0.5255521317593782"/>
<circle cx="2690.0" cy="359.8" r="1.2" fill="#cfdcff" fill-opacity="0.41951210203565586"/>
<circle cx="2555.4" cy="1559.0" r="0.8" fill="#ffe0b0" fill-opacity="0.3718381165354232"/>
<circle cx="2911.8" cy="1001.3" r="0.8" fill="#a8c0f0" fill-opacity="0.3875269158053537"/>
<circle cx="714.4" cy="275.0" r="1" fill="#ffe0b0" fill-opacity="0.4576739171850046"/>
<circle cx="1446.0" cy="956.3" r="1.2" fill="#a8c0f0" fill-opacity="0.6085997946125928"/>
<circle cx="2317.1" cy="810.3" r="0.8" fill="#ffe0b0" fill-opacity="0.47330824941014016"/>
<circle cx="2811.7" cy="1740.5" r="0.8" fill="#f8d0a0" fill-opacity="0.5939686638812711"/>
<circle cx="1632.7" cy="431.6" r="1.2" fill="#fff4e0" fill-opacity="0.604142402680556"/>
<circle cx="1082.8" cy="1371.9" r="1" fill="#f8d0a0" fill-opacity="0.6156005412740169"/>
<circle cx="832.3" cy="591.4" r="0.7" fill="#cfdcff" fill-opacity="0.37685511350330797"/>
<circle cx="2039.7" cy="1580.4" r="1" fill="#cfdcff" fill-opacity="0.6133674148533901"/>
<circle cx="2715.0" cy="638.0" r="0.8" fill="#f8d0a0" fill-opacity="0.4986359631320804"/>
<circle cx="1967.2" cy="1677.5" r="0.8" fill="#ffe0b0" fill-opacity="0.5525026469547019"/>
<circle cx="835.4" cy="1806.0" r="1" fill="#cfdcff" fill-opacity="0.44650535080951176"/>
<circle cx="2233.5" cy="1774.5" r="0.8" fill="#ffffff" fill-opacity="0.32025958475004784"/>
<circle cx="1021.0" cy="1676.7" r="1" fill="#fff4e0" fill-opacity="0.5399761005487369"/>
<circle cx="1654.3" cy="594.2" r="0.7" fill="#fff4e0" fill-opacity="0.5748620868464271"/>
<circle cx="2638.7" cy="390.9" r="1.2" fill="#f8d0a0" fill-opacity="0.3369063898760975"/>
<circle cx="2166.8" cy="958.8" r="0.7" fill="#ffffff" fill-opacity="0.6911391915267563"/>
<circle cx="2712.7" cy="885.6" r="1.2" fill="#ffffff" fill-opacity="0.49205713418055114"/>
<circle cx="1130.6" cy="1474.3" r="1" fill="#a8c0f0" fill-opacity="0.5771175933444579"/>
<circle cx="1156.4" cy="1110.3" r="1" fill="#ffe0b0" fill-opacity="0.29693699640015514"/>
<circle cx="2556.7" cy="1823.6" r="0.8" fill="#a8c0f0" fill-opacity="0.38815408251452443"/>
<circle cx="1215.0" cy="1529.2" r="0.7" fill="#ffffff" fill-opacity="0.6275135379854245"/>
<circle cx="2710.4" cy="197.3" r="0.8" fill="#fff4e0" fill-opacity="0.28782896149937004"/>
<circle cx="1215.5" cy="259.8" r="1" fill="#fff4e0" fill-opacity="0.36266564987660754"/>
<circle cx="1330.3" cy="915.7" r="1" fill="#fff4e0" fill-opacity="0.604820250311904"/>
<circle cx="2353.0" cy="308.4" r="0.8" fill="#ffffff" fill-opacity="0.3014995943619193"/>
<circle cx="2418.2" cy="899.5" r="1" fill="#ffffff" fill-opacity="0.6981091205139813"/>
<circle cx="1109.8" cy="173.1" r="1" fill="#cfdcff" fill-opacity="0.54311982407411"/>
<circle cx="1895.1" cy="500.2" r="1" fill="#ffffff" fill-opacity="0.5284252716344132"/>
<circle cx="2559.4" cy="1416.6" r="1" fill="#f8d0a0" fill-opacity="0.595867115921408"/>
<circle cx="2614.6" cy="941.0" r="0.8" fill="#cfdcff" fill-opacity="0.6575501997105011"/>
<circle cx="2590.4" cy="478.0" r="0.7" fill="#f8d0a0" fill-opacity="0.347068639528814"/>
<circle cx="2909.8" cy="1686.4" r="1.2" fill="#f8d0a0" fill-opacity="0.6391321484243873"/>
<circle cx="797.2" cy="753.9" r="1" fill="#ffffff" fill-opacity="0.25597787027429925"/>
<circle cx="2121.4" cy="1213.8" r="0.8" fill="#cfdcff" fill-opacity="0.6180287760416914"/>
<circle cx="2720.9" cy="867.7" r="0.8" fill="#fff4e0" fill-opacity="0.539176230705438"/>
<circle cx="2193.3" cy="1258.8" r="0.7" fill="#cfdcff" fill-opacity="0.44873083624301147"/>
<circle cx="1390.5" cy="1152.9" r="1" fill="#ffffff" fill-opacity="0.3076765062052053"/>
<circle cx="2226.2" cy="610.6" r="1" fill="#ffe0b0" fill-opacity="0.6079762402596245"/>
<circle cx="2270.0" cy="392.8" r="0.7" fill="#a8c0f0" fill-opacity="0.5390753819097711"/>
<circle cx="3013.3" cy="631.7" r="1" fill="#a8c0f0" fill-opacity="0.3308577241545617"/>
<circle cx="1559.8" cy="985.3" r="1" fill="#ffffff" fill-opacity="0.3030062756333407"/>
<circle cx="1726.8" cy="960.5" r="1" fill="#cfdcff" fill-opacity="0.29802388769309507"/>
<circle cx="2843.8" cy="773.4" r="0.8" fill="#ffe0b0" fill-opacity="0.4661018810481873"/>
<circle cx="2327.1" cy="771.0" r="1.2" fill="#f8d0a0" fill-opacity="0.3754512401322905"/>
<circle cx="869.1" cy="182.8" r="1" fill="#ffe0b0" fill-opacity="0.6432722245599392"/>
<circle cx="1095.3" cy="879.0" r="1.2" fill="#ffe0b0" fill-opacity="0.4126286563924786"/>
<circle cx="2064.0" cy="408.4" r="0.8" fill="#ffe0b0" fill-opacity="0.653820665010078"/>
<circle cx="1180.1" cy="1089.4" r="1" fill="#ffffff" fill-opacity="0.26523652841337597"/>
<circle cx="1679.3" cy="1709.5" r="1" fill="#f8d0a0" fill-opacity="0.447928439972206"/>
<circle cx="2450.1" cy="287.9" r="0.7" fill="#cfdcff" fill-opacity="0.38569382412549913"/>
<circle cx="2336.4" cy="142.8" r="1" fill="#ffe0b0" fill-opacity="0.3069894105889355"/>
<circle cx="1749.5" cy="136.6" r="0.8" fill="#f8d0a0" fill-opacity="0.3501035227420969"/>
<circle cx="801.2" cy="267.3" r="0.8" fill="#f8d0a0" fill-opacity="0.4829470502712976"/>
<circle cx="935.4" cy="1544.3" r="1" fill="#cfdcff" fill-opacity="0.3633448441601417"/>
<circle cx="1187.2" cy="1576.6" r="0.7" fill="#f8d0a0" fill-opacity="0.5839872113570796"/>
<circle cx="840.2" cy="1760.1" r="1" fill="#ffe0b0" fill-opacity="0.5189385837039393"/>
<circle cx="2693.1" cy="284.6" r="0.7" fill="#f8d0a0" fill-opacity="0.562102344607433"/>
<circle cx="2026.0" cy="1369.3" r="1" fill="#a8c0f0" fill-opacity="0.47359991133385115"/>
<circle cx="1055.7" cy="873.0" r="1" fill="#cfdcff" fill-opacity="0.5135551865875982"/>
<circle cx="1327.8" cy="589.4" r="1.2" fill="#ffffff" fill-opacity="0.29235535197355184"/>
<circle cx="1853.6" cy="704.1" r="1" fill="#ffffff" fill-opacity="0.39247479050570433"/>
<circle cx="2618.7" cy="618.1" r="1" fill="#ffe0b0" fill-opacity="0.3613454009257899"/>
<circle cx="2815.3" cy="1005.8" r="1.2" fill="#f8d0a0" fill-opacity="0.6516486034427875"/>
<circle cx="3000.3" cy="1757.8" r="1" fill="#f8d0a0" fill-opacity="0.6107170678064164"/>
<circle cx="930.5" cy="1066.2" r="0.8" fill="#f8d0a0" fill-opacity="0.2568525279744484"/>
<circle cx="1226.8" cy="1338.8" r="1" fill="#ffe0b0" fill-opacity="0.5604311822153205"/>
<circle cx="2853.5" cy="806.8" r="0.8" fill="#a8c0f0" fill-opacity="0.5427996493368636"/>
<circle cx="1330.9" cy="1509.3" r="0.8" fill="#cfdcff" fill-opacity="0.5389030720461456"/>
<circle cx="1883.4" cy="842.5" r="0.8" fill="#cfdcff" fill-opacity="0.4259668544554727"/>
<circle cx="1632.1" cy="763.8" r="1.2" fill="#a8c0f0" fill-opacity="0.6892731509551151"/>
<circle cx="1295.6" cy="1259.9" r="1" fill="#f8d0a0" fill-opacity="0.4280740632456874"/>
<circle cx="1549.1" cy="355.2" r="1.2" fill="#ffe0b0" fill-opacity="0.696653429793479"/>
<circle cx="1730.7" cy="1575.8" r="0.8" fill="#a8c0f0" fill-opacity="0.5842255091983537"/>
<circle cx="2334.2" cy="1749.6" r="1" fill="#ffe0b0" fill-opacity="0.651449893819894"/>
<circle cx="1715.3" cy="690.1" r="1.2" fill="#ffe0b0" fill-opacity="0.6927469909898851"/>
<circle cx="2758.5" cy="430.5" r="1.2" fill="#a8c0f0" fill-opacity="0.3295499244826659"/>
<circle cx="818.4" cy="1668.5" r="1.2" fill="#fff4e0" fill-opacity="0.46528525465319986"/>
<circle cx="2696.9" cy="1026.0" r="0.8" fill="#a8c0f0" fill-opacity="0.49790375233174206"/>
<circle cx="2973.8" cy="1528.9" r="1" fill="#ffe0b0" fill-opacity="0.28696290977578365"/>
<circle cx="1102.4" cy="1715.4" r="1" fill="#fff4e0" fill-opacity="0.42095661133418094"/>
<circle cx="634.6" cy="1614.9" r="1" fill="#ffffff" fill-opacity="0.29226583378139737"/>
<circle cx="2891.9" cy="813.7" r="0.8" fill="#ffffff" fill-opacity="0.5170976999759231"/>
<circle cx="1722.1" cy="842.3" r="1.2" fill="#ffffff" fill-opacity="0.36077870727913985"/>
<circle cx="1297.9" cy="1804.7" r="1" fill="#f8d0a0" fill-opacity="0.6952520945246162"/>
<circle cx="2749.8" cy="326.8" r="1.2" fill="#ffffff" fill-opacity="0.5329013177749293"/>
<circle cx="2023.7" cy="1654.9" r="1" fill="#f8d0a0" fill-opacity="0.31591174875039885"/>
<circle cx="1568.6" cy="1673.6" r="1" fill="#ffe0b0" fill-opacity="0.40557443745154564"/>
<circle cx="993.0" cy="266.3" r="1.2" fill="#a8c0f0" fill-opacity="0.5327047005380279"/>
<circle cx="2054.0" cy="1720.5" r="1" fill="#f8d0a0" fill-opacity="0.5573003157731516"/>
<circle cx="718.7" cy="984.6" r="1.2" fill="#ffffff" fill-opacity="0.26716575659795516"/>
<circle cx="1219.2" cy="1408.9" r="1" fill="#a8c0f0" fill-opacity="0.37334177696551635"/>
<circle cx="1644.7" cy="1024.7" r="1" fill="#cfdcff" fill-opacity="0.46019185179352073"/>
<circle cx="1975.2" cy="1717.1" r="1.2" fill="#fff4e0" fill-opacity="0.6140367269591365"/>
<circle cx="1204.7" cy="1304.1" r="0.8" fill="#fff4e0" fill-opacity="0.3110837604410227"/>
<circle cx="1797.1" cy="693.4" r="1" fill="#a8c0f0" fill-opacity="0.45053100673049945"/>
<circle cx="2523.3" cy="1213.2" r="0.8" fill="#ffffff" fill-opacity="0.3285192698293189"/>
<circle cx="787.9" cy="900.1" r="0.7" fill="#cfdcff" fill-opacity="0.5844671035962303"/>
<circle cx="1824.1" cy="259.6" r="0.8" fill="#fff4e0" fill-opacity="0.6008966317216557"/>
<circle cx="2022.8" cy="524.7" r="1" fill="#a8c0f0" fill-opacity="0.47116715488645255"/>
<circle cx="1560.1" cy="1237.5" r="1.2" fill="#ffffff" fill-opacity="0.39535560545908965"/>
<circle cx="2072.5" cy="1850.9" r="0.8" fill="#fff4e0" fill-opacity="0.401045113757421"/>
<circle cx="633.1" cy="272.9" r="0.7" fill="#cfdcff" fill-opacity="0.6364117002221512"/>
<circle cx="1789.5" cy="970.8" r="1" fill="#ffffff" fill-opacity="0.5136414231384709"/>
<circle cx="2008.6" cy="130.9" r="1" fill="#a8c0f0" fill-opacity="0.36774451460104274"/>
<circle cx="2106.1" cy="223.5" r="1.2" fill="#f8d0a0" fill-opacity="0.41900563833602794"/>
<circle cx="1794.6" cy="815.9" r="0.7" fill="#cfdcff" fill-opacity="0.5791745621302058"/>
<circle cx="2540.9" cy="1154.6" r="0.7" fill="#a8c0f0" fill-opacity="0.5196158328007092"/>
<circle cx="2711.8" cy="1833.6" r="1" fill="#ffffff" fill-opacity="0.5225408166298388"/>
<circle cx="1623.5" cy="1151.2" r="0.7" fill="#cfdcff" fill-opacity="0.6528087716839135"/>
<circle cx="1203.0" cy="1117.5" r="1" fill="#ffffff" fill-opacity="0.38318554671773486"/>
<circle cx="2446.2" cy="1186.7" r="1" fill="#ffe0b0" fill-opacity="0.49436105382206974"/>
<circle cx="2850.6" cy="1099.6" r="1.2" fill="#a8c0f0" fill-opacity="0.26310985120910296"/>
<circle cx="1717.1" cy="1074.4" r="1.2" fill="#fff4e0" fill-opacity="0.5304838193964284"/>
<circle cx="1760.8" cy="1217.7" r="1.2" fill="#ffffff" fill-opacity="0.5672276573649235"/>
<circle cx="2895.6" cy="133.3" r="1" fill="#a8c0f0" fill-opacity="0.6443619114573178"/>
<circle cx="748.4" cy="1490.4" r="0.7" fill="#a8c0f0" fill-opacity="0.32412534326422127"/>
<circle cx="1239.3" cy="1389.8" r="0.8" fill="#a8c0f0" fill-opacity="0.5671436218403092"/>
<circle cx="1883.7" cy="1167.6" r="1" fill="#f8d0a0" fill-opacity="0.514019003613439"/>
<circle cx="2913.8" cy="1471.0" r="0.7" fill="#fff4e0" fill-opacity="0.44770525606134903"/>
<circle cx="2748.9" cy="1772.7" r="0.8" fill="#cfdcff" fill-opacity="0.32873960122385326"/>
<circle cx="1955.6" cy="1462.1" r="1" fill="#ffffff" fill-opacity="0.48754354582596826"/>
<circle cx="2530.5" cy="200.6" r="0.7" fill="#fff4e0" fill-opacity="0.6272471452382302"/>
<circle cx="606.3" cy="1569.3" r="0.7" fill="#ffe0b0" fill-opacity="0.3982809065431235"/>
<circle cx="981.0" cy="342.9" r="1" fill="#f8d0a0" fill-opacity="0.5653395255520318"/>
<circle cx="2008.6" cy="321.9" r="1" fill="#f8d0a0" fill-opacity="0.5879084707381148"/>
<circle cx="1783.0" cy="1572.2" r="0.7" fill="#fff4e0" fill-opacity="0.6492857539862956"/>
<circle cx="976.3" cy="646.0" r="0.7" fill="#ffffff" fill-opacity="0.6403019529633673"/>
<circle cx="2603.0" cy="279.6" r="0.8" fill="#cfdcff" fill-opacity="0.535180336495849"/>
<circle cx="2618.7" cy="1830.4" r="1" fill="#fff4e0" fill-opacity="0.664438425252686"/>
<circle cx="1362.8" cy="1303.8" r="0.8" fill="#a8c0f0" fill-opacity="0.505093058955711"/>
<circle cx="1271.0" cy="548.9" r="1.2" fill="#fff4e0" fill-opacity="0.3109033497169157"/>
<circle cx="2684.1" cy="1663.3" r="0.8" fill="#a8c0f0" fill-opacity="0.563754973628773"/>
<circle cx="2233.1" cy="322.0" r="1" fill="#ffffff" fill-opacity="0.3878511577499426"/>
<circle cx="841.6" cy="601.6" r="1" fill="#f8d0a0" fill-opacity="0.321822011837581"/>
<circle cx="861.8" cy="719.1" r="0.8" fill="#fff4e0" fill-opacity="0.34331699224588297"/>
<circle cx="2861.2" cy="120.7" r="1" fill="#ffffff" fill-opacity="0.30656563647898066"/>
<circle cx="1702.0" cy="201.1" r="1" fill="#a8c0f0" fill-opacity="0.45231453703731195"/>
<circle cx="679.2" cy="704.5" r="0.8" fill="#f8d0a0" fill-opacity="0.6049083392771486"/>
<circle cx="2332.5" cy="1480.1" r="1.2" fill="#ffe0b0" fill-opacity="0.5647271598337363"/>
<circle cx="911.9" cy="782.1" r="1" fill="#cfdcff" fill-opacity="0.37698698067209957"/>
<circle cx="2392.8" cy="483.3" r="1" fill="#cfdcff" fill-opacity="0.3770850452365554"/>
<circle cx="2694.9" cy="1225.1" r="1" fill="#ffe0b0" fill-opacity="0.42093151643967575"/>
<circle cx="2834.3" cy="1751.1" r="1" fill="#ffffff" fill-opacity="0.5050733312949919"/>
<circle cx="2691.3" cy="557.2" r="1" fill="#cfdcff" fill-opacity="0.29640300798597957"/>
<circle cx="1818.8" cy="1452.3" r="0.8" fill="#f8d0a0" fill-opacity="0.44459916975995906"/>
<circle cx="3001.4" cy="950.1" r="1" fill="#ffe0b0" fill-opacity="0.41924654609403733"/>
<circle cx="902.9" cy="1221.7" r="0.7" fill="#cfdcff" fill-opacity="0.547032959909775"/>
<circle cx="1348.7" cy="1009.2" r="1" fill="#ffe0b0" fill-opacity="0.4507019920178118"/>
<circle cx="1736.9" cy="1703.6" r="1.2" fill="#cfdcff" fill-opacity="0.5254321343002528"/>
<circle cx="2107.3" cy="411.9" r="1" fill="#a8c0f0" fill-opacity="0.4751268580006207"/>
<circle cx="642.4" cy="1348.9" r="0.7" fill="#ffe0b0" fill-opacity="0.631524969200137"/>
<circle cx="2587.1" cy="763.1" r="0.8" fill="#cfdcff" fill-opacity="0.5886294548145009"/>
<circle cx="1737.6" cy="827.6" r="0.8" fill="#a8c0f0" fill-opacity="0.6100322913904956"/>
<circle cx="2372.9" cy="264.6" r="0.8" fill="#ffe0b0" fill-opacity="0.41885295056741845"/>
<circle cx="1607.5" cy="1116.7" r="1" fill="#a8c0f0" fill-opacity="0.44499838363011635"/>
<circle cx="1545.7" cy="503.7" r="1" fill="#f8d0a0" fill-opacity="0.3016900856975471"/>
<circle cx="2417.3" cy="1437.6" r="1" fill="#a8c0f0" fill-opacity="0.40795296733580877"/>
<circle cx="1615.8" cy="409.2" r="1.2" fill="#f8d0a0" fill-opacity="0.494239575756402"/>
<circle cx="1634.5" cy="546.1" r="1" fill="#cfdcff" fill-opacity="0.5790984779657766"/>
<circle cx="693.9" cy="982.3" r="1.2" fill="#fff4e0" fill-opacity="0.54769788923979"/>
<circle cx="2572.0" cy="207.4" r="1" fill="#ffffff" fill-opacity="0.6501511897666723"/>
<circle cx="1176.1" cy="1473.0" r="1" fill="#f8d0a0" fill-opacity="0.43420182905948856"/>
<circle cx="789.8" cy="1388.5" r="0.8" fill="#a8c0f0" fill-opacity="0.3432054412372147"/>
<circle cx="827.6" cy="376.1" r="1.2" fill="#a8c0f0" fill-opacity="0.3858716540981907"/>
<circle cx="766.0" cy="1076.2" r="1" fill="#fff4e0" fill-opacity="0.30594531461395863"/>
<circle cx="794.7" cy="677.0" r="1" fill="#a8c0f0" fill-opacity="0.577091128942596"/>
<circle cx="1502.6" cy="1830.0" r="1" fill="#fff4e0" fill-opacity="0.46048004650807156"/>
<circle cx="989.6" cy="1442.0" r="1" fill="#fff4e0" fill-opacity="0.518128166509072"/>
<circle cx="2186.8" cy="795.5" r="1.2" fill="#ffffff" fill-opacity="0.33578868610153223"/>
<circle cx="2960.5" cy="1284.0" r="1.2" fill="#fff4e0" fill-opacity="0.5374291786110499"/>
<circle cx="846.4" cy="693.6" r="0.8" fill="#f8d0a0" fill-opacity="0.629398707624651"/>
<circle cx="635.2" cy="886.2" r="1" fill="#a8c0f0" fill-opacity="0.5734683567084645"/>
<circle cx="1333.7" cy="515.1" r="0.8" fill="#ffe0b0" fill-opacity="0.3437978675618107"/>
<circle cx="2137.3" cy="1089.7" r="1" fill="#f8d0a0" fill-opacity="0.410245321444753"/>
<circle cx="2290.1" cy="1718.0" r="0.7" fill="#ffffff" fill-opacity="0.5088925502805595"/>
<circle cx="2424.5" cy="1138.9" r="1" fill="#a8c0f0" fill-opacity="0.596441142569166"/>
<circle cx="1366.4" cy="473.0" r="1.2" fill="#f8d0a0" fill-opacity="0.5900407030747608"/>
<circle cx="1788.2" cy="173.0" r="0.8" fill="#ffe0b0" fill-opacity="0.4623201277096446"/>
<circle cx="605.3" cy="561.7" r="0.8" fill="#a8c0f0" fill-opacity="0.5911295667249872"/>
<circle cx="2544.0" cy="1200.0" r="0.8" fill="#ffe0b0" fill-opacity="0.49081185177924347"/>
<circle cx="2050.8" cy="1382.9" r="0.8" fill="#ffe0b0" fill-opacity="0.4291719053263696"/>
<circle cx="658.3" cy="627.8" r="0.8" fill="#f8d0a0" fill-opacity="0.31603832004837745"/>
<circle cx="1605.7" cy="607.9" r="1" fill="#f8d0a0" fill-opacity="0.3164737592156799"/>
<circle cx="837.4" cy="549.0" r="1.2" fill="#cfdcff" fill-opacity="0.37152164905578255"/>
<circle cx="2743.5" cy="1749.3" r="1" fill="#a8c0f0" fill-opacity="0.5553895716593984"/>
<circle cx="2832.0" cy="709.6" r="0.7" fill="#fff4e0" fill-opacity="0.3985480316224869"/>
<circle cx="1380.9" cy="455.9" r="1" fill="#ffe0b0" fill-opacity="0.6541850917338807"/>
<circle cx="661.8" cy="1569.9" r="1" fill="#ffe0b0" fill-opacity="0.256099351724948"/>
<circle cx="2781.2" cy="585.0" r="0.8" fill="#ffe0b0" fill-opacity="0.30251295407914225"/>
<circle cx="1492.7" cy="318.0" r="0.8" fill="#cfdcff" fill-opacity="0.36253547585771245"/>
<circle cx="2003.6" cy="888.9" r="1" fill="#ffe0b0" fill-opacity="0.4866709435939147"/>
<circle cx="2477.4" cy="1374.6" r="1" fill="#cfdcff" fill-opacity="0.6630967321273711"/>
<circle cx="2518.9" cy="1091.0" r="1" fill="#cfdcff" fill-opacity="0.3983089216834824"/>
<circle cx="928.5" cy="1656.9" r="1.2" fill="#a8c0f0" fill-opacity="0.29438342195738243"/>
<circle cx="2843.7" cy="1659.6" r="0.7" fill="#fff4e0" fill-opacity="0.5652629568096432"/>
<circle cx="1180.4" cy="1045.2" r="1" fill="#ffe0b0" fill-opacity="0.6373982088584262"/>
<circle cx="1507.8" cy="210.1" r="0.8" fill="#cfdcff" fill-opacity="0.4829640250066775"/>
<circle cx="1756.4" cy="187.9" r="1" fill="#ffffff" fill-opacity="0.2884814793122335"/>
<circle cx="1449.2" cy="957.5" r="1.2" fill="#f8d0a0" fill-opacity="0.6495741894729621"/>
<circle cx="2911.9" cy="1212.6" r="1.2" fill="#f8d0a0" fill-opacity="0.31687370976396945"/>
<circle cx="1514.0" cy="639.4" r="1.2" fill="#ffe0b0" fill-opacity="0.4616042035486642"/>
<circle cx="2859.8" cy="699.7" r="1" fill="#fff4e0" fill-opacity="0.6808948691785534"/>
<circle cx="1436.2" cy="1798.1" r="1" fill="#fff4e0" fill-opacity="0.3395578175455871"/>
<circle cx="1820.4" cy="1806.6" r="1" fill="#a8c0f0" fill-opacity="0.3508926519777794"/>
<circle cx="2454.3" cy="698.1" r="0.8" fill="#ffffff" fill-opacity="0.3357008218959128"/>
<circle cx="1956.1" cy="1231.8" r="1" fill="#a8c0f0" fill-opacity="0.28518028061662004"/>
<circle cx="856.3" cy="1054.4" r="1" fill="#a8c0f0" fill-opacity="0.42300131740048935"/>
<circle cx="2547.7" cy="933.3" r="1" fill="#ffe0b0" fill-opacity="0.6167548689641376"/>
<circle cx="2614.4" cy="436.8" r="0.8" fill="#ffffff" fill-opacity="0.3419124997157512"/>
<circle cx="1437.1" cy="1125.7" r="0.8" fill="#a8c0f0" fill-opacity="0.6760385697974438"/>
<circle cx="2919.3" cy="253.1" r="0.7" fill="#f8d0a0" fill-opacity="0.306886069157028"/>
<circle cx="1878.7" cy="962.4" r="1.2" fill="#a8c0f0" fill-opacity="0.6166203451447716"/>
<circle cx="1270.0" cy="160.1" r="1.2" fill="#ffe0b0" fill-opacity="0.4876910799630532"/>
<circle cx="1259.5" cy="915.4" r="0.8" fill="#a8c0f0" fill-opacity="0.6380805249844081"/>
<circle cx="1192.3" cy="157.8" r="1.2" fill="#ffe0b0" fill-opacity="0.30902722119558523"/>
<circle cx="1604.2" cy="1763.5" r="0.7" fill="#cfdcff" fill-opacity="0.4386125915782677"/>
<circle cx="742.0" cy="1853.1" r="0.7" fill="#cfdcff" fill-opacity="0.6791731418149258"/>
<circle cx="2639.7" cy="1388.0" r="0.7" fill="#cfdcff" fill-opacity="0.562931948238719"/>
<circle cx="1797.0" cy="967.7" r="0.8" fill="#f8d0a0" fill-opacity="0.43178347320045346"/>
<circle cx="2724.4" cy="989.2" r="1" fill="#ffe0b0" fill-opacity="0.36976161851176637"/>
<circle cx="1182.9" cy="912.7" r="1" fill="#f8d0a0" fill-opacity="0.2940803781190301"/>
<circle cx="2663.2" cy="1043.9" r="0.8" fill="#f8d0a0" fill-opacity="0.34683970855082213"/>
<circle cx="644.1" cy="683.2" r="1" fill="#fff4e0" fill-opacity="0.3057874498604537"/>
<circle cx="1615.9" cy="169.5" r="1" fill="#cfdcff" fill-opacity="0.6412755410780009"/>
<circle cx="2192.3" cy="1639.7" r="0.8" fill="#cfdcff" fill-opacity="0.38572980342623275"/>
<circle cx="2368.4" cy="469.2" r="1.2" fill="#a8c0f0" fill-opacity="0.5179002416036469"/>
<circle cx="2480.9" cy="402.2" r="1" fill="#f8d0a0" fill-opacity="0.6209216661307106"/>
<circle cx="2551.0" cy="1818.4" r="0.7" fill="#a8c0f0" fill-opacity="0.34457481874824075"/>
<circle cx="862.0" cy="1374.0" r="1" fill="#a8c0f0" fill-opacity="0.48404074684372705"/>
<circle cx="2888.1" cy="1120.6" r="0.8" fill="#a8c0f0" fill-opacity="0.5417263598845656"/>
<circle cx="2191.5" cy="1138.2" r="1" fill="#f8d0a0" fill-opacity="0.5905836164167464"/>
<circle cx="1989.7" cy="334.5" r="1" fill="#a8c0f0" fill-opacity="0.43959720157178594"/>
<circle cx="1650.1" cy="1089.6" r="1" fill="#f8d0a0" fill-opacity="0.42600945954273617"/>
<circle cx="1637.0" cy="758.3" r="1.2" fill="#ffffff" fill-opacity="0.4482693866462887"/>
<circle cx="1386.5" cy="308.4" r="1" fill="#cfdcff" fill-opacity="0.3287480292194726"/>
<circle cx="894.2" cy="173.5" r="1.2" fill="#ffffff" fill-opacity="0.3180999218911843"/>
<circle cx="728.3" cy="1349.7" r="1" fill="#a8c0f0" fill-opacity="0.3957255788848484"/>
<circle cx="745.2" cy="1669.4" r="0.8" fill="#cfdcff" fill-opacity="0.3646699802688901"/>
<circle cx="2293.6" cy="1501.7" r="1" fill="#cfdcff" fill-opacity="0.42435457000524657"/>
<circle cx="1169.1" cy="1504.4" r="1" fill="#ffffff" fill-opacity="0.40728481238472913"/>
<circle cx="2582.2" cy="1341.9" r="1" fill="#fff4e0" fill-opacity="0.6856517845930677"/>
<circle cx="1631.6" cy="486.1" r="1" fill="#a8c0f0" fill-opacity="0.5109861035873695"/>
<circle cx="2511.4" cy="1746.2" r="1.2" fill="#fff4e0" fill-opacity="0.29485827843223494"/>
<circle cx="2028.3" cy="844.8" r="0.8" fill="#f8d0a0" fill-opacity="0.6679024999823249"/>
<circle cx="2371.2" cy="321.8" r="0.8" fill="#cfdcff" fill-opacity="0.40417758932570524"/>
<circle cx="1990.5" cy="676.6" r="1" fill="#f8d0a0" fill-opacity="0.6160194820186775"/>
<circle cx="1043.9" cy="1367.8" r="1" fill="#a8c0f0" fill-opacity="0.6783046441478664"/>
<circle cx="1396.5" cy="1168.4" r="0.7" fill="#ffe0b0" fill-opacity="0.43469235614893514"/>
<circle cx="2112.4" cy="1224.5" r="1" fill="#ffffff" fill-opacity="0.4515709583155787"/>
<circle cx="1383.3" cy="467.8" r="1" fill="#f8d0a0" fill-opacity="0.5282713671548535"/>
<circle cx="2783.8" cy="1009.7" r="1" fill="#f8d0a0" fill-opacity="0.5577237123551961"/>
<circle cx="1684.9" cy="1377.6" r="1" fill="#ffe0b0" fill-opacity="0.5655383959217876"/>
<circle cx="1118.7" cy="1172.0" r="1.2" fill="#fff4e0" fill-opacity="0.4498335004542985"/>
<circle cx="2724.9" cy="1376.6" r="0.8" fill="#cfdcff" fill-opacity="0.6183834835279158"/>
<circle cx="1342.0" cy="1599.8" r="1" fill="#fff4e0" fill-opacity="0.5983975649945357"/>
<circle cx="2789.7" cy="852.8" r="1" fill="#fff4e0" fill-opacity="0.6900183734473289"/>
<circle cx="1875.4" cy="1301.1" r="1" fill="#ffe0b0" fill-opacity="0.6216626630039436"/>
<circle cx="915.0" cy="1705.8" r="1" fill="#f8d0a0" fill-opacity="0.48699811636481116"/>
<circle cx="1104.6" cy="418.5" r="1" fill="#a8c0f0" fill-opacity="0.5964387181737472"/>
<circle cx="1245.7" cy="1286.6" r="1" fill="#fff4e0" fill-opacity="0.2810251081949853"/>
<circle cx="1232.9" cy="478.9" r="1" fill="#f8d0a0" fill-opacity="0.4747154723633955"/>
<circle cx="2051.7" cy="1832.1" r="1" fill="#ffe0b0" fill-opacity="0.5547183491722493"/>
<circle cx="2290.5" cy="204.1" r="1.2" fill="#a8c0f0" fill-opacity="0.5461889155289774"/>
<circle cx="1989.8" cy="148.9" r="1.2" fill="#ffe0b0" fill-opacity="0.6395858588646408"/>
<circle cx="793.1" cy="1208.7" r="1" fill="#fff4e0" fill-opacity="0.3589638074484313"/>
<circle cx="2979.8" cy="1425.9" r="1" fill="#cfdcff" fill-opacity="0.2706905564804496"/>
<circle cx="2980.2" cy="556.6" r="0.7" fill="#cfdcff" fill-opacity="0.5438789054818128"/>
<circle cx="1466.5" cy="1662.8" r="1" fill="#a8c0f0" fill-opacity="0.2953488613359587"/>
<circle cx="1085.3" cy="1517.4" r="1.2" fill="#a8c0f0" fill-opacity="0.569815862974559"/>
<circle cx="1388.0" cy="588.2" r="1.2" fill="#ffffff" fill-opacity="0.35534266600871356"/>
<circle cx="2488.8" cy="257.4" r="1" fill="#ffe0b0" fill-opacity="0.5084777108134161"/>
<circle cx="2187.3" cy="702.8" r="1" fill="#fff4e0" fill-opacity="0.5314130620961868"/>
<circle cx="2698.7" cy="1788.3" r="1.2" fill="#f8d0a0" fill-opacity="0.3828603843661485"/>
<circle cx="2001.1" cy="1674.5" r="1.2" fill="#fff4e0" fill-opacity="0.26380544125135613"/>
<circle cx="1494.1" cy="1007.7" r="0.8" fill="#f8d0a0" fill-opacity="0.6779056845392777"/>
<circle cx="1619.0" cy="1123.2" r="0.8" fill="#ffffff" fill-opacity="0.4175695592454559"/>
<circle cx="812.4" cy="1245.6" r="0.8" fill="#ffffff" fill-opacity="0.5210052123442689"/>
<circle cx="2496.2" cy="334.2" r="1" fill="#a8c0f0" fill-opacity="0.6844643607646685"/>
<circle cx="1829.7" cy="385.0" r="1" fill="#a8c0f0" fill-opacity="0.31988163846832524"/>
<circle cx="2198.8" cy="667.0" r="0.8" fill="#cfdcff" fill-opacity="0.32411838844715"/>
<circle cx="1578.0" cy="330.8" r="1" fill="#fff4e0" fill-opacity="0.4981371920245071"/>
<circle cx="1940.1" cy="814.8" r="0.7" fill="#f8d0a0" fill-opacity="0.3984083400870335"/>
<circle cx="2862.7" cy="1619.8" r="0.7" fill="#f8d0a0" fill-opacity="0.4993278932154326"/>
<circle cx="2123.0" cy="1625.8" r="1.2" fill="#ffe0b0" fill-opacity="0.5242715294945578"/>
<circle cx="971.7" cy="682.9" r="1" fill="#ffffff" fill-opacity="0.49219579990247886"/>
<circle cx="848.2" cy="1342.7" r="1" fill="#ffe0b0" fill-opacity="0.39279276821709846"/>
<circle cx="956.0" cy="1440.2" r="0.7" fill="#ffe0b0" fill-opacity="0.4063438121563717"/>
<circle cx="2180.5" cy="1724.1" r="1" fill="#cfdcff" fill-opacity="0.5436581262605897"/>
<circle cx="709.8" cy="640.5" r="1.2" fill="#ffffff" fill-opacity="0.5855150490370042"/>
<circle cx="2740.2" cy="726.5" r="1.2" fill="#cfdcff" fill-opacity="0.5576795986865584"/>
<circle cx="1465.7" cy="1077.2" r="1.2" fill="#ffe0b0" fill-opacity="0.45223392712466537"/>
<circle cx="937.9" cy="231.9" r="1" fill="#a8c0f0" fill-opacity="0.2881173272595371"/>
<circle cx="1076.1" cy="1794.4" r="0.7" fill="#ffffff" fill-opacity="0.6144954813062611"/>
<circle cx="1884.0" cy="1077.4" r="1.2" fill="#fff4e0" fill-opacity="0.4346155778399635"/>
<circle cx="1952.7" cy="266.3" r="0.8" fill="#ffffff" fill-opacity="0.5559906796547948"/>
<circle cx="2911.9" cy="881.8" r="1.2" fill="#a8c0f0" fill-opacity="0.2505349797666423"/>
<circle cx="1180.4" cy="503.0" r="0.8" fill="#fff4e0" fill-opacity="0.419836464070273"/>
<circle cx="2733.9" cy="369.8" r="1.2" fill="#a8c0f0" fill-opacity="0.5092736235192952"/>
<circle cx="2947.6" cy="1522.9" r="0.7" fill="#fff4e0" fill-opacity="0.5561832762672405"/>
<circle cx="1340.2" cy="1388.2" r="1" fill="#ffffff" fill-opacity="0.4137327082177879"/>
<circle cx="2737.4" cy="1305.8" r="1" fill="#fff4e0" fill-opacity="0.5032309559716609"/>
<circle cx="2551.8" cy="1033.9" r="0.7" fill="#a8c0f0" fill-opacity="0.6537657304598331"/>
<circle cx="2332.2" cy="964.5" r="1.2" fill="#fff4e0" fill-opacity="0.2540315020974173"/>
<circle cx="1761.0" cy="1556.6" r="1" fill="#ffe0b0" fill-opacity="0.5050950087410411"/>
<circle cx="670.6" cy="971.5" r="0.7" fill="#cfdcff" fill-opacity="0.28435403175505863"/>
<circle cx="1983.3" cy="671.7" r="1" fill="#a8c0f0" fill-opacity="0.4514274216548052"/>
<circle cx="793.2" cy="1697.8" r="1.2" fill="#cfdcff" fill-opacity="0.5110235533772639"/>
<circle cx="1887.4" cy="1051.9" r="1" fill="#a8c0f0" fill-opacity="0.34780476630995394"/>
<circle cx="1646.7" cy="831.6" r="1.2" fill="#ffe0b0" fill-opacity="0.5705214027819889"/>
<circle cx="1916.3" cy="1716.2" r="0.8" fill="#fff4e0" fill-opacity="0.3497339532384556"/>
<circle cx="1140.8" cy="149.9" r="1" fill="#ffe0b0" fill-opacity="0.27542344560352916"/>
<circle cx="1882.1" cy="634.4" r="1.2" fill="#cfdcff" fill-opacity="0.5188080629511986"/>
<circle cx="1329.7" cy="1393.5" r="0.8" fill="#cfdcff" fill-opacity="0.4544428107048781"/>
<circle cx="2677.8" cy="810.4" r="0.7" fill="#cfdcff" fill-opacity="0.6762804700232854"/>
<circle cx="1384.9" cy="1221.3" r="1.2" fill="#ffffff" fill-opacity="0.6341082857926452"/>
<circle cx="2579.0" cy="962.6" r="0.8" fill="#fff4e0" fill-opacity="0.37200659488251797"/>
<circle cx="2389.0" cy="1830.1" r="0.7" fill="#ffe0b0" fill-opacity="0.25281520830014675"/>
<circle cx="1459.0" cy="719.5" r="1.2" fill="#ffffff" fill-opacity="0.6756301893273895"/>
<circle cx="2743.2" cy="686.3" r="1" fill="#ffe0b0" fill-opacity="0.31398078411167446"/>
<circle cx="2517.6" cy="149.4" r="0.7" fill="#cfdcff" fill-opacity="0.49431203225522263"/>
<circle cx="2378.0" cy="1828.8" r="1.2" fill="#ffffff" fill-opacity="0.2509718326327076"/>
<circle cx="1125.9" cy="824.1" r="1" fill="#ffe0b0" fill-opacity="0.36406433314626185"/>
<circle cx="665.8" cy="1762.9" r="1" fill="#a8c0f0" fill-opacity="0.5022893532245096"/>
<circle cx="1476.7" cy="1118.6" r="1" fill="#f8d0a0" fill-opacity="0.3655311708128401"/>
<circle cx="2590.8" cy="141.1" r="1" fill="#ffffff" fill-opacity="0.6748597095376894"/>
<circle cx="1220.1" cy="750.9" r="1.2" fill="#ffffff" fill-opacity="0.35647966972220024"/>
<circle cx="2318.3" cy="1249.6" r="0.7" fill="#f8d0a0" fill-opacity="0.6640488349067684"/>
<circle cx="777.0" cy="1326.5" r="1" fill="#ffffff" fill-opacity="0.3146099759722481"/>
<circle cx="792.7" cy="1853.1" r="1" fill="#cfdcff" fill-opacity="0.6075677823740875"/>
<circle cx="2950.9" cy="1728.3" r="1.2" fill="#ffe0b0" fill-opacity="0.6709811891118909"/>
<circle cx="1427.1" cy="1541.8" r="1" fill="#a8c0f0" fill-opacity="0.6011288768002035"/>
<circle cx="1211.1" cy="1191.5" r="1.2" fill="#fff4e0" fill-opacity="0.28821169127901575"/>
<circle cx="2974.3" cy="1057.4" r="1.2" fill="#ffffff" fill-opacity="0.3158400767229393"/>
<circle cx="2835.2" cy="877.0" r="0.8" fill="#cfdcff" fill-opacity="0.4352111252472134"/>
<circle cx="2035.2" cy="858.9" r="0.7" fill="#a8c0f0" fill-opacity="0.2915728946842759"/>
<circle cx="2330.0" cy="339.5" r="1" fill="#cfdcff" fill-opacity="0.6133925189569057"/>
<circle cx="2689.1" cy="1650.0" r="0.8" fill="#a8c0f0" fill-opacity="0.2523352182882005"/>
<circle cx="2429.3" cy="1155.9" r="1" fill="#ffe0b0" fill-opacity="0.2583361750626376"/>
<circle cx="1648.2" cy="523.5" r="1.2" fill="#ffffff" fill-opacity="0.6912939634399233"/>
<circle cx="1110.6" cy="240.2" r="0.8" fill="#ffffff" fill-opacity="0.3535975344503621"/>
<circle cx="843.1" cy="1131.1" r="0.7" fill="#ffe0b0" fill-opacity="0.4456911879937079"/>
<circle cx="3011.7" cy="1742.5" r="1" fill="#cfdcff" fill-opacity="0.5651293379878755"/>
<circle cx="1388.1" cy="1501.1" r="0.8" fill="#f8d0a0" fill-opacity="0.2956914294941412"/>
<circle cx="2121.8" cy="900.7" r="1" fill="#ffffff" fill-opacity="0.282974587275145"/>
<circle cx="1185.8" cy="1500.2" r="0.8" fill="#ffffff" fill-opacity="0.5253382962513977"/>
<circle cx="2439.0" cy="935.2" r="1" fill="#cfdcff" fill-opacity="0.5585684266803844"/>
<circle cx="2078.7" cy="849.0" r="0.8" fill="#cfdcff" fill-opacity="0.3795205425278849"/>
<circle cx="834.5" cy="1157.7" r="1.2" fill="#fff4e0" fill-opacity="0.397850379478989"/>
<circle cx="1143.0" cy="1211.1" r="0.8" fill="#fff4e0" fill-opacity="0.4505837295998678"/>
<circle cx="2582.2" cy="1609.5" r="1.2" fill="#cfdcff" fill-opacity="0.4464718926139122"/>
<circle cx="2182.3" cy="1623.8" r="0.8" fill="#fff4e0" fill-opacity="0.40548547674265134"/>
<circle cx="2985.5" cy="223.1" r="1" fill="#ffffff" fill-opacity="0.4644195074670905"/>
<circle cx="2406.5" cy="1211.2" r="1" fill="#ffffff" fill-opacity="0.4314375294901185"/>
<circle cx="2006.8" cy="1020.3" r="0.8" fill="#ffffff" fill-opacity="0.6928991283229857"/>
<circle cx="2877.8" cy="329.9" r="1" fill="#cfdcff" fill-opacity="0.3964054385719622"/>
<circle cx="1110.9" cy="1244.2" r="0.8" fill="#f8d0a0" fill-opacity="0.6693985374149167"/>
<circle cx="1092.5" cy="1686.8" r="0.8" fill="#ffe0b0" fill-opacity="0.5849073730183011"/>
<circle cx="2650.0" cy="210.2" r="1" fill="#ffffff" fill-opacity="0.5243012034764266"/>
<circle cx="2561.3" cy="299.6" r="1" fill="#f8d0a0" fill-opacity="0.6260370115899423"/>
<circle cx="2409.6" cy="731.7" r="0.7" fill="#a8c0f0" fill-opacity="0.5810818715405028"/>
<circle cx="2298.4" cy="356.4" r="0.7" fill="#fff4e0" fill-opacity="0.6238970359800162"/>
<circle cx="2232.8" cy="1211.4" r="1" fill="#f8d0a0" fill-opacity="0.37019478414039436"/>
<circle cx="2832.5" cy="1039.0" r="0.7" fill="#ffe0b0" fill-opacity="0.40321793743325096"/>
<circle cx="1448.3" cy="227.2" r="0.7" fill="#cfdcff" fill-opacity="0.6166353605950987"/>
<circle cx="614.3" cy="838.8" r="0.7" fill="#a8c0f0" fill-opacity="0.46580398540374307"/>
<circle cx="2630.2" cy="268.5" r="0.7" fill="#ffe0b0" fill-opacity="0.2560177216325432"/>
<circle cx="828.7" cy="1581.5" r="1.2" fill="#fff4e0" fill-opacity="0.4280779278698116"/>
<circle cx="1140.3" cy="1308.6" r="1.2" fill="#ffffff" fill-opacity="0.5597687750480413"/>
<circle cx="1860.1" cy="1322.3" r="1.2" fill="#f8d0a0" fill-opacity="0.32440870921406556"/>
<circle cx="1885.3" cy="1217.3" r="0.7" fill="#ffffff" fill-opacity="0.3292928400469724"/>
<circle cx="1167.4" cy="413.6" r="1" fill="#cfdcff" fill-opacity="0.6948337598672487"/>
<circle cx="749.9" cy="869.2" r="0.8" fill="#f8d0a0" fill-opacity="0.6988494725623751"/>
<circle cx="1804.6" cy="1335.9" r="1.2" fill="#ffffff" fill-opacity="0.5952375064874037"/>
<circle cx="1418.5" cy="831.7" r="1" fill="#a8c0f0" fill-opacity="0.6713355369825851"/>
<circle cx="1166.1" cy="180.8" r="1" fill="#a8c0f0" fill-opacity="0.42450992172926416"/>
<circle cx="1159.7" cy="1738.3" r="1" fill="#ffffff" fill-opacity="0.2910735755689273"/>
<circle cx="859.8" cy="1055.3" r="1" fill="#ffffff" fill-opacity="0.6387600173993271"/>
<circle cx="815.9" cy="1321.8" r="0.7" fill="#fff4e0" fill-opacity="0.2665358846999993"/>
<circle cx="906.9" cy="1657.0" r="1.2" fill="#fff4e0" fill-opacity="0.5293642312591944"/>
<circle cx="1622.4" cy="526.9" r="1" fill="#fff4e0" fill-opacity="0.5389019998846583"/>
<circle cx="1425.5" cy="908.3" r="0.8" fill="#cfdcff" fill-opacity="0.3688813372185938"/>
<circle cx="1836.6" cy="212.3" r="1" fill="#fff4e0" fill-opacity="0.49303592184441136"/>
<circle cx="1769.9" cy="1699.0" r="1.2" fill="#a8c0f0" fill-opacity="0.5368823123048888"/>
<circle cx="2020.1" cy="1481.8" r="1" fill="#a8c0f0" fill-opacity="0.25027609229245595"/>
<circle cx="2976.8" cy="1494.1" r="0.8" fill="#ffffff" fill-opacity="0.3003442819912529"/>
<circle cx="1141.9" cy="1259.2" r="0.8" fill="#ffffff" fill-opacity="0.32244662137603586"/>
<circle cx="992.0" cy="1056.8" r="1" fill="#cfdcff" fill-opacity="0.6186616602714876"/>
<circle cx="1774.5" cy="1532.6" r="0.8" fill="#ffe0b0" fill-opacity="0.31067774509281665"/>
<circle cx="1241.0" cy="680.2" r="0.8" fill="#ffffff" fill-opacity="0.47735582051258063"/>
<circle cx="1350.9" cy="1148.3" r="0.7" fill="#a8c0f0" fill-opacity="0.3549747544237207"/>
<circle cx="2783.4" cy="908.2" r="0.8" fill="#cfdcff" fill-opacity="0.6511614401719814"/>
<circle cx="899.7" cy="984.9" r="1.2" fill="#ffffff" fill-opacity="0.2523429978170237"/>
<circle cx="1049.8" cy="1055.1" r="0.8" fill="#a8c0f0" fill-opacity="0.5210504262083626"/>
<circle cx="2561.5" cy="1036.3" r="0.7" fill="#fff4e0" fill-opacity="0.626903140979018"/>
<circle cx="2696.9" cy="1691.1" r="0.7" fill="#ffffff" fill-opacity="0.32732285708148223"/>
<circle cx="1441.9" cy="459.1" r="1" fill="#ffe0b0" fill-opacity="0.6712254936901886"/>
<circle cx="1233.4" cy="1112.6" r="1" fill="#fff4e0" fill-opacity="0.3638888759298285"/>
<circle cx="1598.4" cy="851.4" r="1.2" fill="#fff4e0" fill-opacity="0.3232504782170189"/>
<circle cx="2694.6" cy="371.3" r="0.8" fill="#f8d0a0" fill-opacity="0.6009902535683809"/>
<circle cx="2287.6" cy="1843.2" r="1" fill="#f8d0a0" fill-opacity="0.6787396183328929"/>
<circle cx="1104.5" cy="432.1" r="1" fill="#ffffff" fill-opacity="0.4610389926106816"/>
<circle cx="2284.3" cy="667.1" r="0.7" fill="#fff4e0" fill-opacity="0.2786905323431496"/>
<circle cx="2852.7" cy="140.2" r="0.7" fill="#f8d0a0" fill-opacity="0.5046871217447237"/>
<circle cx="2058.9" cy="249.5" r="1" fill="#fff4e0" fill-opacity="0.6708335605648335"/>
<circle cx="1623.0" cy="1793.4" r="1" fill="#a8c0f0" fill-opacity="0.4280196123150059"/>
<circle cx="1628.1" cy="1053.3" r="0.8" fill="#a8c0f0" fill-opacity="0.4923989095493594"/>
<circle cx="2338.8" cy="1224.5" r="0.7" fill="#ffe0b0" fill-opacity="0.5919986519373506"/>
<circle cx="1127.8" cy="1102.7" r="1" fill="#fff4e0" fill-opacity="0.44381133319181365"/>
<circle cx="1739.9" cy="1395.0" r="0.7" fill="#cfdcff" fill-opacity="0.6038026354618602"/>
<circle cx="1603.3" cy="578.1" r="1" fill="#cfdcff" fill-opacity="0.6099740272921594"/>
<circle cx="1242.6" cy="1278.7" r="1" fill="#a8c0f0" fill-opacity="0.6731972587807474"/>
<circle cx="1685.9" cy="733.8" r="0.7" fill="#a8c0f0" fill-opacity="0.4615643897929079"/>
<circle cx="1892.6" cy="647.9" r="0.7" fill="#cfdcff" fill-opacity="0.46780270810222924"/>
<circle cx="774.8" cy="409.1" r="1" fill="#ffe0b0" fill-opacity="0.46511880736826827"/>
<circle cx="1274.5" cy="700.4" r="1.2" fill="#fff4e0" fill-opacity="0.4563812114915513"/>
<circle cx="2118.9" cy="259.4" r="1" fill="#ffe0b0" fill-opacity="0.31763064755716236"/>
<circle cx="2489.2" cy="669.6" r="1" fill="#cfdcff" fill-opacity="0.5222111896289506"/>
<circle cx="2589.5" cy="369.7" r="0.8" fill="#ffe0b0" fill-opacity="0.35119406118798585"/>
<circle cx="1404.6" cy="337.5" r="1.2" fill="#cfdcff" fill-opacity="0.5128176838831032"/>
<circle cx="1860.8" cy="180.4" r="1.2" fill="#f8d0a0" fill-opacity="0.6262336222284272"/>
<circle cx="1174.7" cy="1315.2" r="0.8" fill="#f8d0a0" fill-opacity="0.6999205884482818"/>
<circle cx="1970.3" cy="1682.3" r="1" fill="#ffe0b0" fill-opacity="0.4374227936516866"/>
<circle cx="1789.8" cy="766.1" r="1.2" fill="#ffe0b0" fill-opacity="0.3408708183021775"/>
<circle cx="1853.9" cy="515.5" r="1" fill="#ffe0b0" fill-opacity="0.3301819478654998"/>
<circle cx="2401.4" cy="1066.2" r="0.8" fill="#cfdcff" fill-opacity="0.6081057316780553"/>
<circle cx="785.9" cy="833.3" r="1" fill="#ffffff" fill-opacity="0.30276818681313916"/>
<circle cx="2757.5" cy="733.0" r="0.8" fill="#cfdcff" fill-opacity="0.28530327827564694"/>
<circle cx="2725.7" cy="753.1" r="0.8" fill="#cfdcff" fill-opacity="0.30687333213101203"/>
<circle cx="2613.4" cy="1329.5" r="0.8" fill="#f8d0a0" fill-opacity="0.4738061516613949"/>
<circle cx="2061.2" cy="501.4" r="1" fill="#cfdcff" fill-opacity="0.2527422238031012"/>
<circle cx="1566.2" cy="1372.1" r="0.8" fill="#f8d0a0" fill-opacity="0.6317130492946008"/>
<circle cx="1292.0" cy="294.8" r="1" fill="#f8d0a0" fill-opacity="0.6337070753623177"/>
<circle cx="1209.4" cy="1221.7" r="0.8" fill="#a8c0f0" fill-opacity="0.31166098994968877"/>
<circle cx="1843.5" cy="1127.3" r="1" fill="#fff4e0" fill-opacity="0.4615051694533058"/>
<circle cx="945.0" cy="1364.2" r="1.2" fill="#ffe0b0" fill-opacity="0.3890290597706382"/>
<circle cx="2621.3" cy="1750.4" r="1" fill="#cfdcff" fill-opacity="0.28101876902328254"/>
<circle cx="1544.4" cy="895.5" r="1" fill="#a8c0f0" fill-opacity="0.6430771943721494"/>
<circle cx="878.5" cy="540.2" r="0.8" fill="#cfdcff" fill-opacity="0.32515564782256323"/>
<circle cx="1363.9" cy="675.1" r="1" fill="#fff4e0" fill-opacity="0.3337184426855381"/>
<circle cx="1280.3" cy="1830.2" r="0.7" fill="#f8d0a0" fill-opacity="0.4674144114758547"/>
<circle cx="761.8" cy="254.2" r="0.8" fill="#fff4e0" fill-opacity="0.5831577982370698"/>
<circle cx="856.9" cy="520.3" r="1" fill="#ffffff" fill-opacity="0.5436807482261412"/>
<circle cx="2473.2" cy="1795.6" r="1.2" fill="#ffe0b0" fill-opacity="0.2940423538725027"/>
<circle cx="2291.8" cy="1542.2" r="0.8" fill="#f8d0a0" fill-opacity="0.4788450106538634"/>
<circle cx="1750.5" cy="1413.6" r="1" fill="#ffffff" fill-opacity="0.6236880030290697"/>
<circle cx="2277.1" cy="319.4" r="0.7" fill="#ffe0b0" fill-opacity="0.27357314456934584"/>
<circle cx="1241.5" cy="1221.7" r="0.7" fill="#ffe0b0" fill-opacity="0.6390032891853877"/>
<circle cx="905.0" cy="1493.3" r="1" fill="#fff4e0" fill-opacity="0.5195533105733667"/>
<circle cx="890.4" cy="486.4" r="0.8" fill="#ffffff" fill-opacity="0.5247156933721465"/>
<circle cx="2114.4" cy="1608.4" r="0.7" fill="#ffffff" fill-opacity="0.28478300711305427"/>
<circle cx="1028.7" cy="1112.0" r="0.8" fill="#ffffff" fill-opacity="0.29222187851964077"/>
<circle cx="1417.9" cy="526.8" r="1.2" fill="#ffffff" fill-opacity="0.3316284434719362"/>
<circle cx="1077.1" cy="845.5" r="1.2" fill="#f8d0a0" fill-opacity="0.2665497530345854"/>
<circle cx="848.2" cy="421.0" r="0.7" fill="#ffffff" fill-opacity="0.5832131530946294"/>
<circle cx="1302.7" cy="1388.8" r="1" fill="#f8d0a0" fill-opacity="0.4295231171741958"/>
<circle cx="1757.0" cy="165.8" r="0.8" fill="#ffffff" fill-opacity="0.5044588506452254"/>
<circle cx="2674.2" cy="753.2" r="1" fill="#cfdcff" fill-opacity="0.5098276572034599"/>
<circle cx="2993.0" cy="1225.2" r="0.8" fill="#ffffff" fill-opacity="0.5119198488318697"/>
<circle cx="1381.6" cy="936.4" r="0.8" fill="#ffffff" fill-opacity="0.6411283904941527"/>
<circle cx="1235.8" cy="1042.0" r="1" fill="#cfdcff" fill-opacity="0.6603923714413447"/>
<circle cx="828.3" cy="309.0" r="0.8" fill="#f8d0a0" fill-opacity="0.2630990891876774"/>
<circle cx="2701.9" cy="782.2" r="1" fill="#fff4e0" fill-opacity="0.40999135820763705"/>
<circle cx="1217.8" cy="1571.8" r="1" fill="#fff4e0" fill-opacity="0.38921005451708207"/>
<circle cx="2023.6" cy="1196.9" r="0.7" fill="#a8c0f0" fill-opacity="0.38494893052885426"/>
<circle cx="2097.3" cy="569.0" r="1" fill="#fff4e0" fill-opacity="0.4201179546434212"/>
<circle cx="1159.6" cy="264.9" r="1" fill="#f8d0a0" fill-opacity="0.6036951884363282"/>
<circle cx="887.2" cy="1011.2" r="0.7" fill="#ffe0b0" fill-opacity="0.537977361238734"/>
<circle cx="1990.1" cy="1724.6" r="1.2" fill="#a8c0f0" fill-opacity="0.663274736251297"/>
<circle cx="1738.7" cy="1013.7" r="1" fill="#ffffff" fill-opacity="0.45892715770077874"/>
<circle cx="2871.1" cy="961.6" r="0.7" fill="#ffe0b0" fill-opacity="0.40915722684659195"/>
<circle cx="1082.6" cy="1199.0" r="1.2" fill="#f8d0a0" fill-opacity="0.4640575305440737"/>
<circle cx="2847.6" cy="1441.8" r="0.7" fill="#cfdcff" fill-opacity="0.263789506018587"/>
<circle cx="2299.8" cy="1152.2" r="1.2" fill="#f8d0a0" fill-opacity="0.26948668447218405"/>
<circle cx="1530.9" cy="1018.8" r="0.7" fill="#f8d0a0" fill-opacity="0.3160412935158877"/>
<circle cx="1438.4" cy="1295.2" r="0.7" fill="#f8d0a0" fill-opacity="0.5989992206844148"/>
<circle cx="1069.9" cy="1577.0" r="0.7" fill="#ffe0b0" fill-opacity="0.4585611330878615"/>
<circle cx="2564.9" cy="705.8" r="0.8" fill="#fff4e0" fill-opacity="0.6395522040213634"/>
<circle cx="2309.1" cy="122.1" r="0.7" fill="#f8d0a0" fill-opacity="0.6307931768094761"/>
<circle cx="2482.3" cy="878.9" r="0.7" fill="#f8d0a0" fill-opacity="0.5091853719018994"/>
<circle cx="1043.7" cy="689.2" r="0.8" fill="#cfdcff" fill-opacity="0.5698611834704159"/>
<circle cx="2772.7" cy="1594.5" r="0.8" fill="#fff4e0" fill-opacity="0.5956393714802168"/>
<circle cx="786.8" cy="1627.8" r="1.2" fill="#cfdcff" fill-opacity="0.6712811567787712"/>
<circle cx="1794.7" cy="251.1" r="0.8" fill="#f8d0a0" fill-opacity="0.5786810372473166"/>
<circle cx="950.3" cy="1053.7" r="1" fill="#a8c0f0" fill-opacity="0.38462331495739777"/>
<circle cx="1141.3" cy="1094.5" r="1" fill="#ffe0b0" fill-opacity="0.5716302092569079"/>
<circle cx="1156.8" cy="384.9" r="1" fill="#ffe0b0" fill-opacity="0.5460986198522819"/>
<circle cx="765.3" cy="583.6" r="0.7" fill="#ffe0b0" fill-opacity="0.6437904167722495"/>
<circle cx="2144.6" cy="294.7" r="0.7" fill="#cfdcff" fill-opacity="0.3170329961276494"/>
<circle cx="3018.8" cy="669.6" r="1.2" fill="#cfdcff" fill-opacity="0.4670453117077853"/>
<circle cx="2212.6" cy="1021.1" r="0.8" fill="#ffffff" fill-opacity="0.5629745562517616"/>
<circle cx="915.9" cy="650.7" r="0.7" fill="#f8d0a0" fill-opacity="0.6180821901560569"/>
<circle cx="2624.6" cy="922.1" r="0.8" fill="#cfdcff" fill-opacity="0.6765656389183707"/>
<circle cx="2191.5" cy="1290.1" r="1" fill="#ffffff" fill-opacity="0.36545303164486276"/>
<circle cx="1835.4" cy="234.9" r="1" fill="#fff4e0" fill-opacity="0.4700376513214259"/>
<circle cx="1190.1" cy="875.8" r="0.7" fill="#a8c0f0" fill-opacity="0.32124262841216283"/>
<circle cx="2985.8" cy="1251.9" r="1" fill="#f8d0a0" fill-opacity="0.6253260731002073"/>
<circle cx="2649.6" cy="498.9" r="0.7" fill="#cfdcff" fill-opacity="0.4162221097403515"/>
<circle cx="1947.1" cy="1444.0" r="1.2" fill="#a8c0f0" fill-opacity="0.3699366977097952"/>
<circle cx="1657.7" cy="1001.4" r="1" fill="#ffffff" fill-opacity="0.2738240790444059"/>
<circle cx="779.3" cy="364.7" r="0.7" fill="#cfdcff" fill-opacity="0.5518507440867051"/>
<circle cx="2638.9" cy="1512.4" r="0.7" fill="#ffe0b0" fill-opacity="0.2601845150579887"/>
<circle cx="2114.8" cy="1329.6" r="1" fill="#ffe0b0" fill-opacity="0.5216992086284209"/>
<circle cx="1094.7" cy="281.8" r="1" fill="#ffffff" fill-opacity="0.49317753334132886"/>
<circle cx="899.6" cy="919.5" r="0.8" fill="#ffe0b0" fill-opacity="0.6794241217843371"/>
<circle cx="2672.6" cy="1622.5" r="1.2" fill="#fff4e0" fill-opacity="0.2809740782284692"/>
<circle cx="2905.6" cy="1238.4" r="1" fill="#cfdcff" fill-opacity="0.3896666454063844"/>
<circle cx="1498.7" cy="1485.4" r="1" fill="#f8d0a0" fill-opacity="0.39695956703354923"/>
<circle cx="625.1" cy="1470.1" r="1.2" fill="#ffffff" fill-opacity="0.4714846635917271"/>
<circle cx="1060.0" cy="1367.8" r="1.2" fill="#cfdcff" fill-opacity="0.6986773992925474"/>
<circle cx="638.2" cy="1117.1" r="0.8" fill="#ffffff" fill-opacity="0.3933156799713087"/>
<circle cx="1847.5" cy="1015.2" r="0.8" fill="#ffe0b0" fill-opacity="0.6217234176947017"/>
<circle cx="2517.2" cy="1765.0" r="0.8" fill="#f8d0a0" fill-opacity="0.4601391533089652"/>
<circle cx="2714.6" cy="1802.2" r="1.2" fill="#fff4e0" fill-opacity="0.6403946314175871"/>
<circle cx="771.0" cy="950.5" r="0.8" fill="#ffe0b0" fill-opacity="0.46663022374548224"/>
<circle cx="1906.5" cy="200.9" r="1" fill="#ffe0b0" fill-opacity="0.577885387351772"/>
<circle cx="2003.9" cy="415.3" r="1" fill="#ffe0b0" fill-opacity="0.6347077070260739"/>
<circle cx="1893.6" cy="1211.0" r="1" fill="#f8d0a0" fill-opacity="0.4570745920281415"/>
<circle cx="2920.3" cy="593.7" r="1.2" fill="#a8c0f0" fill-opacity="0.4653526272612222"/>
<circle cx="945.5" cy="364.7" r="1.2" fill="#ffffff" fill-opacity="0.6094082343040322"/>
<circle cx="1649.7" cy="212.3" r="0.8" fill="#a8c0f0" fill-opacity="0.2703326764685545"/>
<circle cx="2176.3" cy="364.3" r="1" fill="#f8d0a0" fill-opacity="0.4396891042503964"/>
<circle cx="2432.1" cy="869.7" r="1" fill="#ffe0b0" fill-opacity="0.4310691539994303"/>
<circle cx="1864.2" cy="599.7" r="1.2" fill="#fff4e0" fill-opacity="0.566682249752092"/>
<circle cx="2494.2" cy="1722.3" r="0.8" fill="#a8c0f0" fill-opacity="0.4062702716721181"/>
<circle cx="1443.6" cy="1554.9" r="0.8" fill="#ffe0b0" fill-opacity="0.6633511457206692"/>
<circle cx="1123.8" cy="1046.9" r="0.7" fill="#ffe0b0" fill-opacity="0.6530589807878378"/>
<circle cx="1794.3" cy="1220.1" r="1" fill="#ffe0b0" fill-opacity="0.3506648917157818"/>
<circle cx="2016.9" cy="727.9" r="1.2" fill="#a8c0f0" fill-opacity="0.6883326436809105"/>
<circle cx="1624.9" cy="626.0" r="1" fill="#fff4e0" fill-opacity="0.40719042072240996"/>
<circle cx="2087.3" cy="1658.2" r="1" fill="#fff4e0" fill-opacity="0.6586235290673121"/>
<circle cx="1170.2" cy="538.6" r="0.8" fill="#cfdcff" fill-opacity="0.3149785977996139"/>
<circle cx="2254.8" cy="1120.1" r="1" fill="#ffffff" fill-opacity="0.6146511505018939"/>
<circle cx="2239.0" cy="858.3" r="1.2" fill="#a8c0f0" fill-opacity="0.4947633623958728"/>
<circle cx="2394.4" cy="1592.6" r="1" fill="#ffe0b0" fill-opacity="0.3026382333600049"/>
<circle cx="783.6" cy="807.5" r="0.7" fill="#ffe0b0" fill-opacity="0.3899514046863832"/>
<circle cx="3007.0" cy="1840.9" r="0.7" fill="#fff4e0" fill-opacity="0.6383418221612365"/>
<circle cx="760.1" cy="1653.9" r="0.8" fill="#ffe0b0" fill-opacity="0.6831103308910939"/>
<circle cx="2719.6" cy="1760.1" r="1" fill="#ffffff" fill-opacity="0.6353152376288689"/>
<circle cx="1068.5" cy="764.1" r="1" fill="#f8d0a0" fill-opacity="0.3710466733487493"/>
<circle cx="1362.7" cy="350.0" r="1.2" fill="#fff4e0" fill-opacity="0.550437284608469"/>
<circle cx="1797.7" cy="462.8" r="1" fill="#cfdcff" fill-opacity="0.5086115409579244"/>
<circle cx="2724.3" cy="622.8" r="1.2" fill="#a8c0f0" fill-opacity="0.37456988706259325"/>
<circle cx="2614.4" cy="474.3" r="0.8" fill="#f8d0a0" fill-opacity="0.5964804425577541"/>
<circle cx="741.3" cy="381.7" r="1.2" fill="#a8c0f0" fill-opacity="0.341417459543139"/>
<circle cx="1052.6" cy="643.0" r="0.7" fill="#fff4e0" fill-opacity="0.3476234282201572"/>
<circle cx="938.7" cy="1002.1" r="1.2" fill="#cfdcff" fill-opacity="0.4113675452822215"/>
<circle cx="1848.6" cy="668.4" r="1" fill="#a8c0f0" fill-opacity="0.5006821581482956"/>
<circle cx="1621.2" cy="992.4" r="0.7" fill="#cfdcff" fill-opacity="0.6473115434439659"/>
<circle cx="2006.6" cy="715.7" r="1" fill="#fff4e0" fill-opacity="0.5977361945076454"/>
<circle cx="2195.9" cy="1441.1" r="1.2" fill="#ffffff" fill-opacity="0.4986214425434038"/>
<circle cx="1088.6" cy="167.1" r="0.8" fill="#f8d0a0" fill-opacity="0.47736057197831594"/>
<circle cx="1544.9" cy="1565.3" r="0.8" fill="#a8c0f0" fill-opacity="0.6849765637945093"/>
<circle cx="876.5" cy="1088.8" r="1" fill="#f8d0a0" fill-opacity="0.32944637727678955"/>
<circle cx="1595.3" cy="1489.8" r="0.7" fill="#fff4e0" fill-opacity="0.6258067490599236"/>
<circle cx="1755.7" cy="487.9" r="1" fill="#ffffff" fill-opacity="0.5138458751991694"/>
<circle cx="1726.5" cy="183.4" r="1" fill="#fff4e0" fill-opacity="0.4256478057088493"/>
<circle cx="1769.5" cy="253.7" r="1" fill="#f8d0a0" fill-opacity="0.38291200444782025"/>
<circle cx="2256.8" cy="803.4" r="1.2" fill="#f8d0a0" fill-opacity="0.5936354275779174"/>
<circle cx="2055.9" cy="566.2" r="0.7" fill="#ffffff" fill-opacity="0.6774646838445891"/>
<circle cx="1422.4" cy="1545.8" r="1" fill="#f8d0a0" fill-opacity="0.6109528453108821"/>
<circle cx="1703.9" cy="799.8" r="1" fill="#a8c0f0" fill-opacity="0.6274175214977091"/>
<circle cx="2107.2" cy="487.4" r="0.7" fill="#fff4e0" fill-opacity="0.45912409404186927"/>
<circle cx="839.5" cy="1581.2" r="0.7" fill="#ffffff" fill-opacity="0.6469577864965423"/>
<circle cx="1148.6" cy="343.3" r="1" fill="#f8d0a0" fill-opacity="0.26158929727130065"/>
<circle cx="1475.4" cy="1391.5" r="0.7" fill="#f8d0a0" fill-opacity="0.43761247551373816"/>
<circle cx="1056.1" cy="430.5" r="0.7" fill="#a8c0f0" fill-opacity="0.4492709131380276"/>
<circle cx="2121.8" cy="272.7" r="1" fill="#ffe0b0" fill-opacity="0.4176228221054725"/>
<circle cx="2080.9" cy="1030.3" r="1.2" fill="#fff4e0" fill-opacity="0.41314695840432847"/>
<circle cx="1733.9" cy="462.2" r="0.8" fill="#cfdcff" fill-opacity="0.3340188435695383"/>
<circle cx="1416.0" cy="1007.8" r="0.8" fill="#cfdcff" fill-opacity="0.43672139820435246"/>
<circle cx="2609.9" cy="979.1" r="0.7" fill="#cfdcff" fill-opacity="0.42962996587625846"/>
<circle cx="2726.4" cy="869.6" r="1" fill="#ffe0b0" fill-opacity="0.6359051108209188"/>
<circle cx="2417.0" cy="1457.1" r="0.8" fill="#ffe0b0" fill-opacity="0.37963095645729883"/>
<circle cx="1924.8" cy="1785.1" r="0.8" fill="#ffffff" fill-opacity="0.2913128759148093"/>
<circle cx="1465.7" cy="1727.5" r="0.7" fill="#f8d0a0" fill-opacity="0.3146041994459575"/>
<circle cx="2214.8" cy="1713.2" r="1" fill="#fff4e0" fill-opacity="0.548851417659752"/>
<circle cx="1059.2" cy="1854.2" r="1.2" fill="#fff4e0" fill-opacity="0.6258109656640227"/>
<circle cx="871.6" cy="1264.3" r="0.7" fill="#a8c0f0" fill-opacity="0.5194953902805186"/>
<circle cx="2550.3" cy="887.5" r="1.2" fill="#a8c0f0" fill-opacity="0.6511862890953225"/>
<circle cx="1042.6" cy="1468.0" r="1.2" fill="#fff4e0" fill-opacity="0.4353463164231341"/>
<circle cx="810.2" cy="1408.9" r="0.8" fill="#ffffff" fill-opacity="0.48837801842099143"/>
<circle cx="695.7" cy="1819.9" r="1.2" fill="#f8d0a0" fill-opacity="0.6533360901094327"/>
<circle cx="655.1" cy="1032.1" r="0.7" fill="#f8d0a0" fill-opacity="0.6131669545085439"/>
<circle cx="1242.8" cy="240.4" r="0.8" fill="#fff4e0" fill-opacity="0.4649250121955364"/>
<circle cx="2540.8" cy="128.6" r="1" fill="#f8d0a0" fill-opacity="0.26684582093869214"/>
<circle cx="2915.8" cy="460.3" r="0.7" fill="#a8c0f0" fill-opacity="0.5928971512279511"/>
<circle cx="994.6" cy="1423.8" r="0.7" fill="#a8c0f0" fill-opacity="0.3057673606699867"/>
<circle cx="1469.2" cy="256.6" r="1" fill="#fff4e0" fill-opacity="0.40573785453753813"/>
<circle cx="2391.3" cy="970.6" r="1.2" fill="#ffffff" fill-opacity="0.32702029736735194"/>
<circle cx="2824.0" cy="1673.1" r="1.2" fill="#a8c0f0" fill-opacity="0.4870966190151679"/>
<circle cx="1015.2" cy="670.1" r="0.8" fill="#a8c0f0" fill-opacity="0.33823073692846123"/>
<circle cx="2090.1" cy="676.2" r="1" fill="#f8d0a0" fill-opacity="0.6713108235766296"/>
<circle cx="1480.2" cy="738.5" r="1" fill="#f8d0a0" fill-opacity="0.40849749955876397"/>
<circle cx="2988.8" cy="1723.9" r="1" fill="#f8d0a0" fill-opacity="0.5746765027203979"/>
<circle cx="2017.7" cy="354.0" r="1" fill="#ffffff" fill-opacity="0.3172057027691596"/>
<circle cx="2576.3" cy="575.5" r="0.7" fill="#ffe0b0" fill-opacity="0.2529076771038628"/>
<circle cx="1848.9" cy="1085.0" r="0.7" fill="#f8d0a0" fill-opacity="0.3199429528178008"/>
<circle cx="2807.5" cy="1332.4" r="1" fill="#fff4e0" fill-opacity="0.32267416569754764"/>
<circle cx="1732.2" cy="1191.0" r="0.7" fill="#a8c0f0" fill-opacity="0.6852198155298717"/>
<circle cx="1249.2" cy="1425.6" r="0.7" fill="#a8c0f0" fill-opacity="0.4835105049041022"/>
<circle cx="1802.2" cy="1281.4" r="1" fill="#f8d0a0" fill-opacity="0.6594032697388279"/>
<circle cx="2110.7" cy="236.0" r="1" fill="#fff4e0" fill-opacity="0.38696188121170505"/>
<circle cx="2325.6" cy="1612.6" r="0.7" fill="#ffffff" fill-opacity="0.6120902737721367"/>
<circle cx="1222.6" cy="163.7" r="1.2" fill="#a8c0f0" fill-opacity="0.3377488919313599"/>
<circle cx="1558.7" cy="1761.1" r="1" fill="#f8d0a0" fill-opacity="0.3253689559602415"/>
<circle cx="1877.5" cy="1800.9" r="1.2" fill="#cfdcff" fill-opacity="0.48301324195057543"/>
<circle cx="1907.0" cy="1773.7" r="1" fill="#fff4e0" fill-opacity="0.6307416696315866"/>
<circle cx="2291.7" cy="1312.6" r="1.2" fill="#a8c0f0" fill-opacity="0.5079141384460918"/>
<circle cx="2216.8" cy="121.8" r="1" fill="#ffe0b0" fill-opacity="0.6863732531412862"/>
<circle cx="1101.8" cy="926.1" r="0.7" fill="#ffe0b0" fill-opacity="0.3647475820375608"/>
<circle cx="2598.3" cy="166.3" r="1.2" fill="#cfdcff" fill-opacity="0.6406516600953415"/>
<circle cx="1226.2" cy="1737.3" r="1" fill="#f8d0a0" fill-opacity="0.4526609528753991"/>
<circle cx="2904.8" cy="1060.8" r="0.7" fill="#ffffff" fill-opacity="0.28933172525571665"/>
<circle cx="2358.0" cy="831.6" r="0.7" fill="#fff4e0" fill-opacity="0.5017238473960152"/>
<circle cx="2155.8" cy="1484.7" r="1" fill="#f8d0a0" fill-opacity="0.6559902677995271"/>
<circle cx="2361.6" cy="181.7" r="0.7" fill="#f8d0a0" fill-opacity="0.3599387776910557"/>
<circle cx="2675.5" cy="507.4" r="1" fill="#a8c0f0" fill-opacity="0.4473398655905638"/>
<circle cx="1033.0" cy="270.1" r="1" fill="#ffffff" fill-opacity="0.25648980774427976"/>
<circle cx="712.4" cy="895.3" r="0.8" fill="#ffe0b0" fill-opacity="0.6500045954241567"/>
<circle cx="915.5" cy="1418.8" r="1" fill="#f8d0a0" fill-opacity="0.5090709779146085"/>
<circle cx="730.4" cy="1045.8" r="1.2" fill="#f8d0a0" fill-opacity="0.36685065129194705"/>
<circle cx="2915.9" cy="650.8" r="1" fill="#ffe0b0" fill-opacity="0.6873907699686321"/>
<circle cx="2759.8" cy="1436.3" r="0.7" fill="#fff4e0" fill-opacity="0.5591045595380604"/>
<circle cx="2844.6" cy="1138.6" r="0.7" fill="#ffe0b0" fill-opacity="0.5191376683569032"/>
<circle cx="2505.8" cy="1466.5" r="0.7" fill="#ffffff" fill-opacity="0.4652757446923244"/>
<circle cx="1254.4" cy="1171.7" r="1" fill="#ffe0b0" fill-opacity="0.4551397681914916"/>
<circle cx="1905.7" cy="1137.4" r="1" fill="#ffe0b0" fill-opacity="0.3771866911923668"/>
<circle cx="2779.9" cy="1221.6" r="1.2" fill="#ffffff" fill-opacity="0.6637894247347429"/>
<circle cx="908.7" cy="738.7" r="1.2" fill="#ffe0b0" fill-opacity="0.69663502223465"/>
<circle cx="1338.9" cy="225.3" r="0.8" fill="#fff4e0" fill-opacity="0.4760840046732423"/>
<circle cx="641.0" cy="552.3" r="1" fill="#f8d0a0" fill-opacity="0.5567597247145281"/>
<circle cx="978.1" cy="324.3" r="1" fill="#ffffff" fill-opacity="0.3117715053633432"/>
<circle cx="2295.5" cy="1632.2" r="1.2" fill="#ffffff" fill-opacity="0.5189169743060528"/>
<circle cx="1795.8" cy="522.8" r="1.2" fill="#ffe0b0" fill-opacity="0.2996362486408685"/>
<circle cx="1574.5" cy="933.5" r="0.7" fill="#ffe0b0" fill-opacity="0.3495958861482111"/>
<circle cx="2819.0" cy="1427.2" r="0.7" fill="#f8d0a0" fill-opacity="0.29249241158990835"/>
<circle cx="2168.1" cy="364.2" r="1" fill="#a8c0f0" fill-opacity="0.46807077865418545"/>
<circle cx="1571.6" cy="1796.5" r="1" fill="#a8c0f0" fill-opacity="0.5437086486144267"/>
<circle cx="2584.2" cy="410.2" r="1" fill="#f8d0a0" fill-opacity="0.6007073245056812"/>
<circle cx="1850.2" cy="1141.2" r="1" fill="#a8c0f0" fill-opacity="0.5899451773482463"/>
<circle cx="1894.1" cy="594.5" r="1.2" fill="#fff4e0" fill-opacity="0.4559869971291364"/>
<circle cx="1551.2" cy="1269.5" r="0.8" fill="#fff4e0" fill-opacity="0.4877743674720114"/>
<circle cx="2307.4" cy="1348.5" r="0.7" fill="#cfdcff" fill-opacity="0.6572284909280414"/>
<circle cx="2918.7" cy="908.3" r="0.7" fill="#f8d0a0" fill-opacity="0.25381511973482834"/>
<circle cx="709.3" cy="858.4" r="1" fill="#cfdcff" fill-opacity="0.3911140213075107"/>
<circle cx="1461.0" cy="967.5" r="1" fill="#cfdcff" fill-opacity="0.6990274351853963"/>
<circle cx="2380.5" cy="757.8" r="1.2" fill="#ffe0b0" fill-opacity="0.3218274879947769"/>
<circle cx="2126.6" cy="1784.9" r="1" fill="#f8d0a0" fill-opacity="0.6448372941422049"/>
<circle cx="2549.0" cy="668.3" r="0.8" fill="#cfdcff" fill-opacity="0.6128854440166092"/>
<circle cx="1609.6" cy="721.3" r="1" fill="#a8c0f0" fill-opacity="0.43641171233639914"/>
<circle cx="1550.2" cy="987.8" r="1" fill="#fff4e0" fill-opacity="0.654681494952441"/>
<circle cx="942.8" cy="207.5" r="1" fill="#ffe0b0" fill-opacity="0.6614800861460051"/>
<circle cx="2214.0" cy="970.8" r="1" fill="#fff4e0" fill-opacity="0.36113104852441547"/>
<circle cx="2263.8" cy="682.4" r="0.7" fill="#fff4e0" fill-opacity="0.5893415232923975"/>
<circle cx="2729.4" cy="622.6" r="1" fill="#fff4e0" fill-opacity="0.5633747315578075"/>
<circle cx="958.2" cy="1798.6" r="0.7" fill="#f8d0a0" fill-opacity="0.35334634164876955"/>
<circle cx="800.4" cy="1622.4" r="0.8" fill="#f8d0a0" fill-opacity="0.5162955234945057"/>
<circle cx="792.3" cy="1806.7" r="0.8" fill="#fff4e0" fill-opacity="0.3623351421845723"/>
<circle cx="783.3" cy="1593.6" r="0.7" fill="#fff4e0" fill-opacity="0.33475727799090726"/>
<circle cx="1025.3" cy="1717.3" r="0.7" fill="#ffe0b0" fill-opacity="0.31880238605207667"/>
<circle cx="766.2" cy="1272.0" r="0.7" fill="#cfdcff" fill-opacity="0.5296908044256199"/>
<circle cx="1334.5" cy="1586.9" r="0.7" fill="#f8d0a0" fill-opacity="0.3791113958455594"/>
<circle cx="2754.6" cy="1417.9" r="0.7" fill="#ffffff" fill-opacity="0.4975420312989207"/>
<circle cx="909.1" cy="1396.3" r="0.8" fill="#cfdcff" fill-opacity="0.3756783858686924"/>
<circle cx="1115.9" cy="1596.1" r="0.7" fill="#fff4e0" fill-opacity="0.3065716562906631"/>
<circle cx="2479.2" cy="1143.0" r="1" fill="#fff4e0" fill-opacity="0.5940742737971154"/>
<circle cx="2343.2" cy="1304.3" r="0.8" fill="#ffe0b0" fill-opacity="0.26929743262749867"/>
<circle cx="2152.9" cy="1323.1" r="0.7" fill="#fff4e0" fill-opacity="0.6272955690273195"/>
<circle cx="2775.6" cy="740.6" r="1.2" fill="#fff4e0" fill-opacity="0.5429556342790957"/>
<circle cx="2844.3" cy="1244.5" r="1.2" fill="#cfdcff" fill-opacity="0.5959755625323435"/>
<circle cx="1789.5" cy="166.4" r="1.2" fill="#cfdcff" fill-opacity="0.43624622444388406"/>
<circle cx="1415.1" cy="798.0" r="0.8" fill="#ffe0b0" fill-opacity="0.6090527254058626"/>
<circle cx="1125.5" cy="1295.4" r="0.8" fill="#f8d0a0" fill-opacity="0.30647230847633655"/>
<circle cx="1852.2" cy="1410.3" r="1" fill="#cfdcff" fill-opacity="0.32557679088915636"/>
<circle cx="2929.0" cy="1174.0" r="0.7" fill="#ffe0b0" fill-opacity="0.6297492582417301"/>
<circle cx="677.5" cy="428.5" r="1" fill="#a8c0f0" fill-opacity="0.3156868654490718"/>
<circle cx="1940.8" cy="1126.5" r="1.2" fill="#fff4e0" fill-opacity="0.6150649413341267"/>
<circle cx="954.5" cy="1108.7" r="0.8" fill="#fff4e0" fill-opacity="0.6694681602791022"/>
<circle cx="1246.2" cy="1467.9" r="1.2" fill="#ffe0b0" fill-opacity="0.6698505876144832"/>
<circle cx="3022.8" cy="640.9" r="1" fill="#ffffff" fill-opacity="0.3842689920121811"/>
<circle cx="738.3" cy="1784.5" r="1" fill="#f8d0a0" fill-opacity="0.6564912273239001"/>
<circle cx="1286.4" cy="1372.7" r="0.7" fill="#ffffff" fill-opacity="0.6542539144258726"/>
<circle cx="2036.4" cy="1694.8" r="1.2" fill="#ffe0b0" fill-opacity="0.4870903931110235"/>
<circle cx="2552.5" cy="418.5" r="1" fill="#fff4e0" fill-opacity="0.5681907315388324"/>
<circle cx="2871.2" cy="1085.3" r="1" fill="#cfdcff" fill-opacity="0.5810491822353145"/>
<circle cx="2501.8" cy="247.2" r="0.7" fill="#ffffff" fill-opacity="0.302056745510379"/>
<circle cx="2862.6" cy="435.4" r="1" fill="#f8d0a0" fill-opacity="0.48668961111974013"/>
<circle cx="1875.2" cy="162.3" r="0.7" fill="#fff4e0" fill-opacity="0.5544920190205559"/>
<circle cx="1583.6" cy="270.2" r="1" fill="#a8c0f0" fill-opacity="0.4175997473947721"/>
<circle cx="3022.9" cy="192.8" r="0.8" fill="#ffffff" fill-opacity="0.2836154067161292"/>
<circle cx="1938.0" cy="1788.0" r="1" fill="#ffffff" fill-opacity="0.35822254562982253"/>
<circle cx="1851.6" cy="1740.4" r="1" fill="#a8c0f0" fill-opacity="0.2610995327819863"/>
<circle cx="1737.2" cy="1344.1" r="1" fill="#f8d0a0" fill-opacity="0.49857235715074943"/>
<circle cx="739.0" cy="797.5" r="1" fill="#fff4e0" fill-opacity="0.6940890151820044"/>
<circle cx="1569.9" cy="993.4" r="1" fill="#cfdcff" fill-opacity="0.5813845936600525"/>
<circle cx="1526.6" cy="1353.2" r="0.8" fill="#fff4e0" fill-opacity="0.5276737209702476"/>
<circle cx="642.6" cy="445.6" r="0.8" fill="#ffe0b0" fill-opacity="0.40844643464757646"/>
<circle cx="2390.2" cy="145.4" r="0.7" fill="#ffffff" fill-opacity="0.6776766259798483"/>
<circle cx="2900.6" cy="1183.2" r="0.7" fill="#f8d0a0" fill-opacity="0.4515428981098973"/>
<circle cx="2675.2" cy="169.9" r="1" fill="#ffe0b0" fill-opacity="0.31717710498314866"/>
<circle cx="805.6" cy="1023.4" r="1.2" fill="#f8d0a0" fill-opacity="0.5593156508214119"/>
<circle cx="1037.4" cy="1101.6" r="0.8" fill="#ffe0b0" fill-opacity="0.3339197581178069"/>
<circle cx="1411.6" cy="1426.1" r="1" fill="#cfdcff" fill-opacity="0.677268330457828"/>
<circle cx="2112.2" cy="518.7" r="1.2" fill="#ffe0b0" fill-opacity="0.6017690172650938"/>
<circle cx="2846.1" cy="944.2" r="1.2" fill="#cfdcff" fill-opacity="0.5033814115029827"/>
<circle cx="2777.1" cy="1676.3" r="1" fill="#cfdcff" fill-opacity="0.3596826914864987"/>
<circle cx="1969.3" cy="653.9" r="0.7" fill="#cfdcff" fill-opacity="0.5365152498941075"/>
<circle cx="1424.5" cy="843.4" r="1.2" fill="#fff4e0" fill-opacity="0.6920737400091383"/>
<circle cx="3008.3" cy="733.4" r="1.2" fill="#fff4e0" fill-opacity="0.48675304038653705"/>
<circle cx="1967.9" cy="454.2" r="1" fill="#ffe0b0" fill-opacity="0.5929333298624214"/>
<circle cx="2834.9" cy="1198.9" r="0.7" fill="#f8d0a0" fill-opacity="0.3454521112811943"/>
<circle cx="2027.0" cy="1271.8" r="0.7" fill="#fff4e0" fill-opacity="0.6671441062633686"/>
<circle cx="2854.8" cy="1358.2" r="1" fill="#ffe0b0" fill-opacity="0.27700066431706677"/>
<circle cx="2073.1" cy="508.1" r="0.8" fill="#fff4e0" fill-opacity="0.5366150628488012"/>
<circle cx="2843.4" cy="132.8" r="1.2" fill="#ffffff" fill-opacity="0.46912085519337504"/>
<circle cx="1623.7" cy="128.4" r="1" fill="#cfdcff" fill-opacity="0.48549929090045235"/>
<circle cx="1415.8" cy="1846.6" r="1" fill="#a8c0f0" fill-opacity="0.6305367885645113"/>
<circle cx="2565.6" cy="1497.8" r="1" fill="#ffe0b0" fill-opacity="0.4747329960719861"/>
<circle cx="2645.5" cy="314.5" r="0.8" fill="#ffffff" fill-opacity="0.555897474073783"/>
<circle cx="885.2" cy="1221.7" r="1.2" fill="#a8c0f0" fill-opacity="0.4326622176935615"/>
<circle cx="1804.3" cy="292.5" r="1" fill="#f8d0a0" fill-opacity="0.5239042783194139"/>
<circle cx="2092.4" cy="1742.1" r="1" fill="#fff4e0" fill-opacity="0.37290163833459744"/>
<circle cx="1492.6" cy="417.6" r="1" fill="#ffe0b0" fill-opacity="0.4012932335555477"/>
<circle cx="2852.4" cy="142.0" r="0.8" fill="#ffffff" fill-opacity="0.38941548694291384"/>
<circle cx="2656.5" cy="287.6" r="1.2" fill="#fff4e0" fill-opacity="0.6127030444210095"/>
<circle cx="726.4" cy="953.5" r="0.8" fill="#fff4e0" fill-opacity="0.30486805028915986"/>
<circle cx="1192.3" cy="1394.0" r="1.2" fill="#f8d0a0" fill-opacity="0.3086941196940886"/>
<circle cx="1295.3" cy="224.4" r="1" fill="#ffffff" fill-opacity="0.6825901640087432"/>
<circle cx="2970.9" cy="470.3" r="1" fill="#fff4e0" fill-opacity="0.3864115601978174"/>
<circle cx="1732.5" cy="1761.8" r="0.8" fill="#f8d0a0" fill-opacity="0.27269495942900795"/>
<circle cx="2870.3" cy="1763.6" r="0.7" fill="#ffffff" fill-opacity="0.647772875940575"/>
<circle cx="860.8" cy="1189.0" r="0.8" fill="#cfdcff" fill-opacity="0.2608680455199345"/>
<circle cx="749.9" cy="549.7" r="0.8" fill="#f8d0a0" fill-opacity="0.6707954262796996"/>
<circle cx="1798.5" cy="1854.7" r="1" fill="#ffe0b0" fill-opacity="0.2965638870261673"/>
<circle cx="2834.1" cy="220.3" r="0.7" fill="#a8c0f0" fill-opacity="0.568626528806902"/>
<circle cx="1843.2" cy="525.1" r="0.7" fill="#f8d0a0" fill-opacity="0.4108916111296649"/>
<circle cx="971.2" cy="1098.4" r="1" fill="#cfdcff" fill-opacity="0.46116557870891295"/>
<circle cx="626.5" cy="305.5" r="1" fill="#ffe0b0" fill-opacity="0.4032379097809802"/>
<circle cx="1470.1" cy="1285.5" r="1.2" fill="#cfdcff" fill-opacity="0.36454348938972736"/>
<circle cx="2323.4" cy="510.8" r="1" fill="#ffffff" fill-opacity="0.6479789866085588"/>
<circle cx="1325.2" cy="1352.4" r="0.8" fill="#fff4e0" fill-opacity="0.25354342668009167"/>
<circle cx="2262.2" cy="1466.0" r="1" fill="#cfdcff" fill-opacity="0.6977402357618565"/>
<circle cx="2344.1" cy="670.1" r="0.8" fill="#cfdcff" fill-opacity="0.6603170667481899"/>
<circle cx="1655.2" cy="588.4" r="1" fill="#a8c0f0" fill-opacity="0.48785247220103156"/>
<circle cx="1879.9" cy="623.5" r="0.7" fill="#a8c0f0" fill-opacity="0.5013343261399393"/>
<circle cx="2815.5" cy="271.5" r="1" fill="#ffffff" fill-opacity="0.31338003619140803"/>
<circle cx="2889.0" cy="545.8" r="1" fill="#f8d0a0" fill-opacity="0.32620705740453576"/>
<circle cx="2947.8" cy="938.0" r="1" fill="#ffffff" fill-opacity="0.46880520681358084"/>
<circle cx="2076.6" cy="1484.1" r="1" fill="#a8c0f0" fill-opacity="0.4992582721909948"/>
<circle cx="1412.3" cy="512.8" r="0.8" fill="#a8c0f0" fill-opacity="0.6047951550173896"/>
<circle cx="1651.1" cy="378.1" r="0.7" fill="#ffe0b0" fill-opacity="0.3705886905220183"/>
<circle cx="1609.2" cy="1831.2" r="1" fill="#ffffff" fill-opacity="0.4856947392210597"/>
<circle cx="2497.8" cy="210.3" r="1.2" fill="#a8c0f0" fill-opacity="0.5056519930426238"/>
<circle cx="2341.5" cy="707.0" r="1.2" fill="#a8c0f0" fill-opacity="0.5812182843153912"/>
<circle cx="1527.5" cy="1300.5" r="0.7" fill="#ffe0b0" fill-opacity="0.3235510981587336"/>
<circle cx="2148.5" cy="776.1" r="1" fill="#ffe0b0" fill-opacity="0.42747830172355744"/>
<circle cx="2097.3" cy="932.6" r="1" fill="#fff4e0" fill-opacity="0.47635964894566435"/>
<circle cx="2371.8" cy="829.8" r="0.7" fill="#ffe0b0" fill-opacity="0.42350861978904264"/>
<circle cx="1987.1" cy="267.0" r="0.8" fill="#f8d0a0" fill-opacity="0.6452737007780107"/>
<circle cx="1371.8" cy="230.0" r="1" fill="#a8c0f0" fill-opacity="0.31667782573661707"/>
<circle cx="1155.3" cy="346.9" r="1.2" fill="#ffe0b0" fill-opacity="0.5596468463066999"/>
<circle cx="1857.3" cy="1420.3" r="1.2" fill="#a8c0f0" fill-opacity="0.2876295867400061"/>
<circle cx="2193.1" cy="954.7" r="1" fill="#cfdcff" fill-opacity="0.40821881472442895"/>
<circle cx="2661.1" cy="511.0" r="1.2" fill="#ffffff" fill-opacity="0.4732307942301557"/>
<circle cx="1002.2" cy="1136.1" r="1" fill="#ffe0b0" fill-opacity="0.2998071201406538"/>
<circle cx="1723.6" cy="482.1" r="1" fill="#ffffff" fill-opacity="0.3820774545648146"/>
<circle cx="1550.1" cy="1193.2" r="1" fill="#ffe0b0" fill-opacity="0.2817289051424011"/>
<circle cx="713.9" cy="1139.0" r="0.8" fill="#cfdcff" fill-opacity="0.3080966216660059"/>
<circle cx="1148.3" cy="407.9" r="1" fill="#ffe0b0" fill-opacity="0.5130473718305495"/>
<circle cx="1882.0" cy="1848.9" r="0.7" fill="#ffffff" fill-opacity="0.30045034137507526"/>
<circle cx="1354.0" cy="342.9" r="1" fill="#fff4e0" fill-opacity="0.413590336653489"/>
<circle cx="2364.1" cy="1799.3" r="0.7" fill="#cfdcff" fill-opacity="0.564741394962651"/>
<circle cx="2870.5" cy="933.9" r="0.8" fill="#ffffff" fill-opacity="0.6482748909039509"/>
<circle cx="943.1" cy="399.3" r="0.7" fill="#ffffff" fill-opacity="0.5830035938197937"/>
<circle cx="1318.2" cy="297.0" r="1" fill="#ffe0b0" fill-opacity="0.3926108807421336"/>
<circle cx="1311.7" cy="272.9" r="1.2" fill="#ffe0b0" fill-opacity="0.4147148230247617"/>
<circle cx="1400.1" cy="1528.2" r="1" fill="#ffe0b0" fill-opacity="0.6060788176912391"/>
<circle cx="1085.6" cy="1360.8" r="1.2" fill="#cfdcff" fill-opacity="0.4617213129241627"/>
<circle cx="2557.4" cy="372.0" r="1" fill="#fff4e0" fill-opacity="0.6347645397690189"/>
<circle cx="1573.2" cy="846.8" r="1" fill="#ffe0b0" fill-opacity="0.5671349352114885"/>
<circle cx="2605.9" cy="1715.7" r="1.2" fill="#cfdcff" fill-opacity="0.33119736688700663"/>
<circle cx="1432.7" cy="651.0" r="0.7" fill="#fff4e0" fill-opacity="0.6969067727532272"/>
<circle cx="1348.1" cy="1738.1" r="0.7" fill="#a8c0f0" fill-opacity="0.4119232576777811"/>
<circle cx="2500.6" cy="1285.6" r="1" fill="#cfdcff" fill-opacity="0.61094223887544"/>
<circle cx="980.3" cy="1101.2" r="1" fill="#f8d0a0" fill-opacity="0.3221798968445312"/>
<circle cx="1630.9" cy="657.3" r="1.2" fill="#cfdcff" fill-opacity="0.5556981465314171"/>
<circle cx="2768.2" cy="945.5" r="1.2" fill="#fff4e0" fill-opacity="0.4190163422852762"/>
<circle cx="2234.3" cy="768.7" r="0.7" fill="#cfdcff" fill-opacity="0.6779633038348507"/>
<circle cx="2682.8" cy="1670.1" r="1.2" fill="#ffffff" fill-opacity="0.5900305889205031"/>
<circle cx="1290.9" cy="1014.3" r="1.2" fill="#fff4e0" fill-opacity="0.6989425838941263"/>
<circle cx="2353.5" cy="1365.5" r="1" fill="#cfdcff" fill-opacity="0.528409329824632"/>
<circle cx="1075.2" cy="1061.2" r="0.8" fill="#a8c0f0" fill-opacity="0.6393743488782633"/>
<circle cx="2073.3" cy="917.3" r="1" fill="#cfdcff" fill-opacity="0.6121209770879552"/>
<circle cx="1641.9" cy="959.4" r="0.8" fill="#a8c0f0" fill-opacity="0.6587700179991086"/>
<circle cx="1033.4" cy="1457.2" r="1" fill="#f8d0a0" fill-opacity="0.5188220440878868"/>
<circle cx="1966.6" cy="1402.1" r="1" fill="#f8d0a0" fill-opacity="0.5550540658665397"/>
<circle cx="1498.5" cy="1476.6" r="1" fill="#f8d0a0" fill-opacity="0.5394923469779738"/>
<circle cx="3015.6" cy="598.9" r="0.7" fill="#ffe0b0" fill-opacity="0.6530286763577628"/>
<circle cx="1874.2" cy="1238.4" r="1" fill="#cfdcff" fill-opacity="0.6942738303954096"/>
<circle cx="1548.9" cy="1379.3" r="0.8" fill="#ffe0b0" fill-opacity="0.613003986991457"/>
<circle cx="1302.7" cy="1720.1" r="0.8" fill="#cfdcff" fill-opacity="0.3420719771200522"/>
<circle cx="2217.6" cy="428.4" r="0.7" fill="#f8d0a0" fill-opacity="0.4787080454752116"/>
<circle cx="1948.5" cy="1752.8" r="0.8" fill="#cfdcff" fill-opacity="0.6564716821510759"/>
<circle cx="2510.3" cy="1444.5" r="0.7" fill="#f8d0a0" fill-opacity="0.5389863239622684"/>
<circle cx="1686.1" cy="1228.2" r="0.8" fill="#ffffff" fill-opacity="0.5908125393893706"/>
<circle cx="2307.5" cy="600.1" r="0.7" fill="#f8d0a0" fill-opacity="0.2734518386148317"/>
<circle cx="2348.2" cy="1160.9" r="1" fill="#a8c0f0" fill-opacity="0.33554453281515517"/>
<circle cx="2161.7" cy="452.1" r="1.2" fill="#ffffff" fill-opacity="0.49818768250734347"/>
<circle cx="2007.7" cy="1307.2" r="1.2" fill="#a8c0f0" fill-opacity="0.6581853452378047"/>
<circle cx="625.2" cy="1802.0" r="1.2" fill="#f8d0a0" fill-opacity="0.43329536585926376"/>
<circle cx="2799.6" cy="1674.3" r="1.2" fill="#fff4e0" fill-opacity="0.2543250648021512"/>
<circle cx="2112.8" cy="829.5" r="1.2" fill="#fff4e0" fill-opacity="0.4661052981763004"/>
<circle cx="1121.8" cy="450.1" r="0.7" fill="#ffffff" fill-opacity="0.6075393102911898"/>
<circle cx="1337.6" cy="663.1" r="0.8" fill="#cfdcff" fill-opacity="0.38006257510675096"/>
<circle cx="1506.7" cy="1227.8" r="1" fill="#a8c0f0" fill-opacity="0.49073549149668944"/>
<circle cx="1308.8" cy="850.7" r="1" fill="#a8c0f0" fill-opacity="0.29723724842250004"/>
<circle cx="2650.7" cy="668.6" r="1" fill="#ffffff" fill-opacity="0.373383331049628"/>
<circle cx="981.2" cy="281.0" r="1" fill="#cfdcff" fill-opacity="0.5708790684123617"/>
<circle cx="2859.9" cy="1629.7" r="0.7" fill="#a8c0f0" fill-opacity="0.4539941948867341"/>
<circle cx="1367.8" cy="991.6" r="1" fill="#cfdcff" fill-opacity="0.6679040828835487"/>
<circle cx="2522.1" cy="1667.9" r="1.2" fill="#a8c0f0" fill-opacity="0.49076550814351183"/>
<circle cx="1438.6" cy="696.7" r="1" fill="#fff4e0" fill-opacity="0.2873471700374243"/>
<circle cx="2819.3" cy="1376.7" r="1" fill="#fff4e0" fill-opacity="0.37781545407566536"/>
<circle cx="2003.2" cy="1460.7" r="0.7" fill="#f8d0a0" fill-opacity="0.4688871505813268"/>
<circle cx="1057.8" cy="1239.0" r="0.8" fill="#cfdcff" fill-opacity="0.35375962817747647"/>
<circle cx="1337.5" cy="682.9" r="1" fill="#cfdcff" fill-opacity="0.669042337356131"/>
<circle cx="2349.8" cy="1381.2" r="1" fill="#ffffff" fill-opacity="0.6013012474585802"/>
<circle cx="1881.1" cy="1446.0" r="1" fill="#f8d0a0" fill-opacity="0.4693104364770513"/>
<circle cx="729.9" cy="1316.2" r="1.2" fill="#cfdcff" fill-opacity="0.6104031278953408"/>
<circle cx="2349.9" cy="1409.8" r="1" fill="#cfdcff" fill-opacity="0.36290541684564015"/>
<circle cx="2050.6" cy="195.1" r="0.8" fill="#cfdcff" fill-opacity="0.6416517023936505"/>
<circle cx="2818.5" cy="1766.5" r="0.7" fill="#ffffff" fill-opacity="0.5182429797543553"/>
<circle cx="2932.4" cy="1778.9" r="1" fill="#cfdcff" fill-opacity="0.6923696785571072"/>
<circle cx="850.2" cy="1176.3" r="0.8" fill="#f8d0a0" fill-opacity="0.6370847259767155"/>
<circle cx="816.9" cy="1633.1" r="0.7" fill="#a8c0f0" fill-opacity="0.3638007521744304"/>
<circle cx="1825.7" cy="1059.0" r="1.2" fill="#ffffff" fill-opacity="0.35354239691425976"/>
<circle cx="1061.0" cy="1532.1" r="0.7" fill="#ffffff" fill-opacity="0.5004084070818198"/>
<circle cx="2395.7" cy="1402.3" r="1.2" fill="#a8c0f0" fill-opacity="0.661365332577546"/>
<circle cx="739.3" cy="691.4" r="0.8" fill="#a8c0f0" fill-opacity="0.5362737687089827"/>
<circle cx="1135.2" cy="158.5" r="0.8" fill="#fff4e0" fill-opacity="0.6893177221947074"/>
<circle cx="1367.7" cy="703.9" r="1.2" fill="#ffffff" fill-opacity="0.6369832812823928"/>
<circle cx="2431.5" cy="747.7" r="0.7" fill="#ffffff" fill-opacity="0.3179181619059661"/>
<circle cx="1574.0" cy="400.4" r="1" fill="#fff4e0" fill-opacity="0.30189342447196194"/>
<circle cx="1849.4" cy="1845.4" r="1.2" fill="#ffffff" fill-opacity="0.6660838960433961"/>
<circle cx="2912.7" cy="354.2" r="1" fill="#fff4e0" fill-opacity="0.5200432436482436"/>
<circle cx="1943.8" cy="311.8" r="1" fill="#cfdcff" fill-opacity="0.2649214087448165"/>
<circle cx="1788.2" cy="340.9" r="0.7" fill="#ffe0b0" fill-opacity="0.29477137263208747"/>
<circle cx="1221.9" cy="1007.1" r="0.8" fill="#ffe0b0" fill-opacity="0.34428444585644835"/>
<circle cx="2195.7" cy="510.3" r="0.7" fill="#cfdcff" fill-opacity="0.48311473874334165"/>
<circle cx="2404.0" cy="604.7" r="0.8" fill="#cfdcff" fill-opacity="0.6647439717335091"/>
<circle cx="1822.2" cy="1151.1" r="1" fill="#ffffff" fill-opacity="0.5593709390955514"/>
<circle cx="926.7" cy="203.1" r="1" fill="#cfdcff" fill-opacity="0.3031491081609923"/>
<circle cx="1383.1" cy="602.4" r="0.7" fill="#cfdcff" fill-opacity="0.4998948314124789"/>
<circle cx="886.1" cy="892.2" r="0.7" fill="#a8c0f0" fill-opacity="0.42878195712547496"/>
<circle cx="1028.7" cy="1511.7" r="1" fill="#ffffff" fill-opacity="0.387660725003971"/>
<circle cx="2637.1" cy="659.1" r="1" fill="#cfdcff" fill-opacity="0.3452229797689829"/>
<circle cx="2473.9" cy="1617.7" r="0.7" fill="#fff4e0" fill-opacity="0.6612699157889639"/>
<circle cx="2841.2" cy="1081.4" r="1" fill="#f8d0a0" fill-opacity="0.3960598932259218"/>
<circle cx="660.6" cy="1270.9" r="0.7" fill="#a8c0f0" fill-opacity="0.5431202829735713"/>
<circle cx="2892.5" cy="379.3" r="1" fill="#fff4e0" fill-opacity="0.48788012844117173"/>
<circle cx="2302.4" cy="1519.0" r="1" fill="#fff4e0" fill-opacity="0.6380210517987379"/>
<circle cx="825.1" cy="1681.4" r="1.2" fill="#ffe0b0" fill-opacity="0.4335465954144613"/>
<circle cx="2043.1" cy="905.6" r="0.7" fill="#ffe0b0" fill-opacity="0.609310060377802"/>
<circle cx="2696.8" cy="944.7" r="1" fill="#fff4e0" fill-opacity="0.5872496444372315"/>
<circle cx="1924.3" cy="185.6" r="0.8" fill="#ffffff" fill-opacity="0.5428298923491783"/>
<circle cx="886.9" cy="1233.3" r="1" fill="#fff4e0" fill-opacity="0.4243443303239604"/>
<circle cx="2595.1" cy="1578.6" r="0.7" fill="#cfdcff" fill-opacity="0.47750430324102555"/>
<circle cx="884.0" cy="1303.6" r="1.2" fill="#ffffff" fill-opacity="0.5041793693285496"/>
<circle cx="2446.6" cy="1392.9" r="1" fill="#fff4e0" fill-opacity="0.5894628665527331"/>
<circle cx="1709.5" cy="303.9" r="0.8" fill="#a8c0f0" fill-opacity="0.5455983085454699"/>
<circle cx="2980.8" cy="1509.5" r="1" fill="#a8c0f0" fill-opacity="0.6210055399031149"/>
<circle cx="2874.8" cy="1325.7" r="0.7" fill="#f8d0a0" fill-opacity="0.41761198702506996"/>
<circle cx="2307.5" cy="748.6" r="0.8" fill="#a8c0f0" fill-opacity="0.45530392548984233"/>
<circle cx="945.2" cy="938.3" r="0.7" fill="#ffe0b0" fill-opacity="0.5769954403313016"/>
<circle cx="1119.6" cy="1744.7" r="0.7" fill="#fff4e0" fill-opacity="0.5340703277835552"/>
<circle cx="2161.2" cy="456.7" r="1.2" fill="#f8d0a0" fill-opacity="0.4258010735889899"/>
<circle cx="2444.7" cy="1192.3" r="1" fill="#f8d0a0" fill-opacity="0.5559445057785224"/>
<circle cx="2564.2" cy="789.8" r="0.7" fill="#f8d0a0" fill-opacity="0.4651323693720118"/>
<circle cx="1846.2" cy="860.8" r="0.7" fill="#ffffff" fill-opacity="0.5287808182011093"/>
<circle cx="2492.2" cy="1355.7" r="1" fill="#cfdcff" fill-opacity="0.4718148266789965"/>
<circle cx="1627.3" cy="1667.0" r="1" fill="#ffe0b0" fill-opacity="0.33866288256205107"/>
<circle cx="1372.4" cy="243.0" r="1" fill="#ffe0b0" fill-opacity="0.4844685297451359"/>
<circle cx="2425.5" cy="993.3" r="1" fill="#a8c0f0" fill-opacity="0.5053261004916775"/>
<circle cx="709.0" cy="343.9" r="1" fill="#fff4e0" fill-opacity="0.42627700905986143"/>
<circle cx="2430.0" cy="1174.4" r="1" fill="#cfdcff" fill-opacity="0.3343129724249235"/>
<circle cx="1832.7" cy="639.6" r="0.7" fill="#ffe0b0" fill-opacity="0.28291376692035747"/>
<circle cx="1615.0" cy="700.6" r="1" fill="#a8c0f0" fill-opacity="0.29230497130267014"/>
<circle cx="2827.4" cy="1498.7" r="1" fill="#fff4e0" fill-opacity="0.3153655220345155"/>
<circle cx="2953.3" cy="1715.9" r="0.7" fill="#ffe0b0" fill-opacity="0.5610228673674609"/>
<circle cx="1720.4" cy="1033.6" r="0.7" fill="#f8d0a0" fill-opacity="0.4417152758138387"/>
<circle cx="1622.9" cy="1120.9" r="1" fill="#cfdcff" fill-opacity="0.6389139374227721"/>
<circle cx="2449.9" cy="1699.1" r="1.2" fill="#fff4e0" fill-opacity="0.5855921299868212"/>
<circle cx="2900.5" cy="536.4" r="0.8" fill="#ffe0b0" fill-opacity="0.5809862718461518"/>
<circle cx="2464.1" cy="1287.3" r="1.2" fill="#ffffff" fill-opacity="0.6877637817056982"/>
<circle cx="2744.2" cy="1475.8" r="1" fill="#ffe0b0" fill-opacity="0.45620286910520214"/>
<circle cx="2025.0" cy="1516.3" r="1" fill="#fff4e0" fill-opacity="0.654508505255327"/>
<circle cx="1128.5" cy="1019.4" r="0.8" fill="#fff4e0" fill-opacity="0.329366317621391"/>
<circle cx="636.6" cy="1513.5" r="1.2" fill="#cfdcff" fill-opacity="0.4280726867816562"/>
<circle cx="2534.4" cy="1063.1" r="0.7" fill="#cfdcff" fill-opacity="0.39836401435313357"/>
<circle cx="655.3" cy="388.5" r="1" fill="#fff4e0" fill-opacity="0.2985802320257621"/>
<circle cx="963.0" cy="711.6" r="1" fill="#ffffff" fill-opacity="0.684194803644389"/>
<circle cx="2941.3" cy="805.7" r="1" fill="#cfdcff" fill-opacity="0.37507984115154636"/>
<circle cx="1398.5" cy="1024.2" r="1" fill="#ffffff" fill-opacity="0.36371473521757763"/>
<circle cx="2048.1" cy="298.7" r="0.7" fill="#cfdcff" fill-opacity="0.5532570836820014"/>
<circle cx="2096.7" cy="1791.9" r="1" fill="#cfdcff" fill-opacity="0.29446530804924814"/>
<circle cx="2606.2" cy="1114.8" r="0.7" fill="#ffe0b0" fill-opacity="0.6735599747758252"/>
<circle cx="1071.9" cy="1532.1" r="1" fill="#ffffff" fill-opacity="0.35114513239259976"/>
<circle cx="633.7" cy="858.2" r="1.2" fill="#ffffff" fill-opacity="0.3177660242106898"/>
<circle cx="1995.0" cy="483.2" r="1" fill="#cfdcff" fill-opacity="0.4315320508759316"/>
<circle cx="1611.9" cy="1347.6" r="1" fill="#a8c0f0" fill-opacity="0.40980720480444"/>
<circle cx="1823.0" cy="523.5" r="1" fill="#ffe0b0" fill-opacity="0.5864904256055252"/>
<circle cx="1825.1" cy="206.7" r="1" fill="#f8d0a0" fill-opacity="0.27140787768562885"/>
<circle cx="2658.8" cy="928.8" r="0.7" fill="#ffe0b0" fill-opacity="0.303727409856574"/>
<circle cx="2310.0" cy="381.5" r="1" fill="#fff4e0" fill-opacity="0.2927491002769832"/>
<circle cx="1944.6" cy="1061.7" r="1" fill="#a8c0f0" fill-opacity="0.34079984908940353"/>
<circle cx="2408.9" cy="1515.6" r="1" fill="#fff4e0" fill-opacity="0.28332695286922893"/>
<circle cx="3009.7" cy="1258.3" r="1" fill="#cfdcff" fill-opacity="0.45881351005828475"/>
<circle cx="1971.3" cy="1379.8" r="0.8" fill="#ffe0b0" fill-opacity="0.3223009972248201"/>
<circle cx="1434.6" cy="1317.3" r="1" fill="#f8d0a0" fill-opacity="0.6044090394226277"/>
<circle cx="869.0" cy="1227.1" r="1" fill="#cfdcff" fill-opacity="0.5620316545053257"/>
<circle cx="1323.6" cy="435.6" r="1" fill="#f8d0a0" fill-opacity="0.5756036332237016"/>
<circle cx="2327.8" cy="1704.6" r="1" fill="#a8c0f0" fill-opacity="0.2794354278919668"/>
<circle cx="2561.0" cy="557.2" r="1" fill="#cfdcff" fill-opacity="0.4494549479325749"/>
<circle cx="2681.4" cy="1753.7" r="0.7" fill="#a8c0f0" fill-opacity="0.4321284208960111"/>
<circle cx="1353.5" cy="1854.5" r="1.2" fill="#f8d0a0" fill-opacity="0.692352675289171"/>
<circle cx="610.0" cy="809.8" r="1.2" fill="#cfdcff" fill-opacity="0.2742504888616102"/>
<circle cx="2712.0" cy="370.8" r="1.2" fill="#ffe0b0" fill-opacity="0.4831418970361423"/>
<circle cx="2410.5" cy="1589.8" r="1" fill="#fff4e0" fill-opacity="0.44851515963843"/>
<circle cx="2612.4" cy="1440.9" r="0.7" fill="#cfdcff" fill-opacity="0.29785543660068475"/>
<circle cx="1143.9" cy="600.9" r="1" fill="#a8c0f0" fill-opacity="0.47064017620111065"/>
<circle cx="2789.5" cy="285.8" r="1.2" fill="#ffffff" fill-opacity="0.5309112162707794"/>
<circle cx="1227.3" cy="730.0" r="1" fill="#cfdcff" fill-opacity="0.6491690570898437"/>
<circle cx="2484.0" cy="947.7" r="0.7" fill="#fff4e0" fill-opacity="0.4110156465222006"/>
<circle cx="2580.5" cy="868.1" r="1" fill="#a8c0f0" fill-opacity="0.5374742105318593"/>
<circle cx="701.9" cy="1241.8" r="0.7" fill="#fff4e0" fill-opacity="0.4377335209455644"/>
<circle cx="2675.4" cy="567.5" r="1.2" fill="#ffe0b0" fill-opacity="0.40558379929632044"/>
<circle cx="1941.4" cy="792.3" r="1" fill="#fff4e0" fill-opacity="0.666094348795534"/>
<circle cx="2280.3" cy="1854.7" r="1" fill="#fff4e0" fill-opacity="0.459950401831719"/>
<circle cx="1488.6" cy="1624.4" r="1" fill="#a8c0f0" fill-opacity="0.5560224387489369"/>
<circle cx="1032.0" cy="1057.0" r="1" fill="#ffe0b0" fill-opacity="0.47900452448990083"/>
<circle cx="1003.3" cy="769.0" r="0.8" fill="#f8d0a0" fill-opacity="0.289543193719597"/>
<circle cx="2589.9" cy="498.2" r="0.8" fill="#f8d0a0" fill-opacity="0.4279110366723228"/>
<circle cx="927.0" cy="267.6" r="0.7" fill="#ffe0b0" fill-opacity="0.4453699413191906"/>
<circle cx="1168.2" cy="1346.7" r="1" fill="#f8d0a0" fill-opacity="0.5975715671426962"/>
<circle cx="2246.8" cy="1577.1" r="0.7" fill="#cfdcff" fill-opacity="0.397816971167274"/>
<circle cx="641.3" cy="819.2" r="1" fill="#f8d0a0" fill-opacity="0.47528589766030727"/>
<circle cx="714.5" cy="1663.1" r="1" fill="#f8d0a0" fill-opacity="0.5344874848401943"/>
<circle cx="1629.2" cy="342.1" r="1" fill="#cfdcff" fill-opacity="0.6890214477686394"/>
<circle cx="1650.7" cy="1188.2" r="1" fill="#f8d0a0" fill-opacity="0.5535595715332424"/>
<circle cx="1581.3" cy="113.0" r="0.8" fill="#ffffff" fill-opacity="0.4503018768573142"/>
<circle cx="1758.1" cy="1208.3" r="1" fill="#ffffff" fill-opacity="0.667494158419935"/>
<circle cx="2338.2" cy="947.3" r="0.7" fill="#cfdcff" fill-opacity="0.39479278300969534"/>
<circle cx="1749.2" cy="1111.1" r="0.8" fill="#a8c0f0" fill-opacity="0.5405861737890416"/>
<circle cx="2151.0" cy="1830.4" r="0.7" fill="#ffe0b0" fill-opacity="0.5846197068411949"/>
<circle cx="1657.8" cy="515.8" r="0.7" fill="#a8c0f0" fill-opacity="0.613251671763755"/>
<circle cx="1270.4" cy="1411.0" r="0.8" fill="#ffffff" fill-opacity="0.5500373975483035"/>
<circle cx="734.2" cy="919.4" r="1.2" fill="#f8d0a0" fill-opacity="0.44147460049526777"/>
<circle cx="2594.7" cy="1041.8" r="1" fill="#ffe0b0" fill-opacity="0.4731363467714863"/>
<circle cx="1744.9" cy="436.2" r="0.7" fill="#cfdcff" fill-opacity="0.5441671767341"/>
<circle cx="629.1" cy="817.0" r="1" fill="#fff4e0" fill-opacity="0.6260645481008928"/>
<circle cx="1721.0" cy="1538.7" r="2.6" fill="url(#sg)" opacity="0.56"/>
<circle cx="2659.9" cy="425.6" r="3.1" fill="url(#sg)" opacity="0.52"/>
<circle cx="1305.0" cy="1211.3" r="2.7" fill="url(#sg)" opacity="0.51"/>
<circle cx="1407.3" cy="1809.4" r="3.1" fill="url(#sg)" opacity="0.72"/>
<circle cx="1008.6" cy="273.5" r="2.4" fill="url(#sg)" opacity="0.83"/>
<circle cx="2526.8" cy="312.3" r="2.3" fill="url(#sg)" opacity="0.83"/>
<circle cx="2375.2" cy="741.5" r="2.9" fill="url(#sg)" opacity="0.59"/>
<circle cx="1245.9" cy="1475.2" r="2.6" fill="url(#sg)" opacity="0.58"/>
<circle cx="871.6" cy="1332.7" r="2.9" fill="url(#sg)" opacity="0.80"/>
<circle cx="768.0" cy="495.1" r="2.3" fill="url(#sg)" opacity="0.75"/>
<circle cx="942.8" cy="575.8" r="2.6" fill="url(#sg)" opacity="0.52"/>
<circle cx="1536.8" cy="1750.0" r="3.1" fill="url(#sg)" opacity="0.60"/>
<circle cx="1971.4" cy="901.7" r="3.0" fill="url(#sg)" opacity="0.80"/>
<circle cx="2258.4" cy="300.6" r="2.5" fill="url(#sg)" opacity="0.89"/>
<circle cx="712.7" cy="1479.9" r="3.2" fill="url(#sg)" opacity="0.79"/>
<circle cx="1334.0" cy="1062.3" r="2.7" fill="url(#sg)" opacity="0.76"/>
<circle cx="1024.5" cy="1499.3" r="3.1" fill="url(#sg)" opacity="0.61"/>
<circle cx="1654.6" cy="1675.8" r="2.4" fill="url(#sg)" opacity="0.67"/>
<circle cx="2119.3" cy="648.3" r="3.1" fill="url(#sg)" opacity="0.70"/>
<circle cx="1471.1" cy="1807.2" r="2.5" fill="url(#sg)" opacity="0.78"/>
<circle cx="1503.6" cy="621.4" r="2.6" fill="url(#sg)" opacity="0.77"/>
<circle cx="1871.4" cy="1754.6" r="3.0" fill="url(#sg)" opacity="0.71"/>
<circle cx="1198.3" cy="1684.5" r="2.7" fill="url(#sg)" opacity="0.60"/>
<circle cx="2844.9" cy="829.6" r="2.5" fill="url(#sg)" opacity="0.87"/>
<circle cx="3009.1" cy="927.3" r="3.2" fill="url(#sg)" opacity="0.89"/>
<circle cx="2067.5" cy="575.0" r="2.4" fill="url(#sg)" opacity="0.70"/>
<circle cx="1856.5" cy="1437.8" r="2.3" fill="url(#sg)" opacity="0.89"/>
<circle cx="2978.1" cy="295.8" r="2.7" fill="url(#sg)" opacity="0.51"/>
<circle cx="2415.3" cy="342.3" r="2.6" fill="url(#sg)" opacity="0.63"/>
<circle cx="2347.5" cy="775.5" r="2.9" fill="url(#sg)" opacity="0.73"/>
<circle cx="2702.6" cy="445.9" r="2.5" fill="url(#sg)" opacity="0.68"/>
<circle cx="2316.3" cy="911.1" r="2.7" fill="url(#sg)" opacity="0.88"/>
<circle cx="1085.9" cy="145.0" r="2.8" fill="url(#sg)" opacity="0.73"/>
<circle cx="1898.2" cy="1387.8" r="2.6" fill="url(#sg)" opacity="0.67"/>
<circle cx="1370.1" cy="437.9" r="2.6" fill="url(#sg)" opacity="0.71"/>
<circle cx="1485.8" cy="488.2" r="2.8" fill="url(#sg)" opacity="0.71"/>
<circle cx="661.5" cy="743.5" r="2.6" fill="url(#sg)" opacity="0.71"/>
<circle cx="2896.1" cy="513.2" r="2.7" fill="url(#sg)" opacity="0.88"/>
<circle cx="2610.0" cy="1256.4" r="2.7" fill="url(#sg)" opacity="0.79"/>
<circle cx="2241.1" cy="1651.3" r="3.0" fill="url(#sg)" opacity="0.59"/>
<circle cx="2192.7" cy="1636.1" r="2.5" fill="url(#sg)" opacity="0.71"/>
<circle cx="2435.4" cy="148.3" r="2.4" fill="url(#sg)" opacity="0.74"/>
<circle cx="1354.7" cy="1548.1" r="2.4" fill="url(#sg)" opacity="0.70"/>
<circle cx="1598.9" cy="416.3" r="3.0" fill="url(#sg)" opacity="0.64"/>
<circle cx="817.6" cy="624.5" r="3.0" fill="url(#sg)" opacity="0.78"/>
<circle cx="1049.7" cy="855.1" r="2.4" fill="url(#sg)" opacity="0.62"/>
<circle cx="2465.2" cy="527.3" r="2.2" fill="url(#sg)" opacity="0.72"/>
<circle cx="987.7" cy="985.7" r="2.7" fill="url(#sg)" opacity="0.59"/>
<circle cx="1113.7" cy="1616.7" r="2.3" fill="url(#sg)" opacity="0.85"/>
<circle cx="1948.1" cy="1263.7" r="2.9" fill="url(#sg)" opacity="0.82"/>
<circle cx="1385.5" cy="295.9" r="2.4" fill="url(#sg)" opacity="0.71"/>
<circle cx="1794.0" cy="1037.7" r="2.4" fill="url(#sg)" opacity="0.68"/>
<circle cx="1300.0" cy="158.7" r="2.9" fill="url(#sg)" opacity="0.67"/>
<circle cx="1119.7" cy="1833.4" r="2.6" fill="url(#sg)" opacity="0.66"/>
<circle cx="1772.1" cy="358.3" r="2.3" fill="url(#sg)" opacity="0.63"/>
<circle cx="2454.6" cy="1794.3" r="2.6" fill="url(#sg)" opacity="0.66"/>
<circle cx="1139.8" cy="232.5" r="3.0" fill="url(#sg)" opacity="0.78"/>
<circle cx="1269.2" cy="837.6" r="3.1" fill="url(#sg)" opacity="0.58"/>
<circle cx="1150.5" cy="808.3" r="2.9" fill="url(#sg)" opacity="0.71"/>
<circle cx="1152.4" cy="156.4" r="2.7" fill="url(#sg)" opacity="0.68"/>
<circle cx="736.1" cy="1224.0" r="2.4" fill="url(#sg)" opacity="0.76"/>
<circle cx="1017.3" cy="1061.1" r="3.1" fill="url(#sg)" opacity="0.52"/>
<circle cx="2047.0" cy="668.6" r="2.7" fill="url(#sg)" opacity="0.51"/>
<circle cx="707.8" cy="1597.7" r="2.6" fill="url(#sg)" opacity="0.55"/>
<circle cx="1615.3" cy="1237.9" r="2.2" fill="url(#sg)" opacity="0.83"/>
<circle cx="1440.6" cy="539.1" r="3.0" fill="url(#sg)" opacity="0.69"/>
<circle cx="908.3" cy="434.2" r="2.9" fill="url(#sg)" opacity="0.72"/>
<circle cx="1660.0" cy="1405.6" r="2.5" fill="url(#sg)" opacity="0.57"/>
<circle cx="2149.0" cy="486.7" r="2.5" fill="url(#sg)" opacity="0.52"/>
<circle cx="2140.6" cy="1293.2" r="3.1" fill="url(#sg)" opacity="0.57"/>
<circle cx="2439.7" cy="576.3" r="2.7" fill="url(#sg)" opacity="0.71"/>
<circle cx="2366.3" cy="290.8" r="2.6" fill="url(#sg)" opacity="0.82"/>
<circle cx="1214.8" cy="206.3" r="2.7" fill="url(#sg)" opacity="0.63"/>
<circle cx="2509.9" cy="964.2" r="2.9" fill="url(#sg)" opacity="0.78"/>
<circle cx="805.7" cy="1274.5" r="2.6" fill="url(#sg)" opacity="0.68"/>
<circle cx="2172.6" cy="835.4" r="2.3" fill="url(#sg)" opacity="0.74"/>
<circle cx="2190.1" cy="1784.5" r="3.2" fill="url(#sg)" opacity="0.52"/>
<circle cx="2251.8" cy="273.6" r="2.9" fill="url(#sg)" opacity="0.89"/>
<circle cx="1523.0" cy="1593.3" r="2.9" fill="url(#sg)" opacity="0.70"/>
<circle cx="2805.3" cy="618.5" r="2.5" fill="url(#sg)" opacity="0.82"/>
<circle cx="1595.8" cy="314.0" r="2.8" fill="url(#sg)" opacity="0.74"/>
<circle cx="1557.5" cy="567.7" r="2.5" fill="url(#sg)" opacity="0.81"/>
<circle cx="2062.8" cy="300.7" r="3.1" fill="url(#sg)" opacity="0.67"/>
<circle cx="2016.7" cy="1809.8" r="2.5" fill="url(#sg)" opacity="0.78"/>
<circle cx="1973.1" cy="1188.4" r="2.6" fill="url(#sg)" opacity="0.82"/>
<circle cx="1824.3" cy="863.5" r="2.8" fill="url(#sg)" opacity="0.77"/>
<circle cx="1047.5" cy="681.0" r="2.5" fill="url(#sg)" opacity="0.72"/>
<circle cx="3016.2" cy="1653.1" r="2.6" fill="url(#sg)" opacity="0.67"/>
<circle cx="1200.5" cy="1425.7" r="2.6" fill="url(#sg)" opacity="0.57"/>
<circle cx="2509.4" cy="1363.5" r="2.5" fill="url(#sg)" opacity="0.81"/>
<circle cx="2165.9" cy="1140.5" r="3.1" fill="url(#sg)" opacity="0.64"/>
<circle cx="2006.2" cy="1137.5" r="2.6" fill="url(#sg)" opacity="0.87"/>
<circle cx="1791.5" cy="931.1" r="2.2" fill="url(#sg)" opacity="0.68"/>
<circle cx="2807.3" cy="135.8" r="2.8" fill="url(#sg)" opacity="0.54"/>
<circle cx="1883.8" cy="1390.5" r="2.3" fill="url(#sg)" opacity="0.80"/>
<circle cx="877.4" cy="696.2" r="2.5" fill="url(#sg)" opacity="0.70"/>
<circle cx="2325.4" cy="1218.1" r="2.7" fill="url(#sg)" opacity="0.53"/>
<circle cx="2669.7" cy="927.9" r="3.1" fill="url(#sg)" opacity="0.50"/>
<circle cx="2808.6" cy="1292.2" r="2.6" fill="url(#sg)" opacity="0.71"/>
<circle cx="1509.3" cy="545.8" r="2.8" fill="url(#sg)" opacity="0.55"/>
<circle cx="926.2" cy="1186.8" r="3.2" fill="url(#sg)" opacity="0.90"/>
<circle cx="1717.2" cy="1491.4" r="2.5" fill="url(#sg)" opacity="0.90"/>
<circle cx="1428.5" cy="581.3" r="2.6" fill="url(#sg)" opacity="0.74"/>
<circle cx="1274.0" cy="415.2" r="3.0" fill="url(#sg)" opacity="0.53"/>
<circle cx="1652.3" cy="668.4" r="2.7" fill="url(#sg)" opacity="0.74"/>
<circle cx="1692.7" cy="613.0" r="2.2" fill="url(#sg)" opacity="0.73"/>
<circle cx="2730.7" cy="1019.6" r="2.9" fill="url(#sg)" opacity="0.62"/>
<circle cx="2432.3" cy="628.2" r="2.9" fill="url(#sg)" opacity="0.64"/>
<circle cx="850.4" cy="1340.4" r="3.2" fill="url(#sg)" opacity="0.66"/>
<circle cx="2858.1" cy="1702.6" r="3.1" fill="url(#sg)" opacity="0.72"/>
<circle cx="2551.0" cy="1181.5" r="3.1" fill="url(#sg)" opacity="0.57"/>
<circle cx="1618.9" cy="445.2" r="2.5" fill="url(#sg)" opacity="0.51"/>
<circle cx="1747.5" cy="968.3" r="2.7" fill="url(#sg)" opacity="0.57"/>
<circle cx="704.9" cy="1839.4" r="2.7" fill="url(#sg)" opacity="0.53"/>
<circle cx="1140.5" cy="1432.2" r="2.3" fill="url(#sg)" opacity="0.77"/>
<circle cx="1374.3" cy="1724.7" r="2.4" fill="url(#sg)" opacity="0.85"/>
<circle cx="1409.4" cy="1805.0" r="3.0" fill="url(#sg)" opacity="0.78"/>
<circle cx="2474.7" cy="480.0" r="3.1" fill="url(#sg)" opacity="0.61"/>
<circle cx="1894.4" cy="769.0" r="2.3" fill="url(#sg)" opacity="0.88"/>
<circle cx="1609.8" cy="1510.8" r="2.5" fill="url(#sg)" opacity="0.64"/>
<circle cx="1636.9" cy="442.6" r="2.3" fill="url(#sg)" opacity="0.67"/>
<circle cx="1501.4" cy="1012.1" r="2.3" fill="url(#sg)" opacity="0.52"/>
<circle cx="1400.5" cy="594.3" r="2.3" fill="url(#sg)" opacity="0.71"/>
<circle cx="2475.9" cy="981.4" r="3.2" fill="url(#sg)" opacity="0.73"/>
<circle cx="632.0" cy="950.3" r="2.9" fill="url(#sg)" opacity="0.76"/>
<circle cx="2070.9" cy="276.2" r="2.9" fill="url(#sg)" opacity="0.55"/>
<circle cx="770.3" cy="166.6" r="2.7" fill="url(#sg)" opacity="0.53"/>
<circle cx="2836.6" cy="530.9" r="2.7" fill="url(#sg)" opacity="0.62"/>
<circle cx="658.3" cy="1768.8" r="2.5" fill="url(#sg)" opacity="0.75"/>
<circle cx="2742.0" cy="1464.5" r="2.3" fill="url(#sg)" opacity="0.66"/>
<circle cx="2788.2" cy="746.2" r="2.9" fill="url(#sg)" opacity="0.68"/>
<circle cx="2429.0" cy="1272.8" r="2.6" fill="url(#sg)" opacity="0.84"/>
<circle cx="1341.3" cy="664.0" r="2.9" fill="url(#sg)" opacity="0.60"/>
<circle cx="1773.4" cy="1421.6" r="2.4" fill="url(#sg)" opacity="0.63"/>
<circle cx="1882.4" cy="1197.6" r="2.3" fill="url(#sg)" opacity="0.56"/>
<circle cx="1206.4" cy="711.3" r="3.0" fill="url(#sg)" opacity="0.67"/>
<circle cx="1952.4" cy="397.9" r="2.9" fill="url(#sg)" opacity="0.83"/>
<circle cx="2030.5" cy="1521.4" r="2.8" fill="url(#sg)" opacity="0.74"/>
<circle cx="1294.4" cy="152.1" r="2.8" fill="url(#sg)" opacity="0.64"/>
<circle cx="2459.8" cy="958.4" r="2.4" fill="url(#sg)" opacity="0.54"/>
<circle cx="1211.6" cy="1222.0" r="2.8" fill="url(#sg)" opacity="0.53"/>
<circle cx="1764.0" cy="744.3" r="3.2" fill="url(#sg)" opacity="0.84"/>
<circle cx="2529.1" cy="519.0" r="3.1" fill="url(#sg)" opacity="0.64"/>
<circle cx="2179.6" cy="1545.7" r="2.4" fill="url(#sg)" opacity="0.88"/>
<circle cx="1321.5" cy="1236.9" r="3.1" fill="url(#sg)" opacity="0.57"/>
<circle cx="910.9" cy="1491.6" r="2.8" fill="url(#sg)" opacity="0.54"/>
<circle cx="3012.5" cy="1486.5" r="3.0" fill="url(#sg)" opacity="0.81"/>
<circle cx="742.7" cy="406.9" r="2.2" fill="url(#sg)" opacity="0.70"/>
<circle cx="655.8" cy="233.9" r="3.1" fill="url(#sg)" opacity="0.56"/>
<circle cx="2553.7" cy="1096.8" r="2.6" fill="url(#sg)" opacity="0.73"/>
<circle cx="2293.7" cy="700.6" r="2.7" fill="url(#sg)" opacity="0.78"/>
<circle cx="2048.8" cy="694.2" r="2.5" fill="url(#sg)" opacity="0.59"/>
<circle cx="1624.8" cy="117.8" r="2.4" fill="url(#sg)" opacity="0.61"/>
<circle cx="1007.7" cy="246.8" r="2.6" fill="url(#sg)" opacity="0.71"/>
<circle cx="1158.1" cy="813.1" r="3.0" fill="url(#sg)" opacity="0.86"/>
<circle cx="1435.0" cy="183.9" r="2.4" fill="url(#sg)" opacity="0.65"/>
<circle cx="1049.2" cy="499.0" r="2.9" fill="url(#sg)" opacity="0.84"/>
<circle cx="2451.8" cy="1046.2" r="2.7" fill="url(#sg)" opacity="0.77"/>
<circle cx="1037.9" cy="519.1" r="2.9" fill="url(#sg)" opacity="0.75"/>
<circle cx="1460.8" cy="387.3" r="2.5" fill="url(#sg)" opacity="0.76"/>
<circle cx="760.7" cy="127" r="4" fill="url(#sg)"/>
<circle cx="1273" cy="268.6" r="4" fill="url(#sg)"/>
<circle cx="1281" cy="320" r="4" fill="url(#sg)"/>
<circle cx="971.8" cy="392.5" r="4" fill="url(#sg)"/>
<circle cx="1125" cy="418" r="4" fill="url(#sg)"/>
<circle cx="1297" cy="426.6" r="4" fill="url(#sg)"/>
<circle cx="1246.8" cy="369.8" r="4" fill="url(#sg)"/>
<circle cx="973" cy="473.8" r="4" fill="url(#sg)"/>
<circle cx="916" cy="491.7" r="4" fill="url(#sg)"/>
<circle cx="1179" cy="585" r="4" fill="url(#sg)"/>
<circle cx="1000" cy="564" r="4" fill="url(#sg)"/>
<circle cx="762.7" cy="348.8" r="4" fill="url(#sg)"/>
<circle cx="800" cy="335" r="4" fill="url(#sg)"/>
<circle cx="815.5" cy="396.8" r="4" fill="url(#sg)"/>
<circle cx="1008" cy="356.7" r="4" fill="url(#sg)"/>
<circle cx="1189" cy="481.7" r="4" fill="url(#sg)"/>
<circle cx="1296.4" cy="487.7" r="4" fill="url(#sg)"/>
<circle cx="746" cy="654" r="4" fill="url(#sg)"/>
<circle cx="916" cy="631.7" r="4" fill="url(#sg)"/>
<circle cx="1187" cy="641.7" r="4" fill="url(#sg)"/>
<circle cx="1334" cy="637.7" r="4" fill="url(#sg)"/>
<circle cx="631.7" cy="614" r="4" fill="url(#sg)"/>
<circle cx="781" cy="579" r="4" fill="url(#sg)"/>
<circle cx="919" cy="195" r="4" fill="url(#sg)"/>
<circle cx="774.6" cy="208" r="4" fill="url(#sg)"/>
<circle cx="1833" cy="275" r="4" fill="url(#sg)"/>
<circle cx="1952" cy="249" r="4" fill="url(#sg)"/>
<circle cx="1952" cy="280" r="4" fill="url(#sg)"/>
<circle cx="1912" cy="281" r="4" fill="url(#sg)"/>
<circle cx="2096" cy="162" r="4" fill="url(#sg)"/>
<circle cx="2103.8" cy="320.5" r="4" fill="url(#sg)"/>
<circle cx="2090" cy="327.6" r="4" fill="url(#sg)"/>
<circle cx="2097.6" cy="381" r="4" fill="url(#sg)"/>
<circle cx="2178.6" cy="321" r="4" fill="url(#sg)"/>
<circle cx="2154.8" cy="442.9" r="4" fill="url(#sg)"/>
<circle cx="2051" cy="520" r="4" fill="url(#sg)"/>
<circle cx="1999" cy="588" r="4" fill="url(#sg)"/>
<circle cx="2013" cy="634" r="4" fill="url(#sg)"/>
<circle cx="2083" cy="646" r="4" fill="url(#sg)"/>
<circle cx="2258.6" cy="659.5" r="4" fill="url(#sg)"/>
<circle cx="2238" cy="677" r="4" fill="url(#sg)"/>
<circle cx="2489" cy="159.5" r="4" fill="url(#sg)"/>
<circle cx="2445" cy="201" r="4" fill="url(#sg)"/>
<circle cx="2293.8" cy="224.8" r="4" fill="url(#sg)"/>
<circle cx="2483" cy="289" r="4" fill="url(#sg)"/>
<circle cx="2231" cy="397.6" r="4" fill="url(#sg)"/>
<circle cx="2483" cy="554.8" r="4" fill="url(#sg)"/>
<circle cx="1797.6" cy="132" r="4" fill="url(#sg)"/>
<circle cx="1730" cy="184.8" r="4" fill="url(#sg)"/>
<circle cx="1883" cy="512" r="4" fill="url(#sg)"/>
<circle cx="2008.6" cy="555.7" r="4" fill="url(#sg)"/>
<circle cx="2301" cy="724.8" r="4" fill="url(#sg)"/>
<circle cx="2287" cy="803.8" r="4" fill="url(#sg)"/>
<circle cx="2020.5" cy="762.9" r="4" fill="url(#sg)"/>
<circle cx="2176" cy="803.8" r="4" fill="url(#sg)"/>
<circle cx="2508.6" cy="172.8" r="4" fill="url(#sg)"/>
<circle cx="2840" cy="142.5" r="4" fill="url(#sg)"/>
<circle cx="2559" cy="266" r="4" fill="url(#sg)"/>
<circle cx="2590.7" cy="286" r="4" fill="url(#sg)"/>
<circle cx="2860.5" cy="113" r="4" fill="url(#sg)"/>
<circle cx="2710" cy="361" r="4" fill="url(#sg)"/>
<circle cx="2774" cy="463" r="4" fill="url(#sg)"/>
<circle cx="2822" cy="556" r="4" fill="url(#sg)"/>
<circle cx="2833" cy="647.7" r="4" fill="url(#sg)"/>
<circle cx="2588" cy="543" r="4" fill="url(#sg)"/>
<circle cx="2645.7" cy="545.7" r="4" fill="url(#sg)"/>
<circle cx="2427.6" cy="841.4" r="4" fill="url(#sg)"/>
<circle cx="2522" cy="851" r="4" fill="url(#sg)"/>
<circle cx="2522" cy="840" r="4" fill="url(#sg)"/>
<circle cx="2664" cy="897.8" r="4" fill="url(#sg)"/>
<circle cx="2873" cy="687.5" r="4" fill="url(#sg)"/>
<circle cx="2563.6" cy="976" r="4" fill="url(#sg)"/>
<circle cx="2602.7" cy="976.7" r="4" fill="url(#sg)"/>
<circle cx="2813.7" cy="1041" r="4" fill="url(#sg)"/>
<circle cx="2751" cy="1090" r="4" fill="url(#sg)"/>
<circle cx="2506" cy="1125.6" r="4" fill="url(#sg)"/>
<circle cx="2573" cy="1105" r="4" fill="url(#sg)"/>
<circle cx="2813.7" cy="1154" r="4" fill="url(#sg)"/>
<circle cx="2484.7" cy="288.5" r="4" fill="url(#sg)"/>
<circle cx="2523.8" cy="405" r="4" fill="url(#sg)"/>
<circle cx="2940.7" cy="944" r="4" fill="url(#sg)"/>
<circle cx="2995" cy="570.7" r="4" fill="url(#sg)"/>
<circle cx="611" cy="730" r="4" fill="url(#sg)"/>
<circle cx="746.7" cy="655" r="4" fill="url(#sg)"/>
<circle cx="792" cy="786" r="4" fill="url(#sg)"/>
<circle cx="667.6" cy="899.5" r="4" fill="url(#sg)"/>
<circle cx="1032" cy="696" r="4" fill="url(#sg)"/>
<circle cx="1108.6" cy="748" r="4" fill="url(#sg)"/>
<circle cx="1175.8" cy="763.7" r="4" fill="url(#sg)"/>
<circle cx="1166" cy="785" r="4" fill="url(#sg)"/>
<circle cx="1013.6" cy="852" r="4" fill="url(#sg)"/>
<circle cx="1099" cy="863.6" r="4" fill="url(#sg)"/>
<circle cx="1048" cy="895" r="4" fill="url(#sg)"/>
<circle cx="1050" cy="937.7" r="4" fill="url(#sg)"/>
<circle cx="1330" cy="806" r="4" fill="url(#sg)"/>
<circle cx="1291.5" cy="856.7" r="4" fill="url(#sg)"/>
<circle cx="834" cy="935" r="4" fill="url(#sg)"/>
<circle cx="886" cy="941" r="4" fill="url(#sg)"/>
<circle cx="914.8" cy="939" r="4" fill="url(#sg)"/>
<circle cx="900" cy="985.5" r="4" fill="url(#sg)"/>
<circle cx="1113" cy="1007.6" r="4" fill="url(#sg)"/>
<circle cx="1238.8" cy="992.8" r="4" fill="url(#sg)"/>
<circle cx="1355.8" cy="999" r="4" fill="url(#sg)"/>
<circle cx="848" cy="1052" r="4" fill="url(#sg)"/>
<circle cx="1018.6" cy="1043" r="4" fill="url(#sg)"/>
<circle cx="616.5" cy="1010" r="4" fill="url(#sg)"/>
<circle cx="1507" cy="801" r="4" fill="url(#sg)"/>
<circle cx="1535" cy="815.5" r="4" fill="url(#sg)"/>
<circle cx="1443.6" cy="871" r="4" fill="url(#sg)"/>
<circle cx="1499.8" cy="879" r="4" fill="url(#sg)"/>
<circle cx="1536.7" cy="917" r="4" fill="url(#sg)"/>
<circle cx="1583.5" cy="929.5" r="4" fill="url(#sg)"/>
<circle cx="1477.8" cy="947.5" r="4" fill="url(#sg)"/>
<circle cx="1748.7" cy="960" r="4" fill="url(#sg)"/>
<circle cx="1691" cy="1105" r="4" fill="url(#sg)"/>
<circle cx="1710.5" cy="1016" r="4" fill="url(#sg)"/>
<circle cx="2574" cy="1106" r="4" fill="url(#sg)"/>
<circle cx="2506" cy="1126" r="4" fill="url(#sg)"/>
<circle cx="2813.6" cy="1154.5" r="4" fill="url(#sg)"/>
<circle cx="1465" cy="190" r="30" fill="url(#sgb)"/>
<path d="M1435 190H1495M1465 160V220" stroke="#d8e6ff" stroke-opacity="0.35" stroke-width="1.5"/>
<circle cx="1465" cy="190" r="9" fill="url(#sg)"/>
<circle cx="2697" cy="1005" r="34" fill="url(#sgb)"/>
<path d="M2627 1005H2767M2697 935V1075" stroke="#d8e6ff" stroke-opacity="0.35" stroke-width="1.5"/>
<circle cx="2697" cy="1005" r="11" fill="url(#sg)"/>
<circle cx="1759" cy="1045" r="32" fill="url(#sgb)"/>
<path d="M1699 1045H1819M1759 985V1105" stroke="#d8e6ff" stroke-opacity="0.35" stroke-width="1.5"/>
<circle cx="1759" cy="1045" r="11" fill="url(#sg)"/>
<circle cx="2854" cy="223" r="10" fill="url(#sgb)"/>
<path d="M2828 223H2880M2854 197V249" stroke="#d8e6ff" stroke-opacity="0.35" stroke-width="1.5"/>
<circle cx="2854" cy="223" r="8" fill="url(#sg)"/>
<circle cx="2842.6" cy="819" r="10" fill="url(#sgb)"/>
<path d="M2822.6 819H2862.6M2842.6 799V839" stroke="#d8e6ff" stroke-opacity="0.35" stroke-width="1.5"/>
<circle cx="2842.6" cy="819" r="8" fill="url(#sg)"/>
<circle cx="2448" cy="1025" r="10" fill="url(#sgb)"/>
<path d="M2426 1025H2470M2448 1003V1047" stroke="#d8e6ff" stroke-opacity="0.35" stroke-width="1.5"/>
<circle cx="2448" cy="1025" r="8" fill="url(#sg)"/>
<circle cx="2182" cy="642" r="10" fill="url(#sgb)"/>
<path d="M2164 642H2200M2182 624V660" stroke="#d8e6ff" stroke-opacity="0.35" stroke-width="1.5"/>
<circle cx="2182" cy="642" r="8" fill="url(#sg)"/>
<circle cx="2380" cy="1218" r="10" fill="url(#sgb)"/>
<path d="M2362 1218H2398M2380 1200V1236" stroke="#d8e6ff" stroke-opacity="0.35" stroke-width="1.5"/>
<circle cx="2380" cy="1218" r="8" fill="url(#sg)"/>
<circle cx="1259" cy="1106" r="10" fill="url(#sgb)"/>
<path d="M1241 1106H1277M1259 1088V1124" stroke="#d8e6ff" stroke-opacity="0.35" stroke-width="1.5"/>
<circle cx="1259" cy="1106" r="8" fill="url(#sg)"/>
<circle cx="979" cy="1100" r="8" fill="url(#sgb)"/>
<path d="M967 1100H991M979 1088V1112" stroke="#d8e6ff" stroke-opacity="0.35" stroke-width="1.5"/>
<circle cx="979" cy="1100" r="7" fill="url(#sg)"/>
<circle cx="1129" cy="926" r="8" fill="url(#sgb)"/>
<path d="M1117 926H1141M1129 914V938" stroke="#d8e6ff" stroke-opacity="0.35" stroke-width="1.5"/>
<circle cx="1129" cy="926" r="7" fill="url(#sg)"/>
<circle cx="2557" cy="1429" r="26" fill="url(#sgb)"/>
<path d="M2517 1429H2597M2557 1389V1469" stroke="#d8e6ff" stroke-opacity="0.35" stroke-width="1.5"/>
<circle cx="2557" cy="1429" r="9" fill="url(#sg)"/>
<g transform="translate(1773.5 754.25) rotate(39.04)" fill="none" stroke="#abbd3a" stroke-width="2.5">
<rect x="-456.5" y="-130" width="913" height="260"/>
</g>
<rect x="1631" y="117" width="67" height="66" fill="none" stroke="#abbd3a" stroke-width="3.6"/>
<rect x="1840.5" y="204" width="65.5" height="66" fill="none" stroke="#abbd3a" stroke-width="1.9"/>
<rect x="2012" y="340" width="68" height="67" fill="none" stroke="#abbd3a" stroke-width="3.6"/>
<rect x="1880" y="578" width="64" height="65" fill="none" stroke="#abbd3a" stroke-width="1.9"/>
<rect x="2261" y="561" width="67" height="67" fill="none" stroke="#abbd3a" stroke-width="3.6"/>
<rect x="2390" y="729" width="67" height="67" fill="none" stroke="#abbd3a" stroke-width="1.9"/>
<rect x="1201.5" y="750" width="67.5" height="69.70000000000005" fill="none" stroke="#abbd3a" stroke-width="3.6"/>
<rect x="1306" y="903" width="70" height="70" fill="none" stroke="#abbd3a" stroke-width="3.6"/>
<rect x="1311" y="909" width="69" height="67" fill="none" stroke="#abbd3a" stroke-width="3.6"/>
<rect x="1482" y="892" width="49" height="47" fill="none" stroke="#abbd3a" stroke-width="1.9"/>
<rect x="1433" y="1050" width="67" height="65" fill="none" stroke="#abbd3a" stroke-width="1.9"/>
<rect x="1591" y="1105" width="64" height="65" fill="none" stroke="#abbd3a" stroke-width="1.9"/>
<rect x="1597" y="1131" width="64" height="68" fill="none" stroke="#abbd3a" stroke-width="3.6"/>
<circle cx="1265" cy="809" r="10" fill="none" stroke="#abbd3a" stroke-width="4"/>
<circle cx="1551" cy="1041" r="23.5" fill="none" stroke="#abbd3a" stroke-width="3.5"/>
<rect x="1748" y="1261" width="65" height="63" fill="none" stroke="#abbd3a" stroke-width="1.9"/>
<rect x="1915" y="1329" width="64" height="63" fill="none" stroke="#abbd3a" stroke-width="1.9"/>
<circle cx="1835" cy="1272" r="9" fill="none" stroke="#abbd3a" stroke-width="2.5"/>
<circle cx="1693" cy="1156" r="9" fill="none" stroke="#abbd3a" stroke-width="3"/>
<rect x="1429" y="419" width="100" height="93" fill="none" stroke="#abbd3a" stroke-width="1.9"/>
<rect x="1402" y="453" width="101" height="92" fill="none" stroke="#abbd3a" stroke-width="1.9"/>
<rect x="1376" y="489" width="99" height="91" fill="none" stroke="#abbd3a" stroke-width="1.9"/>
<rect x="1525" y="439" width="100" height="90" fill="none" stroke="#abbd3a" stroke-width="1.9"/>
<rect x="1497" y="475" width="66" height="64" fill="none" stroke="#abbd3a" stroke-width="3.6"/>
<rect x="1469" y="508" width="67" height="64" fill="none" stroke="#abbd3a" stroke-width="3.6"/>
<rect x="1593" y="493" width="64" height="63" fill="none" stroke="#abbd3a" stroke-width="1.9"/>
<rect x="1627" y="521" width="65" height="65" fill="none" stroke="#abbd3a" stroke-width="3.6"/>
<rect x="1415" y="545" width="93" height="95" fill="none" stroke="#abbd3a" stroke-width="1.9"/>
<rect x="1448" y="571" width="95" height="97" fill="none" stroke="#abbd3a" stroke-width="3.6"/>
<rect x="1503" y="528" width="92" height="73" fill="none" stroke="#abbd3a" stroke-width="1.9"/>
<rect x="1509" y="595" width="67" height="65" fill="none" stroke="#abbd3a" stroke-width="3.6"/>
<rect x="1483" y="628" width="64" height="67" fill="none" stroke="#abbd3a" stroke-width="3.6"/>
<rect x="1515" y="625" width="95" height="96" fill="none" stroke="#abbd3a" stroke-width="1.9"/>
<rect x="1605" y="583" width="95" height="98" fill="none" stroke="#abbd3a" stroke-width="1.9"/>
<rect x="1661" y="552" width="99" height="88" fill="none" stroke="#abbd3a" stroke-width="1.9"/>
<rect x="1728" y="601" width="72" height="99" fill="none" stroke="#abbd3a" stroke-width="1.9"/>
<rect x="1584" y="677" width="60" height="67" fill="none" stroke="#abbd3a" stroke-width="1.9"/>
<rect x="1543" y="650" width="102" height="96" fill="none" stroke="#abbd3a" stroke-width="1.9"/>
<rect x="1617" y="708" width="83" height="92" fill="none" stroke="#abbd3a" stroke-width="1.9"/>
<rect x="1727" y="600" width="111" height="100" fill="none" stroke="#abbd3a" stroke-width="1.9"/>
<rect x="1806" y="638" width="66" height="65" fill="none" stroke="#abbd3a" stroke-width="1.9"/>
<rect x="1840" y="665" width="66" height="66" fill="none" stroke="#abbd3a" stroke-width="1.9"/>
<rect x="1815" y="699" width="65" height="67" fill="none" stroke="#abbd3a" stroke-width="1.9"/>
<rect x="1834" y="710" width="91" height="99" fill="none" stroke="#abbd3a" stroke-width="1.9"/>
<rect x="1961" y="791" width="69" height="69" fill="none" stroke="#abbd3a" stroke-width="3.6"/>
<rect x="1584" y="678" width="61" height="99" fill="none" stroke="#abbd3a" stroke-width="1.9"/>
<rect x="1617" y="708" width="57" height="97" fill="none" stroke="#abbd3a" stroke-width="1.9"/>
<rect x="1639" y="780" width="101" height="92" fill="none" stroke="#abbd3a" stroke-width="1.9"/>
<rect x="1617" y="850" width="65" height="65" fill="none" stroke="#abbd3a" stroke-width="1.9"/>
<rect x="1707" y="835" width="107" height="77" fill="none" stroke="#abbd3a" stroke-width="1.9"/>
<rect x="1605" y="583" width="95" height="99" fill="none" stroke="#abbd3a" stroke-width="1.9"/>
<rect x="1671" y="641" width="62" height="104" fill="none" stroke="#abbd3a" stroke-width="1.9"/>
<rect x="1752" y="704" width="100" height="94" fill="none" stroke="#abbd3a" stroke-width="1.9"/>
<rect x="1810" y="834" width="94" height="70" fill="none" stroke="#abbd3a" stroke-width="3.6"/>
<rect x="1851" y="928" width="69" height="72" fill="none" stroke="#abbd3a" stroke-width="1.9"/>
<rect x="1936" y="825" width="65" height="66" fill="none" stroke="#abbd3a" stroke-width="3.6"/>
<rect x="2033" y="874" width="93" height="97" fill="none" stroke="#abbd3a" stroke-width="1.9"/>
<rect x="2067" y="936" width="102" height="94" fill="none" stroke="#abbd3a" stroke-width="1.9"/>
<rect x="2040" y="968" width="101" height="95" fill="none" stroke="#abbd3a" stroke-width="1.9"/>
<rect x="2013" y="1003" width="98" height="93" fill="none" stroke="#abbd3a" stroke-width="1.9"/>
<rect x="1918" y="982" width="101" height="93" fill="none" stroke="#abbd3a" stroke-width="1.9"/>
<rect x="1980" y="945" width="93" height="97" fill="none" stroke="#abbd3a" stroke-width="1.9"/>
<rect x="1850" y="927" width="65" height="66" fill="none" stroke="#abbd3a" stroke-width="3.6"/>
<rect x="1891" y="945" width="67" height="66" fill="none" stroke="#abbd3a" stroke-width="3.6"/>
<rect x="1906" y="862" width="65" height="63" fill="none" stroke="#abbd3a" stroke-width="3.6"/>
<rect x="1961" y="800" width="66" height="57" fill="none" stroke="#abbd3a" stroke-width="3.6"/>
<rect x="1979" y="830" width="81" height="89" fill="none" stroke="#abbd3a" stroke-width="1.9"/>
<rect x="1641" y="780" width="100" height="92" fill="none" stroke="#abbd3a" stroke-width="1.9"/>
<rect x="1672" y="806" width="88" height="84" fill="none" stroke="#abbd3a" stroke-width="1.9"/>
<rect x="1707" y="832" width="107" height="80" fill="none" stroke="#abbd3a" stroke-width="1.9"/>
<rect x="1782" y="870" width="93" height="96" fill="none" stroke="#abbd3a" stroke-width="1.9"/>
<rect x="1849" y="928" width="31" height="66" fill="none" stroke="#abbd3a" stroke-width="1.9"/>
<rect x="1700" y="640" width="90" height="95" fill="none" stroke="#abbd3a" stroke-width="1.9"/>
<rect x="1760" y="760" width="90" height="85" fill="none" stroke="#abbd3a" stroke-width="1.9"/>
<rect x="1550" y="720" width="65" height="70" fill="none" stroke="#abbd3a" stroke-width="1.9"/>
<rect x="1350" y="540" width="70" height="60" fill="none" stroke="#abbd3a" stroke-width="1.9"/>
<rect x="1900" y="740" width="90" height="90" fill="none" stroke="#abbd3a" stroke-width="1.9"/>
<rect x="2100" y="880" width="80" height="70" fill="none" stroke="#abbd3a" stroke-width="1.9"/>
<ellipse cx="1774" cy="756" rx="37" ry="32" fill="#abbd3a"/>
<circle cx="1711" cy="674" r="40" fill="none" stroke="#abbd3a" stroke-width="4"/>
<circle cx="1712" cy="680" r="34" fill="none" stroke="#abbd3a" stroke-width="3"/>
<circle cx="1730" cy="760" r="55" fill="none" stroke="#abbd3a" stroke-width="3"/>
<circle cx="1765" cy="770" r="45" fill="none" stroke="#abbd3a" stroke-width="3"/>
<circle cx="1790" cy="750" r="48" fill="none" stroke="#abbd3a" stroke-width="3"/>
<circle cx="1782" cy="809" r="20" fill="none" stroke="#abbd3a" stroke-width="3"/>
<circle cx="1745" cy="800" r="35" fill="none" stroke="#abbd3a" stroke-width="3"/>
<circle cx="1800" cy="790" r="30" fill="none" stroke="#abbd3a" stroke-width="3"/>
<circle cx="1760" cy="720" r="42" fill="none" stroke="#abbd3a" stroke-width="3"/>
<circle cx="1735" cy="700" r="30" fill="none" stroke="#abbd3a" stroke-width="3"/>
<path d="M1477.5 420.7 L1484.2 430.1 L1494.0 435.8 L1501.2 444.6 L1509.7 451.8 L1521.9 454.5 L1530.9 461.1 L1534.4 474.5 L1546.7 477.1 L1555.5 483.9 L1559.4 496.8 L1571.3 499.8 L1577.7 509.7 L1588.6 513.9 L1596.2 522.2 L1608.0 525.4 L1613.6 536.2 L1620.8 545.0 L1631.6 549.4 L1638.9 558.1 L1648.0 564.6 L1660.5 566.9 L1664.8 579.3 L1674.5 585.0 L1685.0 589.8 L1695.4 594.7 L1613.8 713.1 L1607.6 703.0 L1597.3 697.9 L1587.7 692.1 L1580.1 683.8 L1570.1 678.4 L1564.7 667.3 L1553.5 663.4 L1547.1 653.6 L1535.3 650.4 L1527.0 642.9 L1523.3 629.9 L1514.4 623.1 L1505.2 616.7 L1491.8 615.5 L1486.5 604.4 L1476.6 598.8 L1470.0 589.3 L1460.1 583.9 L1452.2 575.9 L1443.7 568.6 L1433.6 563.4 L1424.9 556.4 L1414.3 551.8 L1407.0 543.1 L1396.8 538.0Z" fill="none" stroke="#abbd3a" stroke-width="2.0" stroke-linejoin="round"/>
<path d="M1614.9 553.0 L1623.6 561.8 L1635.2 567.0 L1648.0 570.9 L1653.2 584.1 L1662.1 592.6 L1672.0 599.9 L1683.7 605.1 L1692.4 614.0 L1705.1 617.9 L1710.8 630.4 L1722.0 636.2 L1733.4 641.7 L1744.4 647.8 L1749.0 661.7 L1757.7 670.5 L1773.0 671.3 L1778.1 684.6 L1790.1 689.3 L1801.3 695.1 L1810.0 703.9 L1816.6 715.4 L1825.5 724.0 L1840.3 725.3 L1846.3 737.5 L1859.5 740.9 L1864.8 753.9 L1876.8 758.6 L1882.9 770.7 L1891.9 779.2 L1819.4 888.1 L1806.7 884.2 L1801.5 871.1 L1793.4 861.5 L1780.5 857.8 L1774.5 845.6 L1763.9 839.1 L1753.0 833.0 L1742.1 826.8 L1735.4 815.5 L1726.6 806.8 L1711.8 805.5 L1705.7 793.4 L1692.0 790.7 L1682.9 782.4 L1676.5 770.6 L1666.4 763.5 L1656.5 756.2 L1646.1 749.4 L1636.9 741.2 L1627.5 733.2 L1617.5 725.9 L1605.9 720.6 L1599.1 709.5 L1590.0 701.1 L1578.6 695.6 L1572.1 684.1 L1562.1 676.8 L1548.2 674.3 L1541.5 663.0Z" fill="none" stroke="#abbd3a" stroke-width="2.0" stroke-linejoin="round"/>
<path d="M1913.6 772.0 L1925.7 774.8 L1931.8 785.0 L1939.5 793.3 L1951.7 796.0 L1956.6 807.6 L1965.2 814.8 L1977.4 817.4 L1982.5 828.8 L1992.2 834.6 L1999.5 843.3 L2010.3 847.8 L2016.7 857.6 L2025.2 864.9 L2038.4 866.3 L2046.8 873.7 L2051.6 885.5 L2058.5 894.7 L2071.6 896.2 L2079.0 904.9 L2086.8 913.0 L2097.2 917.9 L2105.6 925.3 L2114.6 931.9 L2122.9 939.4 L2130.2 948.2 L2140.7 952.9 L2148.9 960.5 L2155.1 970.6 L2168.4 971.9 L2076.1 1103.5 L2066.4 1097.8 L2060.4 1087.4 L2052.2 1079.7 L2039.9 1077.2 L2034.8 1065.8 L2026.4 1058.3 L2016.2 1053.2 L2005.9 1048.2 L2001.0 1036.6 L1990.9 1031.3 L1982.2 1024.3 L1970.3 1021.2 L1964.1 1011.1 L1952.8 1007.3 L1948.5 994.9 L1938.8 989.2 L1928.1 984.6 L1918.0 979.4 L1912.0 969.0 L1904.8 960.2 L1896.8 952.3 L1885.5 948.5 L1879.0 938.8 L1866.4 936.6 L1857.5 929.8 L1853.0 917.6 L1843.7 911.4 L1831.7 908.4 L1824.1 900.1Z" fill="none" stroke="#abbd3a" stroke-width="2.0" stroke-linejoin="round"/>
<path d="M1747.3 596.1 L1760.3 599.5 L1771.5 605.3 L1779.8 614.5 L1785.6 627.0 L1799.1 629.9 L1808.1 638.3 L1817.1 646.7 L1826.7 654.5 L1836.3 662.2 L1842.0 674.7 L1857.3 675.3 L1868.0 681.6 L1870.5 698.1 L1880.5 705.3 L1889.3 714.0 L1903.0 716.7 L1908.7 729.2 L1918.4 736.8 L1933.3 737.9 L1938.9 750.6 L1947.8 759.2 L1958.7 765.3 L1969.3 771.7 L1980.6 777.3 L1989.8 785.6 L1871.1 951.5 L1862.7 942.2 L1849.2 939.3 L1841.9 928.8 L1828.4 925.9 L1824.6 911.0 L1808.6 911.3 L1800.6 901.5 L1789.3 895.9 L1780.0 887.9 L1770.4 880.2 L1763.3 869.5 L1758.0 856.4 L1742.9 855.5 L1737.7 842.4 L1727.1 835.9 L1714.8 831.5 L1706.3 822.5 L1697.6 813.7 L1684.1 810.8 L1677.0 800.0 L1669.5 789.7 L1660.6 781.2 L1646.4 779.1 L1639.7 767.7 L1627.9 762.8Z" fill="none" stroke="#abbd3a" stroke-width="2.0" stroke-linejoin="round"/>
<path d="M1478.6 387.6 L2195 963 L2197 977 L2191 1001 L2175 1009 L2160 1029 L2157.5 1040.5 L2140 1050 L2136 1068 L2120 1074 L2104 1096 L2102 1108 L2088 1116 L2072 1124 L2060 1122 L1355.6 538.4 L1359.5 512.6 L1375.4 504.7 L1377.4 488.8 L1395.2 482.9 L1399.2 467 L1417 457 L1423 443 L1435 433 L1439 417 L1453 413.4 L1454.8 397.5 L1472.6 389.6Z" fill="none" stroke="#abbd3a" stroke-width="2.2" stroke-linejoin="round"/>
<g stroke="#3a8bc8" stroke-width="6"><path d="M1789 984.6H1804M1823 984.6H1838.6M1813.5 960V975M1813.5 994V1009"/></g>
</svg>
<!-- SIDEBAR -->

<div class="abs" style="left:574px;top:109px;width:30px;height:1725px;background:#f8f8f8"></div>
<div class="abs" style="left:583px;top:460px;width:14px;height:706px;border-radius:7px;background:#c1c1c1"></div>
<!-- panel1 -->
<div class="panel" style="top:126px;height:593px"></div>

<div class="ttl" style="left:161px;top:152px">Spectral Range</div>
<div class="lbl" style="left:50px;top:300px;font-size:34px;transform:scaleX(1.02);transform-origin:0 0">opt</div>
<div class="lbl" style="left:41px;top:421px;font-size:34px;transform:scaleX(1.07);transform-origin:0 0">mm</div>
<div class="lbl" style="left:105px;top:534px;font-size:34px">100</div>
<div class="lbl" style="left:225px;top:534px;font-size:34px">200</div>
<div class="lbl" style="left:344px;top:534px;font-size:34px">400</div>
<div class="lbl" style="left:415px;top:534px;font-size:34px">600</div>
<div class="lbl" style="left:26px;top:658px;font-size:31px">Show input form</div>
<!-- panel2 -->
<div class="panel" style="top:778px;height:586px"></div>
<div class="rowsep" style="top:955px"></div><div class="rowsep" style="top:1022px"></div><div class="rowsep" style="top:1088px"></div><div class="rowsep" style="top:1155px"></div>
<svg class="abs" style="left:117px;top:814px" width="40" height="38" viewBox="0 0 40 38">
 <path d="M9 2V33 M2 26L9 33L16 26" stroke="#8c8f93" stroke-width="4" fill="none" stroke-linecap="round" stroke-linejoin="round"/>
 <text x="28" y="16" font-family="Liberation Sans" font-weight="bold" font-size="16" fill="#8c8f93" text-anchor="middle">Z</text>
 <text x="28" y="35" font-family="Liberation Sans" font-weight="bold" font-size="16" fill="#8c8f93" text-anchor="middle">A</text>
</svg>
<div class="ttl" style="left:171px;top:815px">Filter/Band</div>
<svg class="abs" style="left:500px;top:815px" width="46" height="38" viewBox="0 0 46 38">
 <path d="M9 34V4 M2 12L9 4L16 12" stroke="#3a8a2a" stroke-width="4.5" fill="none" stroke-linecap="round" stroke-linejoin="round"/>
 <path d="M22 5H42 M22 15H38 M22 25H33 M22 34H27" stroke="#3a8a2a" stroke-width="4.5" stroke-linecap="round"/>
</svg>
<div class="cb" style="top:903px"></div><div class="cb" style="top:969.5px"></div><div class="cb" style="top:1036px"></div><div class="cb" style="top:1102.5px"></div><div class="cb" style="top:1169px"></div>
<div class="lbl" style="left:79px;top:901px;font-size:34px">Band 6</div>
<div class="lbl" style="left:79px;top:967.5px;font-size:34px">Band 7</div>
<div class="lbl" style="left:79px;top:1034px;font-size:34px">Band 3</div>
<div class="lbl" style="left:79px;top:1100.5px;font-size:34px">Band 5</div>
<div class="lbl" style="left:79px;top:1167px;font-size:34px">Band 4</div>
<div class="badge" style="left:455px;top:901px;width:94px">242</div>
<div class="badge" style="left:460px;top:967.5px;width:89px">221</div>
<div class="badge" style="left:458px;top:1034px;width:91px">140</div>
<div class="badge" style="left:472px;top:1100.5px;width:77px">68</div>
<div class="badge" style="left:472px;top:1167px;width:77px">60</div>
<div class="lbl" style="left:26px;top:1238px;font-size:31px">Show 2 more out of 7</div>
<div class="lbl" style="left:26px;top:1302px;font-size:31px">Undefined for 185 datasets</div>
<!-- panel3 -->
<div class="panel" style="top:1423px;height:411px"></div>
<div class="ttl" style="left:162px;top:1450px">Spectral Resolution</div>
<div class="lbl" style="left:0;width:145px;text-align:right;top:1575px;font-size:33px">100k-*</div>
<div class="lbl" style="left:0;width:145px;text-align:right;top:1640px;font-size:33px">10k-</div>
<div class="lbl" style="left:0;width:147px;text-align:right;top:1673px;font-size:33px">100k</div>
<div class="lbl" style="left:0;width:145px;text-align:right;top:1740px;font-size:33px">1k-10k</div>
<svg class="abs" style="left:0;top:0;overflow:visible" width="604" height="1884">
 <g stroke="#8c8f93" stroke-width="3.5" stroke-linecap="round" fill="none">
  <path d="M27.5 168.5L53.5 194M53.5 168.5L27.5 194"/>
  <path d="M27.5 822L53.5 848M53.5 822L27.5 848"/>
  <path d="M27.5 1465.5L53.5 1491.5M53.5 1465.5L27.5 1491.5"/>
 </g>
 <g stroke="#878787" stroke-width="3.5" stroke-linejoin="round" fill="none">
  <path d="M73 164H97V197L85 189L73 197Z"/>
  <path d="M73 818H97V849L85 841L73 849Z"/>
  <path d="M73 1461H97V1494L85 1486L73 1494Z"/>
 </g>
 <!-- chart 1 -->
 <g>
  <line x1="134.5" y1="260" x2="134.5" y2="503" stroke="#5a5a5a" stroke-width="2"/>
  <g stroke="#e6e6e6" stroke-width="2.5"><line x1="254" y1="260" x2="254" y2="503"/><line x1="373" y1="260" x2="373" y2="503"/><line x1="444" y1="260" x2="444" y2="503"/><line x1="495" y1="260" x2="495" y2="503"/></g>
  <rect x="135" y="291" width="105" height="60" fill="rgb(49,95,135)" fill-opacity="0.85" stroke="#000" stroke-width="2.5"/>
  <rect x="135" y="413" width="354" height="59" fill="rgb(49,95,135)" fill-opacity="0.85" stroke="#000" stroke-width="2.5"/>
 </g>
 <path d="M507 665L524.5 683L542 665" stroke="#3766d6" stroke-width="3" fill="none"/>
 <path d="M507 1246L525 1264L543 1246" stroke="#3766d6" stroke-width="3" fill="none"/>
 <!-- chart 3 -->
 <g>
  <line x1="182.5" y1="1556" x2="182.5" y2="1799" stroke="#5a5a5a" stroke-width="2"/>
  <g stroke="#e6e6e6" stroke-width="2.5"><line x1="270" y1="1556" x2="270" y2="1799"/><line x1="339" y1="1556" x2="339" y2="1799"/><line x1="405.7" y1="1556" x2="405.7" y2="1799"/><line x1="495.7" y1="1556" x2="495.7" y2="1799"/></g>
  <rect x="183" y="1579" width="273" height="38" fill="rgb(49,95,135)" fill-opacity="0.85" stroke="#000" stroke-width="2.5"/>
  <rect x="183" y="1659" width="85" height="38" fill="rgb(49,95,135)" fill-opacity="0.85" stroke="#000" stroke-width="2.5"/>
  <rect x="183" y="1740" width="147" height="38" fill="rgb(49,95,135)" fill-opacity="0.85" stroke="#000" stroke-width="2.5"/>
 </g>
</svg>
<!-- circle buttons -->
<div class="abs" style="left:558px;top:730px;width:69px;height:68px;border-radius:34px;background:#f2f2f2"></div>
<div class="abs" style="left:558px;top:799px;width:69px;height:69px;border-radius:34px;background:#f2f2f2"></div>
<svg class="abs" style="left:540px;top:700px" width="120" height="180" viewBox="540 700 120 180">
 <path d="M584 754L597 766.5L584 779 M598 754L611 766.5L598 779" stroke="#000" stroke-width="5" fill="none" stroke-linecap="round" stroke-linejoin="round"/>
 <path d="M592 823L579 835.5L592 848 M607 823L594 835.5L607 848" stroke="#000" stroke-width="5" fill="none" stroke-linecap="round" stroke-linejoin="round"/>
</svg>

<!-- TABLE -->
<svg class="abs" style="left:612px;top:124px" width="60" height="60" viewBox="0 0 60 60"><g fill="none" stroke="#fff" stroke-width="4.5"><rect x="7" y="20" width="32" height="32" rx="6"/><path d="M21 14V12Q21 6 27 6H47Q53 6 53 12V32Q53 38 47 38H45"/></g></svg>
<div class="abs" style="left:694px;top:116px;width:737px;height:74px;background:rgba(124,166,220,0.7)"></div>
<div class="lbl" style="left:692px;top:127px;font-size:51px;font-weight:bold;color:#bcd6fb;line-height:56px;letter-spacing:0px">00 47 03.10 -25 14 42.0</div>
<div class="abs" style="left:612px;top:204px;width:123px;height:61px;background:#000;border:2px solid #fff;border-radius:10px"></div>
<div class="abs" style="left:673px;top:205px;width:2px;height:59px;background:#fff"></div>
<svg class="abs" style="left:612px;top:204px" width="123" height="61"><path d="M21 30.5H42M82 30.5H104M93 19.5V41.5" stroke="#fff" stroke-width="3.5"/></svg>
<div class="lbl" style="left:742px;top:209px;font-size:51px;font-family:'Liberation Mono',monospace;color:#fff;line-height:56px">53.72'×38.84'</div>
<svg class="abs" style="left:1136px;top:204px" width="62" height="62" viewBox="0 0 62 62"><g fill="none" stroke-linecap="round" stroke-linejoin="round"><path d="M10 24A22 22 0 1 1 16 46" stroke="#000" stroke-width="9" transform="translate(2 2)"/><path d="M10 24A22 22 0 1 1 16 46" stroke="#e8321f" stroke-width="6.5"/><path d="M9 8V24H25" stroke="#e8321f" stroke-width="6.5"/></g></svg>
<svg class="abs" style="left:2603px;top:122px" width="64" height="64" viewBox="0 0 64 64"><g fill="none" stroke="#fff" stroke-width="5" stroke-linejoin="round" stroke-linecap="round"><path d="M32 4L58 20L32 36L6 20Z"/><path d="M5 32L32 48L59 32"/><path d="M5 44L32 60L59 44"/></g></svg>
<svg class="abs" style="left:2720px;top:122px" width="60" height="60" viewBox="0 0 60 60"><path d="M57.0 22.8 L57.0 37.2 L49.5 37.9 L46.5 42.9 L49.8 49.8 L37.2 57.0 L32.9 50.8 L27.1 50.8 L22.8 57.0 L10.2 49.8 L13.5 42.9 L10.5 37.9 L3.0 37.2 L3.0 22.8 L10.5 22.1 L13.5 17.1 L10.2 10.2 L22.8 3.0 L27.1 9.2 L32.9 9.2 L37.2 3.0 L49.8 10.2 L46.5 17.1 L49.5 22.1Z" fill="#fff" stroke="#fff" stroke-width="4" stroke-linejoin="round"/><circle cx="30" cy="30" r="7.5" fill="#000"/></svg>
<svg class="abs" style="left:2850px;top:115px" width="160" height="85" viewBox="2850 115 160 85"><g transform="rotate(-15 2934 158)"><ellipse cx="2934" cy="158" rx="68" ry="24" fill="none" stroke="#3a6ad0" stroke-width="2.5"/><ellipse cx="2934" cy="158" rx="64" ry="20" fill="none" stroke="#a83050" stroke-width="6"/><ellipse cx="2938" cy="155" rx="44" ry="11" fill="none" stroke="#c02838" stroke-width="4"/></g><text x="2860" y="170" font-family="Liberation Sans" font-weight="bold" font-size="40" fill="#000" stroke="#d8d8d8" stroke-width="1.5" textLength="138" lengthAdjust="spacingAndGlyphs">ALADIN</text></svg>
<div class="abs" style="left:605px;top:1112px;width:368px;height:104px;background:rgba(228,224,222,0.58)"></div>
<div class="abs" style="left:973px;top:1112px;width:368px;height:104px;background:rgba(14,14,32,0.9)"></div>
<div class="lbl" style="left:634px;top:1145px;font-size:31px;color:#111;line-height:34px">Datasets (960)</div>
<div class="lbl" style="left:1003px;top:1151px;font-size:29.5px;color:#fff;line-height:34px">Last sky selection</div>
<div class="abs" style="left:605px;top:1216px;width:2382px;height:54px;background:rgba(240,240,240,0.82)"></div>
<div class="abs" style="left:605px;top:1270px;width:2382px;height:3px;background:#e0e3e7"></div>
<div class="abs" style="left:605px;top:1273px;width:2382px;height:83.5px;background:rgba(232,231,231,0.83)"></div>
<div class="abs" style="left:605px;top:1356.5px;width:2382px;height:2px;background:#dcdfe3"></div>
<div class="abs" style="left:605px;top:1358.5px;width:2382px;height:87.0px;background:rgba(232,231,231,0.83)"></div>
<div class="abs" style="left:605px;top:1445.5px;width:2382px;height:2px;background:#dcdfe3"></div>
<div class="abs" style="left:605px;top:1447.5px;width:2382px;height:86.5px;background:rgba(232,231,231,0.83)"></div>
<div class="abs" style="left:605px;top:1534px;width:2382px;height:2px;background:#dcdfe3"></div>
<div class="abs" style="left:605px;top:1536px;width:2382px;height:86px;background:rgba(232,231,231,0.83)"></div>
<div class="abs" style="left:605px;top:1622px;width:2382px;height:2px;background:#dcdfe3"></div>
<div class="abs" style="left:605px;top:1624px;width:2382px;height:86px;background:rgba(232,231,231,0.83)"></div>
<div class="abs" style="left:605px;top:1710px;width:2382px;height:2px;background:#dcdfe3"></div>
<div class="abs" style="left:605px;top:1712px;width:2382px;height:85px;background:rgba(232,231,231,0.83)"></div>
<div class="abs" style="left:605px;top:1797px;width:2382px;height:2px;background:#dcdfe3"></div>
<div class="abs" style="left:2987px;top:1216px;width:30px;height:54px;background:#8c8c8c"></div>
<div class="abs" style="left:2987px;top:1270px;width:30px;height:529px;background:#f8f8f8"></div>
<div class="abs" style="left:2995px;top:1276px;width:11px;height:36px;border-radius:6px;background:#c1c1c1"></div>
<div class="abs" style="left:605px;top:1799px;width:2412px;height:29px;background:#f8f8f8"></div>
<div class="abs" style="left:611px;top:1807px;width:1237px;height:16px;border-radius:8px;background:#c1c1c1"></div>
<div class="abs" style="left:605px;top:1828px;width:2412px;height:12px;background:rgba(170,170,172,0.8)"></div>
<div class="lbl" style="left:2553px;top:1835px;font-size:30px;color:#3a7ab8;line-height:34px">ESO Archive Science Portal v2.4.8</div>
<svg class="abs" style="left:613px;top:1228px" width="34" height="30"><path d="M3 3H31M3 15H31M3 27H31" stroke="#212529" stroke-width="5.5" stroke-linecap="round"/></svg>
<div class="lbl" style="left:666px;top:1225px;font-size:30px;font-weight:bold;color:#212529;line-height:36px">Actions</div>
<svg class="abs" style="left:892px;top:1226px" width="19" height="34"><path d="M9.5 1L18 14H1Z M9.5 33L18 20H1Z" fill="#dcdcdc" stroke="#dcdcdc" stroke-width="1.5" stroke-linejoin="round"/></svg>
<div class="lbl" style="left:931px;top:1225px;font-size:30px;font-weight:bold;color:#212529;line-height:36px">Data Type</div>
<svg class="abs" style="left:1153px;top:1226px" width="19" height="34"><path d="M9.5 1L18 14H1Z M9.5 33L18 20H1Z" fill="#dcdcdc" stroke="#dcdcdc" stroke-width="1.5" stroke-linejoin="round"/></svg>
<div class="lbl" style="left:1192px;top:1225px;font-size:30px;font-weight:bold;color:#212529;line-height:36px">Spec.Range</div>
<svg class="abs" style="left:1440.5px;top:1226px" width="19" height="34"><path d="M9.5 1L18 14H1Z M9.5 33L18 20H1Z" fill="#dcdcdc" stroke="#dcdcdc" stroke-width="1.5" stroke-linejoin="round"/></svg>
<div class="lbl" style="left:1480px;top:1225px;font-size:30px;font-weight:bold;color:#212529;line-height:36px">Filt.</div>
<svg class="abs" style="left:1610px;top:1226px" width="19" height="34"><path d="M9.5 1L18 14H1Z M9.5 33L18 20H1Z" fill="#dcdcdc" stroke="#dcdcdc" stroke-width="1.5" stroke-linejoin="round"/></svg>
<div class="lbl" style="left:1650px;top:1225px;font-size:30px;font-weight:bold;color:#212529;line-height:36px">Spec.Res.</div>
<svg class="abs" style="left:1871px;top:1226px" width="19" height="34"><path d="M9.5 1L18 14H1Z M9.5 33L18 20H1Z" fill="#dcdcdc" stroke="#dcdcdc" stroke-width="1.5" stroke-linejoin="round"/></svg>
<div class="lbl" style="left:1910px;top:1225px;font-size:30px;font-weight:bold;color:#212529;line-height:36px">Sens.(AB mag)</div>
<svg class="abs" style="left:2202px;top:1226px" width="19" height="34"><path d="M9.5 1L18 14H1Z M9.5 33L18 20H1Z" fill="#dcdcdc" stroke="#dcdcdc" stroke-width="1.5" stroke-linejoin="round"/></svg>
<div class="lbl" style="left:2241px;top:1225px;font-size:30px;font-weight:bold;color:#212529;line-height:36px">Obs.Date</div>
<svg class="abs" style="left:2451.5px;top:1226px" width="19" height="34"><path d="M9.5 1L18 14H1Z M9.5 33L18 20H1Z" fill="#dcdcdc" stroke="#dcdcdc" stroke-width="1.5" stroke-linejoin="round"/></svg>
<div class="lbl" style="left:2491px;top:1225px;font-size:30px;font-weight:bold;color:#212529;line-height:36px">FoV</div>
<svg class="abs" style="left:2620.5px;top:1226px" width="19" height="34"><path d="M9.5 1L18 14H1Z M9.5 33L18 20H1Z" fill="#dcdcdc" stroke="#dcdcdc" stroke-width="1.5" stroke-linejoin="round"/></svg>
<div class="lbl" style="left:2660px;top:1225px;font-size:30px;font-weight:bold;color:#212529;line-height:36px">Sky Res.</div>
<svg class="abs" style="left:2859px;top:1226px" width="19" height="34"><path d="M9.5 1L18 14H1Z M9.5 33L18 20H1Z" fill="#dcdcdc" stroke="#dcdcdc" stroke-width="1.5" stroke-linejoin="round"/></svg>
<div class="abs" style="left:2899px;top:1225px;width:88px;overflow:hidden"><div class="lbl" style="position:relative;font-size:30px;font-weight:bold;color:#212529;line-height:36px">Collection</div></div>
<div class="abs" style="left:613px;top:1285px;width:32px;height:32px;border:3px solid #2a2d31;border-radius:5px"></div>
<svg class="abs" style="left:700px;top:1285px" width="180" height="40" viewBox="0 0 180 40">
<g fill="none" stroke="#000" stroke-width="4.5"><circle cx="18" cy="19" r="13"/></g>
<g stroke="#000" stroke-width="5" stroke-linecap="round"><path d="M18 2V8M18 30V36M1 19H7M29 19H35"/></g><circle cx="18" cy="19" r="2.6" fill="#000"/>
<g fill="none" stroke="#000" stroke-width="4.5" stroke-linecap="round"><circle cx="61" cy="15" r="12"/><path d="M70 24L81 35"/></g>
<path d="M110 2V22 M101 14L110 23L119 14" fill="none" stroke="#000" stroke-width="4.5" stroke-linecap="round" stroke-linejoin="round"/>
<path d="M96 25H104L110 30L116 25H124Q129 25 129 30V32Q129 37 124 37H97Q92 37 92 32V30Q92 25 96 25Z" fill="#000"/><circle cx="123" cy="31" r="2" fill="#c8c8ca"/>
<rect x="138" y="5" width="37" height="32" rx="3" fill="#000"/><circle cx="147" cy="14" r="4" fill="#c8c8ca"/><path d="M141 33L153 20L160 27L165 22L172 33Z" fill="#c8c8ca"/>
</svg>
<div class="lbl" style="left:931px;top:1283px;font-size:31.5px;color:#2b2b2b;line-height:34px;transform:scaleX(0.93);transform-origin:0 0">CUBE</div>
<div class="lbl" style="left:1192px;top:1283px;font-size:31.5px;color:#2b2b2b;line-height:34px;letter-spacing:0.9px">460-935 nm</div>
<div class="lbl" style="left:1481px;top:1283px;font-size:31.5px;color:#2b2b2b;line-height:34px;">-</div>
<div class="lbl" style="left:1650px;top:1283px;font-size:31.5px;color:#2b2b2b;line-height:34px;letter-spacing:0.8px">2989</div>
<div class="lbl" style="left:1910px;top:1283px;font-size:31.5px;color:#2b2b2b;line-height:34px;letter-spacing:0px">21.58</div>
<div class="lbl" style="left:2242px;top:1283px;font-size:31.5px;color:#2b2b2b;line-height:34px;letter-spacing:1.0px">2024-08-28</div>
<div class="lbl" style="left:2491px;top:1283px;font-size:31.5px;color:#2b2b2b;line-height:34px;letter-spacing:0.4px">1.49'</div>
<div class="lbl" style="left:2660px;top:1283px;font-size:31.5px;color:#2b2b2b;line-height:34px;letter-spacing:0.2px">1.863"</div>
<div class="lbl" style="left:2242px;top:1316px;font-size:31.5px;color:#2b2b2b;line-height:34px;letter-spacing:0.2px">03:17:36</div>
<div class="abs" style="left:2899px;top:1283px;width:88px;height:40px;overflow:hidden"><div class="lbl" style="position:relative;font-size:31.5px;color:#2b2b2b;line-height:34px;transform:scaleX(0.93);transform-origin:0 0">MUSE</div></div>
<div class="abs" style="left:613px;top:1370.5px;width:32px;height:32px;border:3px solid #2a2d31;border-radius:5px"></div>
<svg class="abs" style="left:700px;top:1370.5px" width="180" height="40" viewBox="0 0 180 40">
<g fill="none" stroke="#000" stroke-width="4.5"><circle cx="18" cy="19" r="13"/></g>
<g stroke="#000" stroke-width="5" stroke-linecap="round"><path d="M18 2V8M18 30V36M1 19H7M29 19H35"/></g><circle cx="18" cy="19" r="2.6" fill="#000"/>
<g fill="none" stroke="#000" stroke-width="4.5" stroke-linecap="round"><circle cx="61" cy="15" r="12"/><path d="M70 24L81 35"/></g>
<path d="M110 2V22 M101 14L110 23L119 14" fill="none" stroke="#000" stroke-width="4.5" stroke-linecap="round" stroke-linejoin="round"/>
<path d="M96 25H104L110 30L116 25H124Q129 25 129 30V32Q129 37 124 37H97Q92 37 92 32V30Q92 25 96 25Z" fill="#000"/><circle cx="123" cy="31" r="2" fill="#c8c8ca"/>
<rect x="138" y="5" width="37" height="32" rx="3" fill="#000"/><circle cx="147" cy="14" r="4" fill="#c8c8ca"/><path d="M141 33L153 20L160 27L165 22L172 33Z" fill="#c8c8ca"/>
</svg>
<div class="lbl" style="left:931px;top:1368.5px;font-size:31.5px;color:#2b2b2b;line-height:34px;transform:scaleX(0.93);transform-origin:0 0">CUBE</div>
<div class="lbl" style="left:1192px;top:1368.5px;font-size:31.5px;color:#2b2b2b;line-height:34px;letter-spacing:0.9px">460-935 nm</div>
<div class="lbl" style="left:1481px;top:1368.5px;font-size:31.5px;color:#2b2b2b;line-height:34px;">-</div>
<div class="lbl" style="left:1650px;top:1368.5px;font-size:31.5px;color:#2b2b2b;line-height:34px;letter-spacing:0.8px">2989</div>
<div class="lbl" style="left:1910px;top:1368.5px;font-size:31.5px;color:#2b2b2b;line-height:34px;letter-spacing:0px">18.06</div>
<div class="lbl" style="left:2242px;top:1368.5px;font-size:31.5px;color:#2b2b2b;line-height:34px;letter-spacing:1.0px">2024-08-28</div>
<div class="lbl" style="left:2491px;top:1368.5px;font-size:31.5px;color:#2b2b2b;line-height:34px;letter-spacing:0.4px">1.51'</div>
<div class="lbl" style="left:2660px;top:1368.5px;font-size:31.5px;color:#2b2b2b;line-height:34px;letter-spacing:0.2px">1.668"</div>
<div class="lbl" style="left:2242px;top:1401.5px;font-size:31.5px;color:#2b2b2b;line-height:34px;letter-spacing:0.2px">03:06:57</div>
<div class="abs" style="left:2899px;top:1368.5px;width:88px;height:40px;overflow:hidden"><div class="lbl" style="position:relative;font-size:31.5px;color:#2b2b2b;line-height:34px;transform:scaleX(0.93);transform-origin:0 0">MUSE</div></div>
<div class="abs" style="left:613px;top:1459.5px;width:32px;height:32px;border:3px solid #2a2d31;border-radius:5px"></div>
<svg class="abs" style="left:700px;top:1459.5px" width="180" height="40" viewBox="0 0 180 40">
<g fill="none" stroke="#000" stroke-width="4.5"><circle cx="18" cy="19" r="13"/></g>
<g stroke="#000" stroke-width="5" stroke-linecap="round"><path d="M18 2V8M18 30V36M1 19H7M29 19H35"/></g><circle cx="18" cy="19" r="2.6" fill="#000"/>
<g fill="none" stroke="#000" stroke-width="4.5" stroke-linecap="round"><circle cx="61" cy="15" r="12"/><path d="M70 24L81 35"/></g>
<path d="M110 2V22 M101 14L110 23L119 14" fill="none" stroke="#000" stroke-width="4.5" stroke-linecap="round" stroke-linejoin="round"/>
<path d="M96 25H104L110 30L116 25H124Q129 25 129 30V32Q129 37 124 37H97Q92 37 92 32V30Q92 25 96 25Z" fill="#000"/><circle cx="123" cy="31" r="2" fill="#c8c8ca"/>
<rect x="138" y="5" width="37" height="32" rx="3" fill="#000"/><circle cx="147" cy="14" r="4" fill="#c8c8ca"/><path d="M141 33L153 20L160 27L165 22L172 33Z" fill="#c8c8ca"/>
</svg>
<div class="lbl" style="left:931px;top:1457.5px;font-size:31.5px;color:#2b2b2b;line-height:34px;transform:scaleX(0.93);transform-origin:0 0">CUBE</div>
<div class="lbl" style="left:1192px;top:1457.5px;font-size:31.5px;color:#2b2b2b;line-height:34px;letter-spacing:0.9px">460-935.2 nm</div>
<div class="lbl" style="left:1481px;top:1457.5px;font-size:31.5px;color:#2b2b2b;line-height:34px;">-</div>
<div class="lbl" style="left:1650px;top:1457.5px;font-size:31.5px;color:#2b2b2b;line-height:34px;letter-spacing:0.8px">2989</div>
<div class="lbl" style="left:1910px;top:1457.5px;font-size:31.5px;color:#2b2b2b;line-height:34px;letter-spacing:0px">20.54</div>
<div class="lbl" style="left:2242px;top:1457.5px;font-size:31.5px;color:#2b2b2b;line-height:34px;letter-spacing:1.0px">2024-06-26</div>
<div class="lbl" style="left:2491px;top:1457.5px;font-size:31.5px;color:#2b2b2b;line-height:34px;letter-spacing:0.4px">1.48'</div>
<div class="lbl" style="left:2660px;top:1457.5px;font-size:31.5px;color:#2b2b2b;line-height:34px;letter-spacing:0.2px">1.856"</div>
<div class="lbl" style="left:2242px;top:1490.5px;font-size:31.5px;color:#2b2b2b;line-height:34px;letter-spacing:0.2px">07:55:45</div>
<div class="abs" style="left:2899px;top:1457.5px;width:88px;height:40px;overflow:hidden"><div class="lbl" style="position:relative;font-size:31.5px;color:#2b2b2b;line-height:34px;transform:scaleX(0.93);transform-origin:0 0">MUSE</div></div>
<div class="abs" style="left:613px;top:1548px;width:32px;height:32px;border:3px solid #2a2d31;border-radius:5px"></div>
<svg class="abs" style="left:700px;top:1548px" width="180" height="40" viewBox="0 0 180 40">
<g fill="none" stroke="#000" stroke-width="4.5"><circle cx="18" cy="19" r="13"/></g>
<g stroke="#000" stroke-width="5" stroke-linecap="round"><path d="M18 2V8M18 30V36M1 19H7M29 19H35"/></g><circle cx="18" cy="19" r="2.6" fill="#000"/>
<g fill="none" stroke="#000" stroke-width="4.5" stroke-linecap="round"><circle cx="61" cy="15" r="12"/><path d="M70 24L81 35"/></g>
<path d="M110 2V22 M101 14L110 23L119 14" fill="none" stroke="#000" stroke-width="4.5" stroke-linecap="round" stroke-linejoin="round"/>
<path d="M96 25H104L110 30L116 25H124Q129 25 129 30V32Q129 37 124 37H97Q92 37 92 32V30Q92 25 96 25Z" fill="#000"/><circle cx="123" cy="31" r="2" fill="#c8c8ca"/>
<rect x="138" y="5" width="37" height="32" rx="3" fill="#000"/><circle cx="147" cy="14" r="4" fill="#c8c8ca"/><path d="M141 33L153 20L160 27L165 22L172 33Z" fill="#c8c8ca"/>
</svg>
<div class="lbl" style="left:931px;top:1546px;font-size:31.5px;color:#2b2b2b;line-height:34px;transform:scaleX(0.93);transform-origin:0 0">CUBE</div>
<div class="lbl" style="left:1192px;top:1546px;font-size:31.5px;color:#2b2b2b;line-height:34px;letter-spacing:0.9px">460-935.1 nm</div>
<div class="lbl" style="left:1481px;top:1546px;font-size:31.5px;color:#2b2b2b;line-height:34px;">-</div>
<div class="lbl" style="left:1650px;top:1546px;font-size:31.5px;color:#2b2b2b;line-height:34px;letter-spacing:0.8px">2989</div>
<div class="lbl" style="left:1910px;top:1546px;font-size:31.5px;color:#2b2b2b;line-height:34px;letter-spacing:0px">18.12</div>
<div class="lbl" style="left:2242px;top:1546px;font-size:31.5px;color:#2b2b2b;line-height:34px;letter-spacing:1.0px">2024-06-26</div>
<div class="lbl" style="left:2491px;top:1546px;font-size:31.5px;color:#2b2b2b;line-height:34px;letter-spacing:0.4px">1.51'</div>
<div class="lbl" style="left:2660px;top:1546px;font-size:31.5px;color:#2b2b2b;line-height:34px;letter-spacing:0.2px">1.771"</div>
<div class="lbl" style="left:2242px;top:1579px;font-size:31.5px;color:#2b2b2b;line-height:34px;letter-spacing:0.2px">07:45:08</div>
<div class="abs" style="left:2899px;top:1546px;width:88px;height:40px;overflow:hidden"><div class="lbl" style="position:relative;font-size:31.5px;color:#2b2b2b;line-height:34px;transform:scaleX(0.93);transform-origin:0 0">MUSE-DEEP</div></div>
<div class="abs" style="left:613px;top:1636px;width:32px;height:32px;border:3px solid #2a2d31;border-radius:5px"></div>
<svg class="abs" style="left:700px;top:1636px" width="180" height="40" viewBox="0 0 180 40">
<g fill="none" stroke="#000" stroke-width="4.5"><circle cx="18" cy="19" r="13"/></g>
<g stroke="#000" stroke-width="5" stroke-linecap="round"><path d="M18 2V8M18 30V36M1 19H7M29 19H35"/></g><circle cx="18" cy="19" r="2.6" fill="#000"/>
<g fill="none" stroke="#000" stroke-width="4.5" stroke-linecap="round"><circle cx="61" cy="15" r="12"/><path d="M70 24L81 35"/></g>
<path d="M110 2V22 M101 14L110 23L119 14" fill="none" stroke="#000" stroke-width="4.5" stroke-linecap="round" stroke-linejoin="round"/>
<path d="M96 25H104L110 30L116 25H124Q129 25 129 30V32Q129 37 124 37H97Q92 37 92 32V30Q92 25 96 25Z" fill="#000"/><circle cx="123" cy="31" r="2" fill="#c8c8ca"/>
<rect x="138" y="5" width="37" height="32" rx="3" fill="#000"/><circle cx="147" cy="14" r="4" fill="#c8c8ca"/><path d="M141 33L153 20L160 27L165 22L172 33Z" fill="#c8c8ca"/>
</svg>
<div class="lbl" style="left:931px;top:1634px;font-size:31.5px;color:#2b2b2b;line-height:34px;transform:scaleX(0.93);transform-origin:0 0">CUBE</div>
<div class="lbl" style="left:1192px;top:1634px;font-size:31.5px;color:#2b2b2b;line-height:34px;letter-spacing:0.9px">460-935.2 nm</div>
<div class="lbl" style="left:1481px;top:1634px;font-size:31.5px;color:#2b2b2b;line-height:34px;">-</div>
<div class="lbl" style="left:1650px;top:1634px;font-size:31.5px;color:#2b2b2b;line-height:34px;letter-spacing:0.8px">2989</div>
<div class="lbl" style="left:1910px;top:1634px;font-size:31.5px;color:#2b2b2b;line-height:34px;letter-spacing:0px">18.01</div>
<div class="lbl" style="left:2242px;top:1634px;font-size:31.5px;color:#2b2b2b;line-height:34px;letter-spacing:1.0px">2024-06-26</div>
<div class="lbl" style="left:2491px;top:1634px;font-size:31.5px;color:#2b2b2b;line-height:34px;letter-spacing:0.4px">1.51'</div>
<div class="lbl" style="left:2660px;top:1634px;font-size:31.5px;color:#2b2b2b;line-height:34px;letter-spacing:0.2px">1.874"</div>
<div class="lbl" style="left:2242px;top:1667px;font-size:31.5px;color:#2b2b2b;line-height:34px;letter-spacing:0.2px">07:45:08</div>
<div class="abs" style="left:2899px;top:1634px;width:88px;height:40px;overflow:hidden"><div class="lbl" style="position:relative;font-size:31.5px;color:#2b2b2b;line-height:34px;transform:scaleX(0.93);transform-origin:0 0">MUSE</div></div>
<div class="abs" style="left:613px;top:1724px;width:32px;height:32px;border:3px solid #2a2d31;border-radius:5px"></div>
<svg class="abs" style="left:700px;top:1724px" width="180" height="40" viewBox="0 0 180 40">
<g fill="none" stroke="#000" stroke-width="4.5"><circle cx="18" cy="19" r="13"/></g>
<g stroke="#000" stroke-width="5" stroke-linecap="round"><path d="M18 2V8M18 30V36M1 19H7M29 19H35"/></g><circle cx="18" cy="19" r="2.6" fill="#000"/>
<g fill="none" stroke="#000" stroke-width="4.5" stroke-linecap="round"><circle cx="61" cy="15" r="12"/><path d="M70 24L81 35"/></g>
<path d="M110 2V22 M101 14L110 23L119 14" fill="none" stroke="#000" stroke-width="4.5" stroke-linecap="round" stroke-linejoin="round"/>
<path d="M96 25H104L110 30L116 25H124Q129 25 129 30V32Q129 37 124 37H97Q92 37 92 32V30Q92 25 96 25Z" fill="#000"/><circle cx="123" cy="31" r="2" fill="#c8c8ca"/>
<rect x="138" y="5" width="37" height="32" rx="3" fill="#000"/><circle cx="147" cy="14" r="4" fill="#c8c8ca"/><path d="M141 33L153 20L160 27L165 22L172 33Z" fill="#c8c8ca"/>
</svg>
<div class="lbl" style="left:931px;top:1722px;font-size:31.5px;color:#2b2b2b;line-height:34px;transform:scaleX(0.93);transform-origin:0 0">CUBE</div>
<div class="lbl" style="left:1192px;top:1722px;font-size:31.5px;color:#2b2b2b;line-height:34px;letter-spacing:0.9px">460-935.2 nm</div>
<div class="lbl" style="left:1481px;top:1722px;font-size:31.5px;color:#2b2b2b;line-height:34px;">-</div>
<div class="lbl" style="left:1650px;top:1722px;font-size:31.5px;color:#2b2b2b;line-height:34px;letter-spacing:0.8px">2989</div>
<div class="lbl" style="left:1910px;top:1722px;font-size:31.5px;color:#2b2b2b;line-height:34px;letter-spacing:0px">19.84</div>
<div class="lbl" style="left:2242px;top:1722px;font-size:31.5px;color:#2b2b2b;line-height:34px;letter-spacing:1.0px">2023-05-30</div>
<div class="lbl" style="left:2491px;top:1722px;font-size:31.5px;color:#2b2b2b;line-height:34px;letter-spacing:0.4px">2.07'</div>
<div class="lbl" style="left:2660px;top:1722px;font-size:31.5px;color:#2b2b2b;line-height:34px;letter-spacing:0.2px">0.898"</div>
<div class="lbl" style="left:2242px;top:1755px;font-size:31.5px;color:#2b2b2b;line-height:34px;letter-spacing:0.2px">09:34:46</div>
<div class="abs" style="left:2899px;top:1722px;width:88px;height:40px;overflow:hidden"><div class="lbl" style="position:relative;font-size:31.5px;color:#2b2b2b;line-height:34px;transform:scaleX(0.93);transform-origin:0 0">MUSE</div></div>
<div class="abs" style="left:2863px;top:1166px;width:68px;height:68px;border-radius:34px;background:#fafafa"></div>
<div class="abs" style="left:2933px;top:1166px;width:68px;height:68px;border-radius:34px;background:#fafafa"></div>
<svg class="abs" style="left:2863px;top:1166px" width="140" height="68"><g fill="none" stroke="#000" stroke-width="5" stroke-linecap="round" stroke-linejoin="round"><path d="M22 35L34 23.5L46 35M22 49L34 37.5L46 49"/><path d="M92 25L104 37L116 25M92 39L104 51L116 39"/></g></svg>
</body></html>
